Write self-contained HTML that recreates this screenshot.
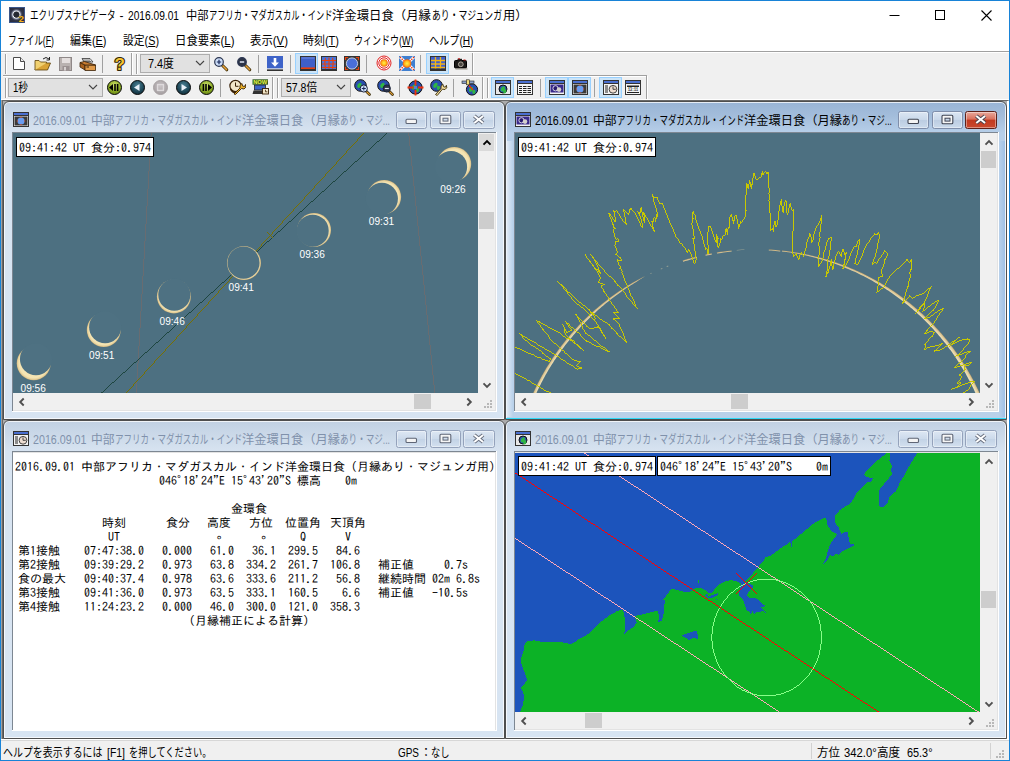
<!DOCTYPE html>
<html lang="ja"><head><meta charset="utf-8"><title>エクリプスナビゲータ</title>
<style>
html,body{margin:0;padding:0}
body{width:1010px;height:761px;position:relative;overflow:hidden;background:#f0f0f0;font:12px/1 'Liberation Sans','Noto Sans CJK JP',sans-serif}
div,span,svg{position:absolute}
u{text-decoration:underline;text-underline-offset:1px}
.m{font:12px/12px 'IPAGothic','Liberation Mono','Noto Sans CJK JP',monospace;white-space:pre;-webkit-text-stroke:0}
.m b{display:inline-block;width:6px;font-weight:normal}
</style></head>
<body>
<div style="position:absolute;left:0px;top:0px;width:1010px;height:761px;background:#1883d7;"></div>
<div style="position:absolute;left:1px;top:1px;width:1008px;height:759px;background:#f0f0f0;"></div>
<div style="position:absolute;left:1px;top:1px;width:1008px;height:50px;background:#fff;"></div>
<svg style="position:absolute;left:9px;top:7px" width="16" height="16" viewBox="0 0 16 16">
<defs><radialGradient id="cor" cx="50%" cy="50%" r="50%"><stop offset="0" stop-color="#23262f"/><stop offset=".44" stop-color="#262933"/><stop offset=".56" stop-color="#f2f4fa"/><stop offset=".68" stop-color="#9aa0b4"/><stop offset="1" stop-color="#3a3f55" stop-opacity="0"/></radialGradient>
<radialGradient id="ibg" cx="50%" cy="50%" r="70%"><stop offset="0" stop-color="#3d4258"/><stop offset="1" stop-color="#262a3c"/></radialGradient></defs>
<rect width="16" height="16" fill="#3b5689"/><rect x="1" y="1" width="14" height="14" fill="url(#ibg)"/><circle cx="7.400" cy="7.600" r="6.200" fill="url(#cor)"/>
<text x="9.800" y="15.300" font-family="Liberation Sans,sans-serif" font-weight="bold" font-size="9.400" fill="#f5b31c" stroke="#3a2c10" stroke-width=".5" paint-order="stroke">2</text></svg>
<svg style="position:absolute;left:870px;top:1px" width="139" height="30" viewBox="0 0 139 30">
<path d="M19.500 14.500h10" stroke="#000" stroke-width="1" fill="none"/>
<rect x="65.5" y="9.5" width="9" height="9" stroke="#000" stroke-width="1" fill="none"/>
<path d="M111.5 9.5l10 10M121.5 9.5l-10 10" stroke="#000" stroke-width="1.1" fill="none"/></svg>
<div style="position:absolute;left:1px;top:51px;width:1008px;height:50px;background:#f0f0f0;"></div>
<div style="position:absolute;left:1px;top:51px;width:1008px;height:1px;background:#a0a0a0;"></div>
<div style="position:absolute;left:1px;top:52px;width:1008px;height:1px;background:#fff;"></div>
<div style="position:absolute;left:3px;top:75px;width:644px;height:1px;background:#a0a0a0;"></div>
<div style="position:absolute;left:3px;top:76px;width:644px;height:1px;background:#fff;"></div>
<div style="position:absolute;left:472px;top:53px;width:1px;height:22px;background:#a0a0a0;"></div>
<div style="position:absolute;left:473px;top:53px;width:1px;height:22px;background:#fff;"></div>
<div style="position:absolute;left:646px;top:76px;width:1px;height:23px;background:#a0a0a0;"></div>
<div style="position:absolute;left:647px;top:76px;width:1px;height:23px;background:#fff;"></div>
<div style="position:absolute;left:1px;top:99px;width:1008px;height:1px;background:#fff;"></div>
<div style="position:absolute;left:5px;top:54px;width:1px;height:20px;background:#a0a0a0;"></div>
<div style="position:absolute;left:6px;top:54px;width:1px;height:20px;background:#fff;"></div>
<div style="position:absolute;left:136px;top:54px;width:1px;height:20px;background:#a0a0a0;"></div>
<div style="position:absolute;left:137px;top:54px;width:1px;height:20px;background:#fff;"></div>
<div style="position:absolute;left:5px;top:78px;width:1px;height:20px;background:#a0a0a0;"></div>
<div style="position:absolute;left:6px;top:78px;width:1px;height:20px;background:#fff;"></div>
<div style="position:absolute;left:277px;top:78px;width:1px;height:20px;background:#a0a0a0;"></div>
<div style="position:absolute;left:278px;top:78px;width:1px;height:20px;background:#fff;"></div>
<div style="position:absolute;left:487px;top:78px;width:1px;height:20px;background:#a0a0a0;"></div>
<div style="position:absolute;left:488px;top:78px;width:1px;height:20px;background:#fff;"></div>
<svg style="position:absolute;left:12px;top:56px" width="16" height="16" viewBox="0 0 16 16"><path d="M1.500 1.500h7l4 4v8h-11z" fill="#fff" stroke="#4a4a4a"/><path d="M8.500 1.500v4h4" fill="#ececec" stroke="#4a4a4a"/></svg>
<svg style="position:absolute;left:34px;top:56px" width="17" height="16" viewBox="0 0 17 16"><path d="M1 14l2.5-7h13l-3 7z" fill="#d9a336" stroke="#5a3f08" stroke-width=".8"/><path d="M1 14V4.5h4l1.5 1.5h6v1" fill="#f0d070" stroke="#5a3f08" stroke-width=".8"/><path d="M9 3q3-3 6 0" stroke="#222" fill="none"/><path d="M15.5 1v3h-3" stroke="#222" fill="none"/></svg>
<svg style="position:absolute;left:59px;top:56.5px" width="13" height="14" viewBox="0 0 13 14"><rect x=".5" y=".5" width="12" height="13" fill="#b9b2b0" stroke="#8f8888"/><rect x="3" y="1" width="8" height="5" fill="#e4dfde"/><rect x="3.5" y="9" width="7" height="5.5" fill="#9b9292"/><rect x="5" y="10" width="2" height="3.5" fill="#d6d0cf"/></svg>
<svg style="position:absolute;left:79px;top:56px" width="17" height="15" viewBox="0 0 17 15"><path d="M3 2.5h8l3 3.5h-9z" fill="#fff" stroke="#333" stroke-width=".8"/><path d="M4 4h7M5 5.3h7" stroke="#333" stroke-width=".7"/><path d="M1 6.5l5 2.5v5l-5-3z" fill="#a8601c" stroke="#3a2208" stroke-width=".8"/><path d="M6 9h10.5v5.5H6z" fill="#e09a48" stroke="#3a2208" stroke-width=".8"/><path d="M1 6.5l4.5-1l11 3.5H6z" fill="#c97c30" stroke="#3a2208" stroke-width=".8"/><rect x="7.5" y="10.5" width="2.5" height="1" fill="#3a2208"/></svg>
<div style="position:absolute;left:102px;top:55px;width:1px;height:18px;background:#a0a0a0;"></div>
<svg style="position:absolute;left:111px;top:54px" width="18" height="19" viewBox="0 0 18 19"><text x="8.800" y="16" text-anchor="middle" font-family="Liberation Sans,sans-serif" font-weight="bold" font-size="17" fill="#f5c431" stroke="#2e2408" stroke-width="2.200" paint-order="stroke" stroke-linejoin="round">?</text></svg>
<div style="position:absolute;left:131px;top:53px;width:1px;height:22px;background:#a0a0a0;"></div>
<div style="position:absolute;left:132px;top:53px;width:1px;height:22px;background:#fff;"></div>
<div style="position:absolute;left:140px;top:54px;width:70px;height:19px;background:#e1e1e1;border:1px solid #adadad;box-sizing:border-box;"></div>
<svg style="position:absolute;left:195px;top:60px" width="10" height="7" viewBox="0 0 10 7"><path d="M1 1l4 4l4-4" stroke="#444" stroke-width="1.1" fill="none"/></svg>
<svg style="position:absolute;left:213px;top:56px" width="16" height="16" viewBox="0 0 16 16"><path d="M9.500 9.500l4.300 4.300" stroke="#3a2c08" stroke-width="3" stroke-linecap="round"/><path d="M9.800 9.800l3.800 3.800" stroke="#e9a33a" stroke-width="1.500" stroke-linecap="round"/><circle cx="6" cy="6" r="4.300" fill="#cfe0fb" stroke="#2a3550" stroke-width="1.200"/><path d="M3.800 6h4.400M6 3.800v4.400" stroke="#1a2a5a" stroke-width="1.200"/></svg>
<svg style="position:absolute;left:236px;top:56px" width="16" height="16" viewBox="0 0 16 16"><path d="M9.500 9.500l4.300 4.300" stroke="#3a2c08" stroke-width="3" stroke-linecap="round"/><path d="M9.800 9.800l3.800 3.800" stroke="#e9a33a" stroke-width="1.500" stroke-linecap="round"/><circle cx="6" cy="6" r="4.300" fill="#2c3448" stroke="#2a3550" stroke-width="1.200"/><path d="M3.800 6h4.400" stroke="#dfe6f5" stroke-width="1.500"/></svg>
<div style="position:absolute;left:258px;top:55px;width:1px;height:18px;background:#a0a0a0;"></div>
<svg style="position:absolute;left:267px;top:56px" width="16" height="15" viewBox="0 0 16 15"><rect width="16" height="12.5" fill="#3e63c8"/><rect y="12.6" width="16" height="1" fill="#dfe4ee"/><rect y="13.4" width="16" height="1.6" fill="#333"/><path d="M6.7 2h2.6v4.5h2.6l-3.9 4.2l-3.9-4.2h2.6z" fill="#fff"/></svg>
<div style="position:absolute;left:290px;top:55px;width:1px;height:18px;background:#a0a0a0;"></div>
<div style="position:absolute;left:295px;top:53px;width:23px;height:21px;background:#cce4f7;border:1px solid #99d1ff;box-sizing:border-box;"></div>
<svg style="position:absolute;left:300px;top:56px" width="16" height="15" viewBox="0 0 16 15"><rect x=".5" y=".5" width="15" height="14" fill="#3e5fc8" stroke="#333"/><rect x="1" y="11.4" width="14" height="1.6" fill="#e8400c"/><rect x="1" y="13" width="14" height="1.5" fill="#333"/><rect x="1.5" y="1.5" width="13" height="1" fill="#6f8be0"/></svg>
<svg style="position:absolute;left:321px;top:56px" width="16" height="15" viewBox="0 0 16 15"><rect x=".5" y=".5" width="15" height="14" fill="#4a72d8" stroke="#333"/><path d="M1 4.5h14M1 8h14M1 11.5h14M4.5 2q-1.5 5 0 11M8 1.5v12M11.5 2q1.5 5 0 11" stroke="#e8400c" stroke-width="1.1" fill="none"/><rect x="1" y="13" width="14" height="1.5" fill="#333"/></svg>
<svg style="position:absolute;left:344px;top:56px" width="16" height="15" viewBox="0 0 16 15"><rect x=".5" y=".5" width="15" height="14" fill="#3b3b3b" stroke="#333"/><circle cx="8" cy="7.5" r="5.6" fill="#4a6fd8" stroke="#dfe6f5" stroke-width=".8"/><path d="M1.5 4V1.5H4M12 1.5h2.5V4M14.5 11v2.5H12M4 13.5H1.5V11" stroke="#e8400c" stroke-width="1.2" fill="none"/></svg>
<div style="position:absolute;left:366px;top:55px;width:1px;height:18px;background:#a0a0a0;"></div>
<svg style="position:absolute;left:376px;top:55px" width="16" height="16" viewBox="0 0 16 16"><defs><radialGradient id="sun"><stop offset="0" stop-color="#fff24a"/><stop offset=".6" stop-color="#ffb41a"/><stop offset="1" stop-color="#f0560c"/></radialGradient></defs><circle cx="8" cy="8" r="7" fill="#fff" stroke="#e02020" stroke-width="1"/><circle cx="8" cy="8" r="5.2" fill="none" stroke="#e02020" stroke-width="1"/><circle cx="8" cy="8" r="3.8" fill="url(#sun)"/></svg>
<svg style="position:absolute;left:399px;top:56px" width="16" height="15" viewBox="0 0 16 15"><rect width="16" height="15" fill="#3f7fd0"/><path d="M1 1l4.5 4.5M15 1l-4.5 4.5M1 14l4.5-4.5M15 14l-4.5-4.5" stroke="#fff" stroke-width="2.8"/><path d="M1 1l4 4M15 1l-4 4M1 14l4-4M15 14l-4-4" stroke="#e8300c" stroke-width="1.4" stroke-dasharray="1.4 1"/><circle cx="8" cy="7.5" r="4.3" fill="url(#sun)"/></svg>
<div style="position:absolute;left:420px;top:55px;width:1px;height:18px;background:#a0a0a0;"></div>
<div style="position:absolute;left:426px;top:53px;width:23px;height:21px;background:#cce4f7;border:1px solid #99d1ff;box-sizing:border-box;"></div>
<svg style="position:absolute;left:430px;top:56px" width="16" height="15" viewBox="0 0 16 15"><rect x=".5" y=".5" width="15" height="14" fill="#3e5fd0" stroke="#333"/><path d="M1 4.5h14M1 8h14M1 11.5h14M5.5 1v12M10.5 1v12" stroke="#f0b41a" stroke-width="1.3" fill="none"/><rect x="1" y="12.6" width="14" height="1.9" fill="#333"/></svg>
<svg style="position:absolute;left:454px;top:58px" width="14" height="12" viewBox="0 0 14 12"><rect x=".5" y="2.5" width="12" height="7.5" rx="1" fill="#1c1a18" stroke="#000"/><rect x="3.5" y=".8" width="4.5" height="2" fill="#1c1a18"/><rect x="4" y=".3" width="2" height="1" fill="#d02020"/><rect x="9.5" y="1.5" width="2" height="1" fill="#d02020"/><circle cx="6.8" cy="6.3" r="2.4" fill="#4a4640" stroke="#b9b2a6" stroke-width=".9"/><rect x="1.5" y="10.3" width="12" height="1.2" fill="#9a958a"/></svg>
<div style="position:absolute;left:8px;top:78px;width:95px;height:19px;background:#e1e1e1;border:1px solid #adadad;box-sizing:border-box;"></div>
<svg style="position:absolute;left:88px;top:84px" width="10" height="7" viewBox="0 0 10 7"><path d="M1 1l4 4l4-4" stroke="#444" stroke-width="1.1" fill="none"/></svg>
<svg style="position:absolute;left:105.9px;top:78.7px" width="17" height="17" viewBox="0 0 17 17"><defs><radialGradient id="gg" cx="50%" cy="35%" r="75%"><stop offset="0" stop-color="#d4e474"/><stop offset=".55" stop-color="#8cac24"/><stop offset="1" stop-color="#56700f"/></radialGradient><radialGradient id="tg" cx="50%" cy="35%" r="75%"><stop offset="0" stop-color="#4a8094"/><stop offset=".6" stop-color="#1e4656"/><stop offset="1" stop-color="#0c2630"/></radialGradient><radialGradient id="dg" cx="50%" cy="40%" r="75%"><stop offset="0" stop-color="#c9c4c6"/><stop offset="1" stop-color="#9a9496"/></radialGradient></defs><circle cx="8.5" cy="8.5" r="7" fill="url(#gg)" stroke="#0a0a0a" stroke-width="1"/><path d="M3 8.5l4-3.5v7zM8.2 5h1.6v7H8.2zM10.8 5h1.6v7h-1.6z" fill="#000"/></svg>
<svg style="position:absolute;left:129px;top:78.7px" width="17" height="17" viewBox="0 0 17 17"><defs><radialGradient id="gg" cx="50%" cy="35%" r="75%"><stop offset="0" stop-color="#d4e474"/><stop offset=".55" stop-color="#8cac24"/><stop offset="1" stop-color="#56700f"/></radialGradient><radialGradient id="tg" cx="50%" cy="35%" r="75%"><stop offset="0" stop-color="#4a8094"/><stop offset=".6" stop-color="#1e4656"/><stop offset="1" stop-color="#0c2630"/></radialGradient><radialGradient id="dg" cx="50%" cy="40%" r="75%"><stop offset="0" stop-color="#c9c4c6"/><stop offset="1" stop-color="#9a9496"/></radialGradient></defs><circle cx="8.5" cy="8.5" r="7" fill="url(#tg)" stroke="#0a0a0a" stroke-width="1"/><path d="M5 8.5l5.5-3.6v7.2z" fill="#e8f0f8"/></svg>
<svg style="position:absolute;left:152.1px;top:78.7px" width="17" height="17" viewBox="0 0 17 17"><defs><radialGradient id="gg" cx="50%" cy="35%" r="75%"><stop offset="0" stop-color="#d4e474"/><stop offset=".55" stop-color="#8cac24"/><stop offset="1" stop-color="#56700f"/></radialGradient><radialGradient id="tg" cx="50%" cy="35%" r="75%"><stop offset="0" stop-color="#4a8094"/><stop offset=".6" stop-color="#1e4656"/><stop offset="1" stop-color="#0c2630"/></radialGradient><radialGradient id="dg" cx="50%" cy="40%" r="75%"><stop offset="0" stop-color="#c9c4c6"/><stop offset="1" stop-color="#9a9496"/></radialGradient></defs><circle cx="8.5" cy="8.5" r="7" fill="url(#dg)" stroke="#a8a2a4" stroke-width="1"/><rect x="5.6" y="5.6" width="5.8" height="5.8" fill="none" stroke="#dedadc" stroke-width="1.4"/></svg>
<svg style="position:absolute;left:175.2px;top:78.7px" width="17" height="17" viewBox="0 0 17 17"><defs><radialGradient id="gg" cx="50%" cy="35%" r="75%"><stop offset="0" stop-color="#d4e474"/><stop offset=".55" stop-color="#8cac24"/><stop offset="1" stop-color="#56700f"/></radialGradient><radialGradient id="tg" cx="50%" cy="35%" r="75%"><stop offset="0" stop-color="#4a8094"/><stop offset=".6" stop-color="#1e4656"/><stop offset="1" stop-color="#0c2630"/></radialGradient><radialGradient id="dg" cx="50%" cy="40%" r="75%"><stop offset="0" stop-color="#c9c4c6"/><stop offset="1" stop-color="#9a9496"/></radialGradient></defs><circle cx="8.5" cy="8.5" r="7" fill="url(#tg)" stroke="#0a0a0a" stroke-width="1"/><path d="M12 8.5l-5.5-3.6v7.2z" fill="#e8f0f8"/></svg>
<svg style="position:absolute;left:198px;top:78.7px" width="17" height="17" viewBox="0 0 17 17"><defs><radialGradient id="gg" cx="50%" cy="35%" r="75%"><stop offset="0" stop-color="#d4e474"/><stop offset=".55" stop-color="#8cac24"/><stop offset="1" stop-color="#56700f"/></radialGradient><radialGradient id="tg" cx="50%" cy="35%" r="75%"><stop offset="0" stop-color="#4a8094"/><stop offset=".6" stop-color="#1e4656"/><stop offset="1" stop-color="#0c2630"/></radialGradient><radialGradient id="dg" cx="50%" cy="40%" r="75%"><stop offset="0" stop-color="#c9c4c6"/><stop offset="1" stop-color="#9a9496"/></radialGradient></defs><circle cx="8.5" cy="8.5" r="7" fill="url(#gg)" stroke="#0a0a0a" stroke-width="1"/><path d="M14 8.5l-4-3.5v7zM4.6 5h1.6v7H4.6zM7.2 5h1.6v7H7.2z" fill="#000"/></svg>
<div style="position:absolute;left:220px;top:79px;width:1px;height:18px;background:#a0a0a0;"></div>
<svg style="position:absolute;left:229px;top:79px" width="17" height="17" viewBox="0 0 17 17"><circle cx="6.5" cy="7" r="5.6" fill="#f2e6c8" stroke="#3a2208" stroke-width="1.2"/><path d="M6.5 3.5v3.8h3" stroke="#3a2208" stroke-width="1" fill="none"/><path d="M1.5 10q3 5 7 3" stroke="#3a2208" stroke-width="1.5" fill="none"/><path d="M5 15l6-6q-1-3 2-4.5l.5 2.5l2 .5l1-2q1.500 3-1.500 4.500l-2.500-.5l-6 6z" fill="#f0b428" stroke="#3a2208" stroke-width=".9"/></svg>
<svg style="position:absolute;left:252px;top:79px" width="17" height="16" viewBox="0 0 17 16"><rect x=".5" y=".3" width="15.5" height="5.4" fill="#2e5a1c"/><text x="8.2" y="5" text-anchor="middle" font-family="Liberation Sans,sans-serif" font-weight="bold" font-size="5.8" fill="#e6f04a" textLength="14" lengthAdjust="spacingAndGlyphs">NOW</text><rect x="2.5" y="6" width="11" height="5" fill="#3e63c8" stroke="#222" stroke-width=".8"/><path d="M1.500 11.500h11l2 3.500h-14z" fill="#333"/><rect x="10.500" y="9.500" width="6" height="5.500" fill="#f2e6c8" stroke="#3a2208" stroke-width=".9"/><path d="M13.500 10.800v2h1.800" stroke="#3a2208" stroke-width=".8" fill="none"/></svg>
<div style="position:absolute;left:272px;top:77px;width:1px;height:22px;background:#a0a0a0;"></div>
<div style="position:absolute;left:273px;top:77px;width:1px;height:22px;background:#fff;"></div>
<div style="position:absolute;left:281px;top:78px;width:70px;height:19px;background:#e1e1e1;border:1px solid #adadad;box-sizing:border-box;"></div>
<svg style="position:absolute;left:336px;top:84px" width="10" height="7" viewBox="0 0 10 7"><path d="M1 1l4 4l4-4" stroke="#444" stroke-width="1.1" fill="none"/></svg>
<svg style="position:absolute;left:354px;top:79px" width="17" height="17" viewBox="0 0 17 17"><circle cx="6.5" cy="6.5" r="5.8" fill="#2a4fb0" stroke="#111" stroke-width="1"/><path d="M3.31 5.92q2-3 4-2q1 2-1 4q-2 2-3 0zM7.08 7.08q2-1 3 1q0 3-2 3q-2-1-1-4z" fill="#2fb544"/><path d="M12.5 12.500l3 3" stroke="#3a2c08" stroke-width="2.6" stroke-linecap="round"/><path d="M12.800 12.800l2.600 2.600" stroke="#e9a33a" stroke-width="1.200" stroke-linecap="round"/><circle cx="9.800" cy="9.500" r="3.600" fill="#cfe0fb" stroke="#1a2238" stroke-width="1"/><path d="M7.800 9.500h4M9.800 7.500v4" stroke="#1a2a5a" stroke-width="1"/></svg>
<svg style="position:absolute;left:377px;top:79px" width="17" height="17" viewBox="0 0 17 17"><circle cx="6.5" cy="6.5" r="5.8" fill="#2a4fb0" stroke="#111" stroke-width="1"/><path d="M3.31 5.92q2-3 4-2q1 2-1 4q-2 2-3 0zM7.08 7.08q2-1 3 1q0 3-2 3q-2-1-1-4z" fill="#2fb544"/><path d="M12.5 12.500l3 3" stroke="#3a2c08" stroke-width="2.6" stroke-linecap="round"/><path d="M12.800 12.800l2.600 2.600" stroke="#e9a33a" stroke-width="1.200" stroke-linecap="round"/><circle cx="9.800" cy="9.500" r="3.600" fill="#2c3448" stroke="#1a2238" stroke-width="1"/><path d="M7.800 9.500h4" stroke="#dfe6f5" stroke-width="1.200"/></svg>
<div style="position:absolute;left:399px;top:79px;width:1px;height:18px;background:#a0a0a0;"></div>
<svg style="position:absolute;left:407px;top:79px" width="17" height="17" viewBox="0 0 17 17"><circle cx="8.5" cy="8.5" r="6.6" fill="#2a4fb0" stroke="#111" stroke-width="1"/><path d="M4.87 7.84q2-3 4-2q1 2-1 4q-2 2-3 0zM9.16 9.16q2-1 3 1q0 3-2 3q-2-1-1-4z" fill="#2fb544"/><path d="M8.500 .5v6M8.500 11v5.500M.5 8.500h6M11 8.500h5.500" stroke="#f0300c" stroke-width="1.800"/><rect x="7" y="7" width="3" height="3" fill="#5a7fd0"/></svg>
<svg style="position:absolute;left:430px;top:79px" width="18" height="17" viewBox="0 0 18 17"><circle cx="6.5" cy="6.5" r="5.8" fill="#2a4fb0" stroke="#111" stroke-width="1"/><path d="M3.31 5.92q2-3 4-2q1 2-1 4q-2 2-3 0zM7.08 7.08q2-1 3 1q0 3-2 3q-2-1-1-4z" fill="#2fb544"/><path d="M5.500 15.500l5.500-6q-.8-2.800 2-4.200l.5 2.400l1.900.5l1-1.900q1.400 2.800-1.500 4.300l-2.400-.5l-5.300 6.400z" fill="#f2dc9c" stroke="#3a2c08" stroke-width=".9"/></svg>
<div style="position:absolute;left:453px;top:79px;width:1px;height:18px;background:#a0a0a0;"></div>
<svg style="position:absolute;left:461px;top:79px" width="18" height="17" viewBox="0 0 18 17"><circle cx="11" cy="10.5" r="5.6" fill="#2a4fb0" stroke="#111" stroke-width="1"/><path d="M7.92 9.94q2-3 4-2q1 2-1 4q-2 2-3 0zM11.56 11.06q2-1 3 1q0 3-2 3q-2-1-1-4z" fill="#2fb544"/><rect x="1" y="2" width="4.500" height="2.600" fill="#8aa0c8" stroke="#222" stroke-width=".6"/><rect x="8.500" y="2" width="4.500" height="2.600" fill="#8aa0c8" stroke="#222" stroke-width=".6"/><rect x="5.500" y=".8" width="3" height="5" fill="#f2dc7c" stroke="#222" stroke-width=".6"/><path d="M8 6.500l4 4.500" stroke="#f0300c" stroke-width="1.300"/></svg>
<div style="position:absolute;left:482px;top:77px;width:1px;height:22px;background:#a0a0a0;"></div>
<div style="position:absolute;left:483px;top:77px;width:1px;height:22px;background:#fff;"></div>
<div style="position:absolute;left:491px;top:77px;width:23px;height:21px;background:#cce4f7;border:1px solid #99d1ff;box-sizing:border-box;"></div>
<svg style="position:absolute;left:495px;top:80px" width="16" height="15" viewBox="0 0 16 15"><rect x=".5" y=".5" width="15" height="14" fill="#f4f4f4" stroke="#333"/><rect x="1" y="1" width="14" height="2" fill="#4a6fd0"/><rect x="1" y="3" width="14" height="1" fill="#333"/><rect x="1" y="4" width="14" height="10" fill="#e8e8e8"/><circle cx="8" cy="9" r="4" fill="#2a4fb0" stroke="#111" stroke-width="1"/><path d="M5.8 8.6q2-3 4-2q1 2-1 4q-2 2-3 0zM8.4 9.4q2-1 3 1q0 3-2 3q-2-1-1-4z" fill="#2fb544"/></svg>
<svg style="position:absolute;left:517px;top:80px" width="16" height="15" viewBox="0 0 16 15"><rect x=".5" y=".5" width="15" height="14" fill="#f4f4f4" stroke="#333"/><rect x="1" y="1" width="14" height="2" fill="#4a6fd0"/><rect x="1" y="3" width="14" height="1" fill="#333"/><path d="M2 6.500h12M2 8.500h12M2 10.500h12M2 12.500h12" stroke="#222" stroke-width="1"/><path d="M5.500 5v8.500M10 5v8.500" stroke="#f4f4f4" stroke-width="1"/></svg>
<div style="position:absolute;left:540px;top:79px;width:1px;height:18px;background:#a0a0a0;"></div>
<div style="position:absolute;left:545px;top:77px;width:23px;height:21px;background:#cce4f7;border:1px solid #99d1ff;box-sizing:border-box;"></div>
<div style="position:absolute;left:568px;top:77px;width:23px;height:21px;background:#cce4f7;border:1px solid #99d1ff;box-sizing:border-box;"></div>
<svg style="position:absolute;left:549px;top:80px" width="16" height="15" viewBox="0 0 16 15"><rect x=".5" y=".5" width="15" height="14" fill="#f4f4f4" stroke="#333"/><rect x="1" y="1" width="14" height="2" fill="#4a6fd0"/><rect x="1" y="3" width="14" height="1" fill="#333"/><rect x="1.500" y="4.500" width="13" height="8" fill="#3a2a8c"/><circle cx="6.500" cy="8.300" r="2.600" fill="#2a1c70" stroke="#e4e4ec" stroke-width=".9"/><circle cx="10" cy="9.600" r="2.300" fill="#d4d0cc"/></svg>
<svg style="position:absolute;left:572px;top:80px" width="16" height="15" viewBox="0 0 16 15"><rect x=".5" y=".5" width="15" height="14" fill="#f4f4f4" stroke="#333"/><rect x="1" y="1" width="14" height="2" fill="#4a6fd0"/><rect x="1" y="3" width="14" height="1" fill="#333"/><rect x="1.500" y="4.500" width="13" height="9" fill="#3b3b3b"/><circle cx="8" cy="9" r="3.600" fill="#6a9cf0"/><path d="M8 4.800v1M8 12.200v1M3.800 9h1M11.200 9h1" stroke="#f0400c" stroke-width="1.200"/></svg>
<div style="position:absolute;left:594px;top:79px;width:1px;height:18px;background:#a0a0a0;"></div>
<div style="position:absolute;left:599px;top:77px;width:23px;height:21px;background:#cce4f7;border:1px solid #99d1ff;box-sizing:border-box;"></div>
<svg style="position:absolute;left:603px;top:80px" width="16" height="15" viewBox="0 0 16 15"><rect x=".5" y=".5" width="15" height="14" fill="#f4f4f4" stroke="#333"/><rect x="1" y="1" width="14" height="2" fill="#4a6fd0"/><rect x="1" y="3" width="14" height="1" fill="#333"/><path d="M2 6h3M2 8h3M2 10h3M2 12h3" stroke="#222" stroke-width="1"/><circle cx="10" cy="9.300" r="3.900" fill="#ecdcd0" stroke="#333" stroke-width=".9"/><path d="M10 6.500v2.800h2.800" stroke="#333" stroke-width=".9" fill="none"/></svg>
<svg style="position:absolute;left:625px;top:80px" width="16" height="15" viewBox="0 0 16 15"><rect x=".5" y=".5" width="15" height="14" fill="#f4f4f4" stroke="#333"/><rect x="1" y="1" width="14" height="2" fill="#4a6fd0"/><rect x="1" y="3" width="14" height="1" fill="#333"/><rect x="2" y="5.500" width="12" height="1.500" fill="#222"/><rect x="2" y="12" width="12" height="1" fill="#222"/><text x="8" y="11.300" text-anchor="middle" font-family="Liberation Mono,monospace" font-weight="bold" font-size="5" fill="#222" textLength="10" lengthAdjust="spacingAndGlyphs">13:11</text></svg>
<div style="position:absolute;left:1px;top:100px;width:1008px;height:639px;background:#a0a0a0;"></div>
<div style="position:absolute;left:2px;top:100px;width:1006px;height:1px;background:#696969;"></div>
<div style="position:absolute;left:2px;top:101px;width:1px;height:638px;background:#696969;"></div>
<div style="position:absolute;left:3px;top:101px;width:1004px;height:638px;background:#ababab;"></div>
<div style="position:absolute;left:1007px;top:101px;width:2px;height:638px;background:#fff;"></div>
<div style="position:absolute;left:3px;top:101px;width:502px;height:319px;box-sizing:border-box;border:1px solid #4e4e4e;border-radius:6px 6px 0 0;background:linear-gradient(#c1d1e3 0px,#cbd9e9 14px,#d8e4f1 31px,#d7e4f2 100%);box-shadow:inset 0 0 0 1px rgba(255,255,255,.75)"></div>
<div style="position:absolute;left:12px;top:132px;width:485px;height:280px;background:#fff;"></div>
<div style="position:absolute;left:12px;top:132px;width:484px;height:1px;background:#7d8792;"></div>
<div style="position:absolute;left:12px;top:132px;width:1px;height:279px;background:#7d8792;"></div>
<div style="position:absolute;left:13px;top:133px;width:483px;height:278px;background:#e3e3e3;"></div>
<svg style="position:absolute;left:13px;top:112px" width="16" height="15" viewBox="0 0 16 15"><rect x=".5" y=".5" width="15" height="14" fill="#f4f4f4" stroke="#333"/><rect x="1" y="1" width="14" height="2" fill="#4a6fd0"/><rect x="1" y="3" width="14" height="1" fill="#333"/><rect x="1.500" y="4.500" width="13" height="9" fill="#3b3b3b"/><circle cx="8" cy="9" r="3.600" fill="#6a9cf0"/><path d="M8 4.800v1M8 12.200v1M3.800 9h1M11.200 9h1" stroke="#f0400c" stroke-width="1.200"/></svg>
<div style="position:absolute;left:395.5px;top:111px;width:31px;height:18px;box-sizing:border-box;border:1px solid #94a2bb;border-radius:2.500px;background:linear-gradient(#dde7f3 0%,#ccdaeb 48%,#c3d3e6 52%,#d3e0ef 100%);box-shadow:inset 0 0 0 1px rgba(255,255,255,.4)"></div>
<svg style="position:absolute;left:395.5px;top:111px" width="31" height="18" viewBox="0 0 31 18"><rect x="10" y="8.300" width="10.500" height="4.200" rx="1" fill="#f4f4f4" stroke="#5f6676" stroke-width="1.100"/></svg>
<div style="position:absolute;left:429.5px;top:111px;width:31px;height:18px;box-sizing:border-box;border:1px solid #94a2bb;border-radius:2.500px;background:linear-gradient(#dde7f3 0%,#ccdaeb 48%,#c3d3e6 52%,#d3e0ef 100%);box-shadow:inset 0 0 0 1px rgba(255,255,255,.4)"></div>
<svg style="position:absolute;left:429.5px;top:111px" width="31" height="18" viewBox="0 0 31 18"><rect x="10" y="4.200" width="10.800" height="8.500" rx="1" fill="#f6f6f6" stroke="#5f6676" stroke-width="1.100"/><rect x="13" y="7.200" width="5" height="2.900" fill="#cfdcec" stroke="#5f6676" stroke-width="1"/></svg>
<div style="position:absolute;left:463.4px;top:111px;width:31.6px;height:18px;box-sizing:border-box;border:1px solid #94a2bb;border-radius:2.500px;background:linear-gradient(#dde7f3 0%,#ccdaeb 48%,#c3d3e6 52%,#d3e0ef 100%);box-shadow:inset 0 0 0 1px rgba(255,255,255,.4)"></div>
<svg style="position:absolute;left:463.4px;top:111px" width="31" height="18" viewBox="0 0 31 18"><path d="M11.300 5L20.100 12M20.100 5L11.300 12" stroke="#5f6676" stroke-width="3.900" stroke-linecap="butt" stroke-opacity=".9"/><path d="M11.300 5L20.100 12M20.100 5L11.300 12" stroke="#fff" stroke-width="1.900" stroke-linecap="butt"/></svg>
<div style="position:absolute;left:505px;top:101px;width:502px;height:319px;box-sizing:border-box;border:1px solid #4e4e4e;border-radius:6px 6px 0 0;background:linear-gradient(#98b4d5 0px,#a3bddb 14px,#b7cfe9 31px,#b9d1ea 100%);box-shadow:inset 0 0 0 1px rgba(255,255,255,.75)"></div>
<div style="position:absolute;left:507px;top:141px;width:6px;height:276px;background:linear-gradient(90deg,#dfe9f5,#b9d1ea);"></div>
<div style="position:absolute;left:999px;top:141px;width:6px;height:276px;background:linear-gradient(90deg,#b9d1ea,#9fc0e6);"></div>
<div style="position:absolute;left:506px;top:418px;width:500px;height:1px;background:#2fd9f7;"></div>
<div style="position:absolute;left:514px;top:132px;width:485px;height:280px;background:#fff;"></div>
<div style="position:absolute;left:514px;top:132px;width:484px;height:1px;background:#7d8792;"></div>
<div style="position:absolute;left:514px;top:132px;width:1px;height:279px;background:#7d8792;"></div>
<div style="position:absolute;left:515px;top:133px;width:483px;height:278px;background:#e3e3e3;"></div>
<svg style="position:absolute;left:515px;top:112px" width="16" height="15" viewBox="0 0 16 15"><rect x=".5" y=".5" width="15" height="14" fill="#f4f4f4" stroke="#333"/><rect x="1" y="1" width="14" height="2" fill="#4a6fd0"/><rect x="1" y="3" width="14" height="1" fill="#333"/><rect x="1.500" y="4.500" width="13" height="8" fill="#3a2a8c"/><circle cx="6.500" cy="8.300" r="2.600" fill="#2a1c70" stroke="#e4e4ec" stroke-width=".9"/><circle cx="10" cy="9.600" r="2.300" fill="#d4d0cc"/></svg>
<div style="position:absolute;left:897.5px;top:111px;width:31px;height:18px;box-sizing:border-box;border:1px solid #7f8eaa;border-radius:2.500px;background:linear-gradient(#dbe6f3 0%,#c9d8ea 48%,#bccde2 52%,#cbdaeb 100%);box-shadow:inset 0 0 0 1px rgba(255,255,255,.4)"></div>
<svg style="position:absolute;left:897.5px;top:111px" width="31" height="18" viewBox="0 0 31 18"><rect x="10" y="8.300" width="10.500" height="4.200" rx="1" fill="#f4f4f4" stroke="#3f4452" stroke-width="1.100"/></svg>
<div style="position:absolute;left:931.5px;top:111px;width:31px;height:18px;box-sizing:border-box;border:1px solid #7f8eaa;border-radius:2.500px;background:linear-gradient(#dbe6f3 0%,#c9d8ea 48%,#bccde2 52%,#cbdaeb 100%);box-shadow:inset 0 0 0 1px rgba(255,255,255,.4)"></div>
<svg style="position:absolute;left:931.5px;top:111px" width="31" height="18" viewBox="0 0 31 18"><rect x="10" y="4.200" width="10.800" height="8.500" rx="1" fill="#f6f6f6" stroke="#3f4452" stroke-width="1.100"/><rect x="13" y="7.200" width="5" height="2.900" fill="#c9d8ea" stroke="#3f4452" stroke-width="1"/></svg>
<div style="position:absolute;left:965.4px;top:111px;width:31.6px;height:18px;box-sizing:border-box;border:1px solid #5e2018;border-radius:2.500px;background:linear-gradient(#e8a99c 0%,#d9705c 45%,#c2391f 50%,#c9492f 100%);box-shadow:inset 0 0 0 1px rgba(255,255,255,.4)"></div>
<svg style="position:absolute;left:965.4px;top:111px" width="31" height="18" viewBox="0 0 31 18"><path d="M11.300 5L20.100 12M20.100 5L11.300 12" stroke="#3f4452" stroke-width="3.900" stroke-linecap="butt" stroke-opacity=".9"/><path d="M11.300 5L20.100 12M20.100 5L11.300 12" stroke="#fff" stroke-width="1.900" stroke-linecap="butt"/></svg>
<div style="position:absolute;left:3px;top:420px;width:502px;height:319px;box-sizing:border-box;border:1px solid #4e4e4e;border-radius:6px 6px 0 0;background:linear-gradient(#c1d1e3 0px,#cbd9e9 14px,#d8e4f1 31px,#d7e4f2 100%);box-shadow:inset 0 0 0 1px rgba(255,255,255,.75)"></div>
<div style="position:absolute;left:12px;top:451px;width:485px;height:280px;background:#fff;"></div>
<div style="position:absolute;left:12px;top:451px;width:484px;height:1px;background:#7d8792;"></div>
<div style="position:absolute;left:12px;top:451px;width:1px;height:279px;background:#7d8792;"></div>
<div style="position:absolute;left:13px;top:452px;width:483px;height:278px;background:#e3e3e3;"></div>
<svg style="position:absolute;left:13px;top:431px" width="16" height="15" viewBox="0 0 16 15"><rect x=".5" y=".5" width="15" height="14" fill="#f4f4f4" stroke="#333"/><rect x="1" y="1" width="14" height="2" fill="#4a6fd0"/><rect x="1" y="3" width="14" height="1" fill="#333"/><path d="M2 6h3M2 8h3M2 10h3M2 12h3" stroke="#222" stroke-width="1"/><circle cx="10" cy="9.300" r="3.900" fill="#ecdcd0" stroke="#333" stroke-width=".9"/><path d="M10 6.500v2.800h2.800" stroke="#333" stroke-width=".9" fill="none"/></svg>
<div style="position:absolute;left:395.5px;top:430px;width:31px;height:18px;box-sizing:border-box;border:1px solid #94a2bb;border-radius:2.500px;background:linear-gradient(#dde7f3 0%,#ccdaeb 48%,#c3d3e6 52%,#d3e0ef 100%);box-shadow:inset 0 0 0 1px rgba(255,255,255,.4)"></div>
<svg style="position:absolute;left:395.5px;top:430px" width="31" height="18" viewBox="0 0 31 18"><rect x="10" y="8.300" width="10.500" height="4.200" rx="1" fill="#f4f4f4" stroke="#5f6676" stroke-width="1.100"/></svg>
<div style="position:absolute;left:429.5px;top:430px;width:31px;height:18px;box-sizing:border-box;border:1px solid #94a2bb;border-radius:2.500px;background:linear-gradient(#dde7f3 0%,#ccdaeb 48%,#c3d3e6 52%,#d3e0ef 100%);box-shadow:inset 0 0 0 1px rgba(255,255,255,.4)"></div>
<svg style="position:absolute;left:429.5px;top:430px" width="31" height="18" viewBox="0 0 31 18"><rect x="10" y="4.200" width="10.800" height="8.500" rx="1" fill="#f6f6f6" stroke="#5f6676" stroke-width="1.100"/><rect x="13" y="7.200" width="5" height="2.900" fill="#cfdcec" stroke="#5f6676" stroke-width="1"/></svg>
<div style="position:absolute;left:463.4px;top:430px;width:31.6px;height:18px;box-sizing:border-box;border:1px solid #94a2bb;border-radius:2.500px;background:linear-gradient(#dde7f3 0%,#ccdaeb 48%,#c3d3e6 52%,#d3e0ef 100%);box-shadow:inset 0 0 0 1px rgba(255,255,255,.4)"></div>
<svg style="position:absolute;left:463.4px;top:430px" width="31" height="18" viewBox="0 0 31 18"><path d="M11.300 5L20.100 12M20.100 5L11.300 12" stroke="#5f6676" stroke-width="3.900" stroke-linecap="butt" stroke-opacity=".9"/><path d="M11.300 5L20.100 12M20.100 5L11.300 12" stroke="#fff" stroke-width="1.900" stroke-linecap="butt"/></svg>
<div style="position:absolute;left:505px;top:420px;width:502px;height:319px;box-sizing:border-box;border:1px solid #4e4e4e;border-radius:6px 6px 0 0;background:linear-gradient(#c1d1e3 0px,#cbd9e9 14px,#d8e4f1 31px,#d7e4f2 100%);box-shadow:inset 0 0 0 1px rgba(255,255,255,.75)"></div>
<div style="position:absolute;left:514px;top:451px;width:485px;height:280px;background:#fff;"></div>
<div style="position:absolute;left:514px;top:451px;width:484px;height:1px;background:#7d8792;"></div>
<div style="position:absolute;left:514px;top:451px;width:1px;height:279px;background:#7d8792;"></div>
<div style="position:absolute;left:515px;top:452px;width:483px;height:278px;background:#e3e3e3;"></div>
<svg style="position:absolute;left:515px;top:431px" width="16" height="15" viewBox="0 0 16 15"><rect x=".5" y=".5" width="15" height="14" fill="#f4f4f4" stroke="#333"/><rect x="1" y="1" width="14" height="2" fill="#4a6fd0"/><rect x="1" y="3" width="14" height="1" fill="#333"/><rect x="1" y="4" width="14" height="10" fill="#e8e8e8"/><circle cx="8" cy="9" r="4" fill="#2a4fb0" stroke="#111" stroke-width="1"/><path d="M5.8 8.6q2-3 4-2q1 2-1 4q-2 2-3 0zM8.4 9.4q2-1 3 1q0 3-2 3q-2-1-1-4z" fill="#2fb544"/></svg>
<div style="position:absolute;left:897.5px;top:430px;width:31px;height:18px;box-sizing:border-box;border:1px solid #94a2bb;border-radius:2.500px;background:linear-gradient(#dde7f3 0%,#ccdaeb 48%,#c3d3e6 52%,#d3e0ef 100%);box-shadow:inset 0 0 0 1px rgba(255,255,255,.4)"></div>
<svg style="position:absolute;left:897.5px;top:430px" width="31" height="18" viewBox="0 0 31 18"><rect x="10" y="8.300" width="10.500" height="4.200" rx="1" fill="#f4f4f4" stroke="#5f6676" stroke-width="1.100"/></svg>
<div style="position:absolute;left:931.5px;top:430px;width:31px;height:18px;box-sizing:border-box;border:1px solid #94a2bb;border-radius:2.500px;background:linear-gradient(#dde7f3 0%,#ccdaeb 48%,#c3d3e6 52%,#d3e0ef 100%);box-shadow:inset 0 0 0 1px rgba(255,255,255,.4)"></div>
<svg style="position:absolute;left:931.5px;top:430px" width="31" height="18" viewBox="0 0 31 18"><rect x="10" y="4.200" width="10.800" height="8.500" rx="1" fill="#f6f6f6" stroke="#5f6676" stroke-width="1.100"/><rect x="13" y="7.200" width="5" height="2.900" fill="#cfdcec" stroke="#5f6676" stroke-width="1"/></svg>
<div style="position:absolute;left:965.4px;top:430px;width:31.6px;height:18px;box-sizing:border-box;border:1px solid #94a2bb;border-radius:2.500px;background:linear-gradient(#dde7f3 0%,#ccdaeb 48%,#c3d3e6 52%,#d3e0ef 100%);box-shadow:inset 0 0 0 1px rgba(255,255,255,.4)"></div>
<svg style="position:absolute;left:965.4px;top:430px" width="31" height="18" viewBox="0 0 31 18"><path d="M11.300 5L20.100 12M20.100 5L11.300 12" stroke="#5f6676" stroke-width="3.900" stroke-linecap="butt" stroke-opacity=".9"/><path d="M11.300 5L20.100 12M20.100 5L11.300 12" stroke="#fff" stroke-width="1.900" stroke-linecap="butt"/></svg>
<svg style="position:absolute;left:13px;top:133px;background:#4d7081" width="465" height="260" viewBox="13 133 465 260"><defs><radialGradient id="sd" cx="50%" cy="50%" r="50%"><stop offset="0" stop-color="#f8ecc0"/><stop offset=".86" stop-color="#f4e4b2"/><stop offset=".95" stop-color="#e6d09a"/><stop offset="1" stop-color="#cbb27c"/></radialGradient></defs><path d="M151 133h1v1h-1zM151 134h1v1h-1zM151 135h1v1h-1zM150 136h1v1h-1zM150 137h1v1h-1zM150 138h1v1h-1zM150 139h1v1h-1zM150 140h1v1h-1zM150 141h1v1h-1zM150 142h1v1h-1zM150 143h1v1h-1zM150 144h1v1h-1zM150 145h1v1h-1zM150 146h1v1h-1zM150 147h1v1h-1zM150 148h1v1h-1zM150 149h1v1h-1zM150 150h1v1h-1zM150 151h1v1h-1zM150 152h1v1h-1zM150 153h1v1h-1zM149 154h1v1h-1zM149 155h1v1h-1zM149 156h1v1h-1zM149 157h1v1h-1zM149 158h1v1h-1zM149 159h1v1h-1zM149 160h1v1h-1zM149 161h1v1h-1zM149 162h1v1h-1zM149 163h1v1h-1zM149 164h1v1h-1zM149 165h1v1h-1zM149 166h1v1h-1zM149 167h1v1h-1zM149 168h1v1h-1zM149 169h1v1h-1zM149 170h1v1h-1zM148 171h1v1h-1zM148 172h1v1h-1zM148 173h1v1h-1zM148 174h1v1h-1zM148 175h1v1h-1zM148 176h1v1h-1zM148 177h1v1h-1zM148 178h1v1h-1zM148 179h1v1h-1zM148 180h1v1h-1zM148 181h1v1h-1zM148 182h1v1h-1zM148 183h1v1h-1zM148 184h1v1h-1zM148 185h1v1h-1zM148 186h1v1h-1zM148 187h1v1h-1zM148 188h1v1h-1zM147 189h1v1h-1zM147 190h1v1h-1zM147 191h1v1h-1zM147 192h1v1h-1zM147 193h1v1h-1zM147 194h1v1h-1zM147 195h1v1h-1zM147 196h1v1h-1zM147 197h1v1h-1zM147 198h1v1h-1zM147 199h1v1h-1zM147 200h1v1h-1zM147 201h1v1h-1zM147 202h1v1h-1zM147 203h1v1h-1zM147 204h1v1h-1zM147 205h1v1h-1zM146 206h1v1h-1zM146 207h1v1h-1zM146 208h1v1h-1zM146 209h1v1h-1zM146 210h1v1h-1zM146 211h1v1h-1zM146 212h1v1h-1zM146 213h1v1h-1zM146 214h1v1h-1zM146 215h1v1h-1zM146 216h1v1h-1zM146 217h1v1h-1zM146 218h1v1h-1zM146 219h1v1h-1zM146 220h1v1h-1zM146 221h1v1h-1zM146 222h1v1h-1zM146 223h1v1h-1zM145 224h1v1h-1zM145 225h1v1h-1zM145 226h1v1h-1zM145 227h1v1h-1zM145 228h1v1h-1zM145 229h1v1h-1zM145 230h1v1h-1zM145 231h1v1h-1zM145 232h1v1h-1zM145 233h1v1h-1zM145 234h1v1h-1zM145 235h1v1h-1zM145 236h1v1h-1zM145 237h1v1h-1zM145 238h1v1h-1zM145 239h1v1h-1zM145 240h1v1h-1zM144 241h1v1h-1zM144 242h1v1h-1zM144 243h1v1h-1zM144 244h1v1h-1zM144 245h1v1h-1zM144 246h1v1h-1zM144 247h1v1h-1zM144 248h1v1h-1zM144 249h1v1h-1zM144 250h1v1h-1zM144 251h1v1h-1zM144 252h1v1h-1zM144 253h1v1h-1zM144 254h1v1h-1zM144 255h1v1h-1zM144 256h1v1h-1zM144 257h1v1h-1zM144 258h1v1h-1zM143 259h1v1h-1zM143 260h1v1h-1zM143 261h1v1h-1zM143 262h1v1h-1zM143 263h1v1h-1zM143 264h1v1h-1zM143 265h1v1h-1zM143 266h1v1h-1zM143 267h1v1h-1zM143 268h1v1h-1zM143 269h1v1h-1zM143 270h1v1h-1zM143 271h1v1h-1zM143 272h1v1h-1zM143 273h1v1h-1zM143 274h1v1h-1zM143 275h1v1h-1zM142 276h1v1h-1zM142 277h1v1h-1zM142 278h1v1h-1zM142 279h1v1h-1zM142 280h1v1h-1zM142 281h1v1h-1zM142 282h1v1h-1zM142 283h1v1h-1zM142 284h1v1h-1zM142 285h1v1h-1zM142 286h1v1h-1zM142 287h1v1h-1zM142 288h1v1h-1zM142 289h1v1h-1zM142 290h1v1h-1zM142 291h1v1h-1zM142 292h1v1h-1zM142 293h1v1h-1zM141 294h1v1h-1zM141 295h1v1h-1zM141 296h1v1h-1zM141 297h1v1h-1zM141 298h1v1h-1zM141 299h1v1h-1zM141 300h1v1h-1zM141 301h1v1h-1zM141 302h1v1h-1zM141 303h1v1h-1zM141 304h1v1h-1zM141 305h1v1h-1zM141 306h1v1h-1zM141 307h1v1h-1zM141 308h1v1h-1zM141 309h1v1h-1zM141 310h1v1h-1zM140 311h1v1h-1zM140 312h1v1h-1zM140 313h1v1h-1zM140 314h1v1h-1zM140 315h1v1h-1zM140 316h1v1h-1zM140 317h1v1h-1zM140 318h1v1h-1zM140 319h1v1h-1zM140 320h1v1h-1zM140 321h1v1h-1zM140 322h1v1h-1zM140 323h1v1h-1zM140 324h1v1h-1zM140 325h1v1h-1zM140 326h1v1h-1zM140 327h1v1h-1zM139 328h1v1h-1zM139 329h1v1h-1zM139 330h1v1h-1zM139 331h1v1h-1zM139 332h1v1h-1zM139 333h1v1h-1zM139 334h1v1h-1zM139 335h1v1h-1zM139 336h1v1h-1zM139 337h1v1h-1zM139 338h1v1h-1zM139 339h1v1h-1zM139 340h1v1h-1zM139 341h1v1h-1zM139 342h1v1h-1zM139 343h1v1h-1zM139 344h1v1h-1zM139 345h1v1h-1zM138 346h1v1h-1zM138 347h1v1h-1zM138 348h1v1h-1zM138 349h1v1h-1zM138 350h1v1h-1zM138 351h1v1h-1zM138 352h1v1h-1zM138 353h1v1h-1zM138 354h1v1h-1zM138 355h1v1h-1zM138 356h1v1h-1zM138 357h1v1h-1zM138 358h1v1h-1zM138 359h1v1h-1zM138 360h1v1h-1zM138 361h1v1h-1zM138 362h1v1h-1zM137 363h1v1h-1zM137 364h1v1h-1zM137 365h1v1h-1zM137 366h1v1h-1zM137 367h1v1h-1zM137 368h1v1h-1zM137 369h1v1h-1zM137 370h1v1h-1zM137 371h1v1h-1zM137 372h1v1h-1zM137 373h1v1h-1zM137 374h1v1h-1zM137 375h1v1h-1zM137 376h1v1h-1zM137 377h1v1h-1zM137 378h1v1h-1zM137 379h1v1h-1zM137 380h1v1h-1zM136 381h1v1h-1zM136 382h1v1h-1zM136 383h1v1h-1zM136 384h1v1h-1zM136 385h1v1h-1zM136 386h1v1h-1zM136 387h1v1h-1zM136 388h1v1h-1zM136 389h1v1h-1zM136 390h1v1h-1zM136 391h1v1h-1zM136 392h1v1h-1z" fill="#686c71" shape-rendering="crispEdges"/><path d="M408 133h1v1h-1zM408 134h1v1h-1zM408 135h1v1h-1zM409 136h1v1h-1zM409 137h1v1h-1zM409 138h1v1h-1zM409 139h1v1h-1zM409 140h1v1h-1zM409 141h1v1h-1zM409 142h1v1h-1zM409 143h1v1h-1zM409 144h1v1h-1zM409 145h1v1h-1zM410 146h1v1h-1zM410 147h1v1h-1zM410 148h1v1h-1zM410 149h1v1h-1zM410 150h1v1h-1zM410 151h1v1h-1zM410 152h1v1h-1zM410 153h1v1h-1zM410 154h1v1h-1zM410 155h1v1h-1zM411 156h1v1h-1zM411 157h1v1h-1zM411 158h1v1h-1zM411 159h1v1h-1zM411 160h1v1h-1zM411 161h1v1h-1zM411 162h1v1h-1zM411 163h1v1h-1zM411 164h1v1h-1zM411 165h1v1h-1zM412 166h1v1h-1zM412 167h1v1h-1zM412 168h1v1h-1zM412 169h1v1h-1zM412 170h1v1h-1zM412 171h1v1h-1zM412 172h1v1h-1zM412 173h1v1h-1zM412 174h1v1h-1zM412 175h1v1h-1zM413 176h1v1h-1zM413 177h1v1h-1zM413 178h1v1h-1zM413 179h1v1h-1zM413 180h1v1h-1zM413 181h1v1h-1zM413 182h1v1h-1zM413 183h1v1h-1zM413 184h1v1h-1zM413 185h1v1h-1zM414 186h1v1h-1zM414 187h1v1h-1zM414 188h1v1h-1zM414 189h1v1h-1zM414 190h1v1h-1zM414 191h1v1h-1zM414 192h1v1h-1zM414 193h1v1h-1zM414 194h1v1h-1zM414 195h1v1h-1zM415 196h1v1h-1zM415 197h1v1h-1zM415 198h1v1h-1zM415 199h1v1h-1zM415 200h1v1h-1zM415 201h1v1h-1zM415 202h1v1h-1zM415 203h1v1h-1zM415 204h1v1h-1zM415 205h1v1h-1zM416 206h1v1h-1zM416 207h1v1h-1zM416 208h1v1h-1zM416 209h1v1h-1zM416 210h1v1h-1zM416 211h1v1h-1zM416 212h1v1h-1zM416 213h1v1h-1zM416 214h1v1h-1zM416 215h1v1h-1zM417 216h1v1h-1zM417 217h1v1h-1zM417 218h1v1h-1zM417 219h1v1h-1zM417 220h1v1h-1zM417 221h1v1h-1zM417 222h1v1h-1zM417 223h1v1h-1zM417 224h1v1h-1zM417 225h1v1h-1zM418 226h1v1h-1zM418 227h1v1h-1zM418 228h1v1h-1zM418 229h1v1h-1zM418 230h1v1h-1zM418 231h1v1h-1zM418 232h1v1h-1zM418 233h1v1h-1zM418 234h1v1h-1zM418 235h1v1h-1zM419 236h1v1h-1zM419 237h1v1h-1zM419 238h1v1h-1zM419 239h1v1h-1zM419 240h1v1h-1zM419 241h1v1h-1zM419 242h1v1h-1zM419 243h1v1h-1zM419 244h1v1h-1zM419 245h1v1h-1zM420 246h1v1h-1zM420 247h1v1h-1zM420 248h1v1h-1zM420 249h1v1h-1zM420 250h1v1h-1zM420 251h1v1h-1zM420 252h1v1h-1zM420 253h1v1h-1zM420 254h1v1h-1zM420 255h1v1h-1zM421 256h1v1h-1zM421 257h1v1h-1zM421 258h1v1h-1zM421 259h1v1h-1zM421 260h1v1h-1zM421 261h1v1h-1zM421 262h1v1h-1zM421 263h1v1h-1zM421 264h1v1h-1zM422 265h1v1h-1zM422 266h1v1h-1zM422 267h1v1h-1zM422 268h1v1h-1zM422 269h1v1h-1zM422 270h1v1h-1zM422 271h1v1h-1zM422 272h1v1h-1zM422 273h1v1h-1zM422 274h1v1h-1zM423 275h1v1h-1zM423 276h1v1h-1zM423 277h1v1h-1zM423 278h1v1h-1zM423 279h1v1h-1zM423 280h1v1h-1zM423 281h1v1h-1zM423 282h1v1h-1zM423 283h1v1h-1zM423 284h1v1h-1zM424 285h1v1h-1zM424 286h1v1h-1zM424 287h1v1h-1zM424 288h1v1h-1zM424 289h1v1h-1zM424 290h1v1h-1zM424 291h1v1h-1zM424 292h1v1h-1zM424 293h1v1h-1zM424 294h1v1h-1zM425 295h1v1h-1zM425 296h1v1h-1zM425 297h1v1h-1zM425 298h1v1h-1zM425 299h1v1h-1zM425 300h1v1h-1zM425 301h1v1h-1zM425 302h1v1h-1zM425 303h1v1h-1zM425 304h1v1h-1zM426 305h1v1h-1zM426 306h1v1h-1zM426 307h1v1h-1zM426 308h1v1h-1zM426 309h1v1h-1zM426 310h1v1h-1zM426 311h1v1h-1zM426 312h1v1h-1zM426 313h1v1h-1zM426 314h1v1h-1zM427 315h1v1h-1zM427 316h1v1h-1zM427 317h1v1h-1zM427 318h1v1h-1zM427 319h1v1h-1zM427 320h1v1h-1zM427 321h1v1h-1zM427 322h1v1h-1zM427 323h1v1h-1zM427 324h1v1h-1zM428 325h1v1h-1zM428 326h1v1h-1zM428 327h1v1h-1zM428 328h1v1h-1zM428 329h1v1h-1zM428 330h1v1h-1zM428 331h1v1h-1zM428 332h1v1h-1zM428 333h1v1h-1zM428 334h1v1h-1zM429 335h1v1h-1zM429 336h1v1h-1zM429 337h1v1h-1zM429 338h1v1h-1zM429 339h1v1h-1zM429 340h1v1h-1zM429 341h1v1h-1zM429 342h1v1h-1zM429 343h1v1h-1zM429 344h1v1h-1zM430 345h1v1h-1zM430 346h1v1h-1zM430 347h1v1h-1zM430 348h1v1h-1zM430 349h1v1h-1zM430 350h1v1h-1zM430 351h1v1h-1zM430 352h1v1h-1zM430 353h1v1h-1zM430 354h1v1h-1zM431 355h1v1h-1zM431 356h1v1h-1zM431 357h1v1h-1zM431 358h1v1h-1zM431 359h1v1h-1zM431 360h1v1h-1zM431 361h1v1h-1zM431 362h1v1h-1zM431 363h1v1h-1zM431 364h1v1h-1zM432 365h1v1h-1zM432 366h1v1h-1zM432 367h1v1h-1zM432 368h1v1h-1zM432 369h1v1h-1zM432 370h1v1h-1zM432 371h1v1h-1zM432 372h1v1h-1zM432 373h1v1h-1zM432 374h1v1h-1zM433 375h1v1h-1zM433 376h1v1h-1zM433 377h1v1h-1zM433 378h1v1h-1zM433 379h1v1h-1zM433 380h1v1h-1zM433 381h1v1h-1zM433 382h1v1h-1zM433 383h1v1h-1zM433 384h1v1h-1zM434 385h1v1h-1zM434 386h1v1h-1zM434 387h1v1h-1zM434 388h1v1h-1zM434 389h1v1h-1zM434 390h1v1h-1zM434 391h1v1h-1zM434 392h1v1h-1z" fill="#686c71" shape-rendering="crispEdges"/><path d="M363 133h1v1h-1zM362 134h1v1h-1zM361 135h1v1h-1zM360 136h1v1h-1zM359 137h1v1h-1zM358 138h1v1h-1zM357 139h1v1h-1zM357 140h1v1h-1zM356 141h1v1h-1zM355 142h1v1h-1zM354 143h1v1h-1zM353 144h1v1h-1zM352 145h1v1h-1zM351 146h1v1h-1zM350 147h1v1h-1zM349 148h1v1h-1zM348 149h1v1h-1zM347 150h1v1h-1zM346 151h1v1h-1zM346 152h1v1h-1zM345 153h1v1h-1zM344 154h1v1h-1zM343 155h1v1h-1zM342 156h1v1h-1zM341 157h1v1h-1zM340 158h1v1h-1zM339 159h1v1h-1zM338 160h1v1h-1zM337 161h1v1h-1zM336 162h1v1h-1zM336 163h1v1h-1zM335 164h1v1h-1zM334 165h1v1h-1zM333 166h1v1h-1zM332 167h1v1h-1zM331 168h1v1h-1zM330 169h1v1h-1zM329 170h1v1h-1zM328 171h1v1h-1zM327 172h1v1h-1zM326 173h1v1h-1zM325 174h1v1h-1zM325 175h1v1h-1zM324 176h1v1h-1zM323 177h1v1h-1zM322 178h1v1h-1zM321 179h1v1h-1zM320 180h1v1h-1zM319 181h1v1h-1zM318 182h1v1h-1zM317 183h1v1h-1zM316 184h1v1h-1zM315 185h1v1h-1zM314 186h1v1h-1zM314 187h1v1h-1zM313 188h1v1h-1zM312 189h1v1h-1zM311 190h1v1h-1zM310 191h1v1h-1zM309 192h1v1h-1zM308 193h1v1h-1zM307 194h1v1h-1zM306 195h1v1h-1zM305 196h1v1h-1zM304 197h1v1h-1zM304 198h1v1h-1zM303 199h1v1h-1zM302 200h1v1h-1zM301 201h1v1h-1zM300 202h1v1h-1zM299 203h1v1h-1zM298 204h1v1h-1zM297 205h1v1h-1zM296 206h1v1h-1zM295 207h1v1h-1zM294 208h1v1h-1zM293 209h1v1h-1zM293 210h1v1h-1zM292 211h1v1h-1zM291 212h1v1h-1zM290 213h1v1h-1zM289 214h1v1h-1zM288 215h1v1h-1zM287 216h1v1h-1zM286 217h1v1h-1zM285 218h1v1h-1zM284 219h1v1h-1zM283 220h1v1h-1zM282 221h1v1h-1zM282 222h1v1h-1zM281 223h1v1h-1zM280 224h1v1h-1zM279 225h1v1h-1zM278 226h1v1h-1zM277 227h1v1h-1zM276 228h1v1h-1zM275 229h1v1h-1zM274 230h1v1h-1zM273 231h1v1h-1zM272 232h1v1h-1zM272 233h1v1h-1zM271 234h1v1h-1zM270 235h1v1h-1zM269 236h1v1h-1zM268 237h1v1h-1zM267 238h1v1h-1zM266 239h1v1h-1zM265 240h1v1h-1zM264 241h1v1h-1zM263 242h1v1h-1zM262 243h1v1h-1zM261 244h1v1h-1zM261 245h1v1h-1zM260 246h1v1h-1zM259 247h1v1h-1zM258 248h1v1h-1zM257 249h1v1h-1zM256 250h1v1h-1zM255 251h1v1h-1zM254 252h1v1h-1zM253 253h1v1h-1zM252 254h1v1h-1zM251 255h1v1h-1zM250 256h1v1h-1zM250 257h1v1h-1zM249 258h1v1h-1zM248 259h1v1h-1zM247 260h1v1h-1zM246 261h1v1h-1zM245 262h1v1h-1zM244 263h1v1h-1zM243 264h1v1h-1zM242 265h1v1h-1zM241 266h1v1h-1zM240 267h1v1h-1zM240 268h1v1h-1zM239 269h1v1h-1zM238 270h1v1h-1zM237 271h1v1h-1zM236 272h1v1h-1zM235 273h1v1h-1zM234 274h1v1h-1zM233 275h1v1h-1zM232 276h1v1h-1zM231 277h1v1h-1zM230 278h1v1h-1zM229 279h1v1h-1zM229 280h1v1h-1zM228 281h1v1h-1zM227 282h1v1h-1zM226 283h1v1h-1zM225 284h1v1h-1zM224 285h1v1h-1zM223 286h1v1h-1zM222 287h1v1h-1zM221 288h1v1h-1zM220 289h1v1h-1zM219 290h1v1h-1zM218 291h1v1h-1zM218 292h1v1h-1zM217 293h1v1h-1zM216 294h1v1h-1zM215 295h1v1h-1zM214 296h1v1h-1zM213 297h1v1h-1zM212 298h1v1h-1zM211 299h1v1h-1zM210 300h1v1h-1zM209 301h1v1h-1zM208 302h1v1h-1zM208 303h1v1h-1zM207 304h1v1h-1zM206 305h1v1h-1zM205 306h1v1h-1zM204 307h1v1h-1zM203 308h1v1h-1zM202 309h1v1h-1zM201 310h1v1h-1zM200 311h1v1h-1zM199 312h1v1h-1zM198 313h1v1h-1zM197 314h1v1h-1zM197 315h1v1h-1zM196 316h1v1h-1zM195 317h1v1h-1zM194 318h1v1h-1zM193 319h1v1h-1zM192 320h1v1h-1zM191 321h1v1h-1zM190 322h1v1h-1zM189 323h1v1h-1zM188 324h1v1h-1zM187 325h1v1h-1zM186 326h1v1h-1zM186 327h1v1h-1zM185 328h1v1h-1zM184 329h1v1h-1zM183 330h1v1h-1zM182 331h1v1h-1zM181 332h1v1h-1zM180 333h1v1h-1zM179 334h1v1h-1zM178 335h1v1h-1zM177 336h1v1h-1zM176 337h1v1h-1zM176 338h1v1h-1zM175 339h1v1h-1zM174 340h1v1h-1zM173 341h1v1h-1zM172 342h1v1h-1zM171 343h1v1h-1zM170 344h1v1h-1zM169 345h1v1h-1zM168 346h1v1h-1zM167 347h1v1h-1zM166 348h1v1h-1zM165 349h1v1h-1zM165 350h1v1h-1zM164 351h1v1h-1zM163 352h1v1h-1zM162 353h1v1h-1zM161 354h1v1h-1zM160 355h1v1h-1zM159 356h1v1h-1zM158 357h1v1h-1zM157 358h1v1h-1zM156 359h1v1h-1zM155 360h1v1h-1zM154 361h1v1h-1zM154 362h1v1h-1zM153 363h1v1h-1zM152 364h1v1h-1zM151 365h1v1h-1zM150 366h1v1h-1zM149 367h1v1h-1zM148 368h1v1h-1zM147 369h1v1h-1zM146 370h1v1h-1zM145 371h1v1h-1zM144 372h1v1h-1zM144 373h1v1h-1zM143 374h1v1h-1zM142 375h1v1h-1zM141 376h1v1h-1zM140 377h1v1h-1zM139 378h1v1h-1zM138 379h1v1h-1zM137 380h1v1h-1zM136 381h1v1h-1zM135 382h1v1h-1zM134 383h1v1h-1zM133 384h1v1h-1zM133 385h1v1h-1zM132 386h1v1h-1zM131 387h1v1h-1zM130 388h1v1h-1zM129 389h1v1h-1zM128 390h1v1h-1zM127 391h1v1h-1zM126 392h1v1h-1z" fill="#787000" shape-rendering="crispEdges"/><path d="M386 133h1v1h-1zM385 134h1v1h-1zM384 135h1v1h-1zM383 136h1v1h-1zM382 137h1v1h-1zM381 138h1v1h-1zM380 139h1v1h-1zM379 140h1v1h-1zM377 141h2v1h-2zM376 142h1v1h-1zM375 143h1v1h-1zM374 144h1v1h-1zM373 145h1v1h-1zM372 146h1v1h-1zM371 147h1v1h-1zM370 148h1v1h-1zM369 149h1v1h-1zM368 150h1v1h-1zM366 151h2v1h-2zM365 152h1v1h-1zM364 153h1v1h-1zM363 154h1v1h-1zM362 155h1v1h-1zM361 156h1v1h-1zM360 157h1v1h-1zM359 158h1v1h-1zM358 159h1v1h-1zM357 160h1v1h-1zM355 161h2v1h-2zM354 162h1v1h-1zM353 163h1v1h-1zM352 164h1v1h-1zM351 165h1v1h-1zM350 166h1v1h-1zM349 167h1v1h-1zM348 168h1v1h-1zM347 169h1v1h-1zM346 170h1v1h-1zM344 171h2v1h-2zM343 172h1v1h-1zM342 173h1v1h-1zM341 174h1v1h-1zM340 175h1v1h-1zM339 176h1v1h-1zM338 177h1v1h-1zM337 178h1v1h-1zM336 179h1v1h-1zM335 180h1v1h-1zM333 181h2v1h-2zM332 182h1v1h-1zM331 183h1v1h-1zM330 184h1v1h-1zM329 185h1v1h-1zM328 186h1v1h-1zM327 187h1v1h-1zM326 188h1v1h-1zM325 189h1v1h-1zM324 190h1v1h-1zM322 191h2v1h-2zM321 192h1v1h-1zM320 193h1v1h-1zM319 194h1v1h-1zM318 195h1v1h-1zM317 196h1v1h-1zM316 197h1v1h-1zM315 198h1v1h-1zM314 199h1v1h-1zM313 200h1v1h-1zM311 201h2v1h-2zM310 202h1v1h-1zM309 203h1v1h-1zM308 204h1v1h-1zM307 205h1v1h-1zM306 206h1v1h-1zM305 207h1v1h-1zM304 208h1v1h-1zM303 209h1v1h-1zM302 210h1v1h-1zM300 211h2v1h-2zM299 212h1v1h-1zM298 213h1v1h-1zM297 214h1v1h-1zM296 215h1v1h-1zM295 216h1v1h-1zM294 217h1v1h-1zM293 218h1v1h-1zM292 219h1v1h-1zM291 220h1v1h-1zM289 221h2v1h-2zM288 222h1v1h-1zM287 223h1v1h-1zM286 224h1v1h-1zM285 225h1v1h-1zM284 226h1v1h-1zM283 227h1v1h-1zM282 228h1v1h-1zM281 229h1v1h-1zM280 230h1v1h-1zM278 231h2v1h-2zM277 232h1v1h-1zM276 233h1v1h-1zM275 234h1v1h-1zM274 235h1v1h-1zM273 236h1v1h-1zM272 237h1v1h-1zM271 238h1v1h-1zM270 239h1v1h-1zM269 240h1v1h-1zM267 241h2v1h-2zM266 242h1v1h-1zM265 243h1v1h-1zM264 244h1v1h-1zM263 245h1v1h-1zM262 246h1v1h-1zM261 247h1v1h-1zM260 248h1v1h-1zM259 249h1v1h-1zM258 250h1v1h-1zM256 251h2v1h-2zM255 252h1v1h-1zM254 253h1v1h-1zM253 254h1v1h-1zM252 255h1v1h-1zM251 256h1v1h-1zM250 257h1v1h-1zM249 258h1v1h-1zM248 259h1v1h-1zM247 260h1v1h-1zM246 261h1v1h-1zM244 262h2v1h-2zM243 263h1v1h-1zM242 264h1v1h-1zM241 265h1v1h-1zM240 266h1v1h-1zM239 267h1v1h-1zM238 268h1v1h-1zM237 269h1v1h-1zM236 270h1v1h-1zM235 271h1v1h-1zM233 272h2v1h-2zM232 273h1v1h-1zM231 274h1v1h-1zM230 275h1v1h-1zM229 276h1v1h-1zM228 277h1v1h-1zM227 278h1v1h-1zM226 279h1v1h-1zM225 280h1v1h-1zM224 281h1v1h-1zM222 282h2v1h-2zM221 283h1v1h-1zM220 284h1v1h-1zM219 285h1v1h-1zM218 286h1v1h-1zM217 287h1v1h-1zM216 288h1v1h-1zM215 289h1v1h-1zM214 290h1v1h-1zM213 291h1v1h-1zM211 292h2v1h-2zM210 293h1v1h-1zM209 294h1v1h-1zM208 295h1v1h-1zM207 296h1v1h-1zM206 297h1v1h-1zM205 298h1v1h-1zM204 299h1v1h-1zM203 300h1v1h-1zM202 301h1v1h-1zM200 302h2v1h-2zM199 303h1v1h-1zM198 304h1v1h-1zM197 305h1v1h-1zM196 306h1v1h-1zM195 307h1v1h-1zM194 308h1v1h-1zM193 309h1v1h-1zM192 310h1v1h-1zM191 311h1v1h-1zM189 312h2v1h-2zM188 313h1v1h-1zM187 314h1v1h-1zM186 315h1v1h-1zM185 316h1v1h-1zM184 317h1v1h-1zM183 318h1v1h-1zM182 319h1v1h-1zM181 320h1v1h-1zM180 321h1v1h-1zM178 322h2v1h-2zM177 323h1v1h-1zM176 324h1v1h-1zM175 325h1v1h-1zM174 326h1v1h-1zM173 327h1v1h-1zM172 328h1v1h-1zM171 329h1v1h-1zM170 330h1v1h-1zM169 331h1v1h-1zM167 332h2v1h-2zM166 333h1v1h-1zM165 334h1v1h-1zM164 335h1v1h-1zM163 336h1v1h-1zM162 337h1v1h-1zM161 338h1v1h-1zM160 339h1v1h-1zM159 340h1v1h-1zM158 341h1v1h-1zM156 342h2v1h-2zM155 343h1v1h-1zM154 344h1v1h-1zM153 345h1v1h-1zM152 346h1v1h-1zM151 347h1v1h-1zM150 348h1v1h-1zM149 349h1v1h-1zM148 350h1v1h-1zM147 351h1v1h-1zM145 352h2v1h-2zM144 353h1v1h-1zM143 354h1v1h-1zM142 355h1v1h-1zM141 356h1v1h-1zM140 357h1v1h-1zM139 358h1v1h-1zM138 359h1v1h-1zM137 360h1v1h-1zM136 361h1v1h-1zM134 362h2v1h-2zM133 363h1v1h-1zM132 364h1v1h-1zM131 365h1v1h-1zM130 366h1v1h-1zM129 367h1v1h-1zM128 368h1v1h-1zM127 369h1v1h-1zM126 370h1v1h-1zM125 371h1v1h-1zM123 372h2v1h-2zM122 373h1v1h-1zM121 374h1v1h-1zM120 375h1v1h-1zM119 376h1v1h-1zM118 377h1v1h-1zM117 378h1v1h-1zM116 379h1v1h-1zM115 380h1v1h-1zM114 381h1v1h-1zM112 382h2v1h-2zM111 383h1v1h-1zM110 384h1v1h-1zM109 385h1v1h-1zM108 386h1v1h-1zM107 387h1v1h-1zM106 388h1v1h-1zM105 389h1v1h-1zM104 390h1v1h-1zM103 391h1v1h-1zM101 392h2v1h-2z" fill="#1e4640" shape-rendering="crispEdges"/><path d="M267 232h1v1h-1zM268 233h1v1h-1zM269 234h1v1h-1zM270 235h1v1h-1zM271 236h1v1h-1zM272 237h1v1h-1z" fill="#787000" shape-rendering="crispEdges"/><circle cx="454.20" cy="163.90" r="17.00" fill="url(#sd)"/><circle cx="451.05" cy="166.97" r="16.05" fill="#4e7182"/><text x="453.0" y="193.0" text-anchor="middle" font-family="Liberation Sans,sans-serif" font-size="10.100" fill="#fff">09:26</text><circle cx="384.12" cy="196.95" r="17.00" fill="url(#sd)"/><circle cx="381.87" cy="198.85" r="16.05" fill="#4e7182"/><text x="381.5" y="225.2" text-anchor="middle" font-family="Liberation Sans,sans-serif" font-size="10.100" fill="#fff">09:31</text><circle cx="314.04" cy="230.00" r="17.00" fill="url(#sd)"/><circle cx="312.69" cy="230.72" r="16.05" fill="#4e7182"/><text x="312.2" y="258.0" text-anchor="middle" font-family="Liberation Sans,sans-serif" font-size="10.100" fill="#fff">09:36</text><circle cx="243.96" cy="263.10" r="17.00" fill="url(#sd)"/><circle cx="243.51" cy="262.65" r="16.05" fill="#4e7182"/><text x="241.2" y="291.3" text-anchor="middle" font-family="Liberation Sans,sans-serif" font-size="10.100" fill="#fff">09:41</text><circle cx="173.88" cy="296.40" r="17.00" fill="url(#sd)"/><circle cx="174.33" cy="294.77" r="16.05" fill="#4e7182"/><text x="172.2" y="325.0" text-anchor="middle" font-family="Liberation Sans,sans-serif" font-size="10.100" fill="#fff">09:46</text><circle cx="103.80" cy="330.00" r="17.00" fill="url(#sd)"/><circle cx="105.15" cy="327.20" r="16.05" fill="#4e7182"/><text x="101.7" y="358.7" text-anchor="middle" font-family="Liberation Sans,sans-serif" font-size="10.100" fill="#fff">09:51</text><circle cx="33.72" cy="363.20" r="17.00" fill="url(#sd)"/><circle cx="35.97" cy="359.22" r="16.05" fill="#4e7182"/><text x="33.2" y="391.7" text-anchor="middle" font-family="Liberation Sans,sans-serif" font-size="10.100" fill="#fff">09:56</text></svg>
<div style="position:absolute;left:478px;top:133px;width:17px;height:277px;background:#f0f0f0;"></div>
<div style="position:absolute;left:13px;top:393px;width:482px;height:17px;background:#f0f0f0;"></div>
<div style="position:absolute;left:479px;top:212px;width:15px;height:17px;background:#cdcdcd;"></div>
<div style="position:absolute;left:414px;top:394px;width:17px;height:15px;background:#cdcdcd;"></div>
<div style="position:absolute;left:479px;top:134px;width:15px;height:17px;background:#dadada;"></div>
<svg style="position:absolute;left:481.5px;top:139px" width="10" height="8" viewBox="0 0 10 8"><path d="M1.500 5.700l3.500-3.500l3.500 3.500" stroke="#000" stroke-width="1.900" fill="none"/></svg>
<svg style="position:absolute;left:481.5px;top:380.5px" width="10" height="8" viewBox="0 0 10 8"><path d="M1.500 2.300l3.500 3.500l3.500-3.500" stroke="#505050" stroke-width="1.900" fill="none"/></svg>
<svg style="position:absolute;left:17.5px;top:396.5px" width="8" height="10" viewBox="0 0 8 10"><path d="M5.700 1.500l-3.500 3.500l3.500 3.500" stroke="#505050" stroke-width="1.900" fill="none"/></svg>
<svg style="position:absolute;left:465px;top:396.5px" width="8" height="10" viewBox="0 0 8 10"><path d="M2.300 1.500l3.500 3.500l-3.500 3.500" stroke="#505050" stroke-width="1.900" fill="none"/></svg>
<div style="position:absolute;left:490px;top:400px;width:2px;height:2px;background:#b8b8b8;"></div>
<div style="position:absolute;left:487px;top:403px;width:2px;height:2px;background:#b8b8b8;"></div>
<div style="position:absolute;left:490px;top:403px;width:2px;height:2px;background:#b8b8b8;"></div>
<div style="position:absolute;left:484px;top:406px;width:2px;height:2px;background:#b8b8b8;"></div>
<div style="position:absolute;left:487px;top:406px;width:2px;height:2px;background:#b8b8b8;"></div>
<div style="position:absolute;left:490px;top:406px;width:2px;height:2px;background:#b8b8b8;"></div>
<div style="position:absolute;left:16px;top:137px;width:138px;height:20px;background:#fff;border:1px solid #000;box-sizing:border-box;"></div>
<span class="m" style="left:19px;top:141px;color:#000">09:41:42 UT 食分:0.974</span>
<svg style="position:absolute;left:515px;top:133px;background:#4d7081" width="465" height="260" viewBox="515 133 465 260"><defs><radialGradient id="lg" gradientUnits="userSpaceOnUse" cx="756.4" cy="494.4" r="245.2"><stop offset=".984" stop-color="#f0e4be"/><stop offset=".992" stop-color="#e8d6a8"/><stop offset=".997" stop-color="#d6c08e"/><stop offset="1" stop-color="#b89e6e"/></radialGradient></defs><path d="M529.1 402.5L529.9 400.6L530.7 398.6L531.5 396.6L532.4 394.7L533.3 392.7L534.2 390.8L535.1 388.8L536.0 386.9L537.0 385.0L537.9 383.1L538.9 381.2L539.9 379.3L540.9 377.4L541.9 375.5L543.0 373.7L544.1 371.8L545.1 370.0L546.2 368.1L547.3 366.3L548.5 364.5L549.6 362.7L550.8 360.9L551.9 359.1L553.1 357.3L554.3 355.5L555.5 353.8L556.8 352.0L558.0 350.3L559.3 348.5L560.6 346.8L561.9 345.1L563.2 343.4L564.5 341.8L565.8 340.1L567.2 338.4L568.6 336.8L569.9 335.2L571.3 333.5L572.8 331.9L574.2 330.3L575.6 328.7L577.1 327.2L578.5 325.6L580.0 324.1L581.5 322.5L583.0 321.0L584.5 319.5L586.1 318.0L587.6 316.5L589.2 315.1L590.7 313.6L592.3 312.2L593.9 310.8L595.5 309.3L597.2 307.9L598.8 306.6L600.4 305.2L602.1 303.8L603.8 302.5L605.4 301.2L607.1 299.9L608.8 298.6L610.5 297.3L612.3 296.0L614.0 294.8L615.8 293.5L617.5 292.3L619.3 291.1L621.1 289.9L622.9 288.8L624.7 287.6L626.5 286.5L628.3 285.3L630.1 284.2L632.0 283.1L633.8 282.1L635.7 281.0L637.5 279.9L639.4 278.9L641.3 277.9L643.2 276.9L645.1 275.9L645.1 275.9L643.4 277.3L641.6 278.4L639.8 279.6L638.0 280.7L636.2 281.9L634.4 283.1L632.6 284.2L630.8 285.3L629.0 286.5L627.2 287.6L625.4 288.8L623.7 290.0L621.9 291.2L620.2 292.4L618.5 293.7L616.7 294.9L615.0 296.2L613.3 297.5L611.6 298.8L610.0 300.1L608.3 301.4L606.6 302.7L605.0 304.1L603.4 305.4L601.7 306.8L600.1 308.2L598.5 309.6L596.9 311.0L595.4 312.4L593.8 313.8L592.3 315.3L590.7 316.7L589.2 318.2L587.7 319.7L586.2 321.2L584.7 322.7L583.2 324.2L581.8 325.8L580.3 327.3L578.9 328.9L577.5 330.5L576.1 332.1L574.7 333.7L573.3 335.3L572.0 336.9L570.6 338.5L569.3 340.2L568.0 341.8L566.6 343.5L565.3 345.1L564.1 346.8L562.8 348.5L561.5 350.2L560.3 351.9L559.1 353.6L557.8 355.4L556.7 357.1L555.5 358.9L554.3 360.6L553.2 362.4L552.0 364.2L550.9 366.0L549.8 367.8L548.7 369.6L547.6 371.4L546.6 373.3L545.5 375.1L544.5 377.0L543.5 378.8L542.5 380.7L541.5 382.6L540.6 384.4L539.6 386.3L538.7 388.2L537.8 390.1L536.9 392.1L536.0 394.0L535.2 395.9L534.3 397.8L533.5 399.8L532.7 401.7L531.9 403.7zM782.0 250.5L784.2 250.8L786.3 251.0L788.4 251.3L790.5 251.6L792.6 251.9L794.8 252.2L796.9 252.6L799.0 252.9L801.1 253.3L803.2 253.7L805.3 254.1L807.4 254.6L809.5 255.0L811.6 255.5L813.6 256.0L815.7 256.5L817.8 257.0L819.9 257.6L821.9 258.1L824.0 258.7L826.0 259.3L828.1 259.9L830.1 260.5L832.2 261.2L834.2 261.9L836.2 262.6L838.2 263.3L840.3 264.0L842.3 264.7L844.3 265.5L846.3 266.3L848.3 267.1L850.2 267.9L852.2 268.7L854.2 269.5L856.1 270.4L858.1 271.3L860.0 272.2L862.0 273.1L863.9 274.0L865.8 275.0L867.7 275.9L869.6 276.9L871.5 277.9L873.4 278.9L875.3 279.9L877.1 281.0L879.0 282.1L880.8 283.1L882.7 284.2L884.5 285.3L886.3 286.5L888.1 287.6L889.9 288.8L891.7 289.9L893.5 291.1L895.3 292.3L897.0 293.5L898.8 294.8L900.5 296.0L902.3 297.3L904.0 298.6L905.7 299.9L907.4 301.2L909.0 302.5L910.7 303.8L912.4 305.2L914.0 306.6L915.6 307.9L917.3 309.3L918.9 310.8L920.5 312.2L922.1 313.6L923.6 315.1L925.2 316.5L926.7 318.0L928.3 319.5L929.8 321.0L931.3 322.5L932.8 324.1L934.3 325.6L935.7 327.2L937.2 328.7L938.6 330.3L940.0 331.9L941.5 333.5L942.9 335.2L944.2 336.8L945.6 338.4L947.0 340.1L948.3 341.8L949.6 343.4L950.9 345.1L952.2 346.8L953.5 348.5L954.8 350.3L956.0 352.0L957.3 353.8L958.5 355.5L959.7 357.3L960.9 359.1L962.0 360.9L963.2 362.7L964.3 364.5L965.5 366.3L966.6 368.1L967.7 370.0L968.7 371.8L969.8 373.7L970.9 375.5L971.9 377.4L972.9 379.3L973.9 381.2L974.9 383.1L975.8 385.0L976.8 386.9L977.7 388.8L978.6 390.8L979.5 392.7L980.4 394.7L981.3 396.6L982.1 398.6L982.9 400.6L983.7 402.5L980.1 404.0L979.3 402.1L978.5 400.1L977.7 398.2L976.9 396.2L976.0 394.3L975.2 392.4L974.3 390.5L973.4 388.6L972.5 386.7L971.5 384.8L970.6 382.9L969.6 381.0L968.6 379.2L967.6 377.3L966.6 375.5L965.6 373.6L964.6 371.8L963.5 370.0L962.4 368.2L961.3 366.4L960.2 364.6L959.1 362.8L957.9 361.0L956.8 359.2L955.6 357.5L954.4 355.7L953.2 354.0L952.0 352.3L950.8 350.6L949.5 348.9L948.2 347.2L947.0 345.5L945.7 343.8L944.4 342.2L943.0 340.5L941.7 338.9L940.4 337.3L939.0 335.7L937.6 334.1L936.2 332.5L934.8 330.9L933.4 329.3L932.0 327.8L930.5 326.2L929.1 324.7L927.6 323.2L926.1 321.7L924.6 320.2L923.1 318.7L921.6 317.3L920.0 315.8L918.5 314.4L916.9 313.0L915.3 311.6L913.8 310.2L912.2 308.8L910.5 307.4L908.9 306.0L907.3 304.7L905.6 303.4L904.0 302.1L902.3 300.8L900.6 299.5L898.9 298.2L897.2 296.9L895.5 295.7L893.8 294.5L892.1 293.2L890.3 292.0L888.6 290.8L886.8 289.7L885.1 288.5L883.3 287.4L881.5 286.2L879.7 285.1L877.9 284.0L876.0 282.9L874.2 281.9L872.4 280.8L870.5 279.8L868.6 278.8L866.8 277.8L864.9 276.8L863.0 275.8L861.1 274.9L859.2 274.0L857.3 273.0L855.4 272.1L853.4 271.3L851.5 270.4L849.5 269.5L847.6 268.7L845.6 267.9L843.6 267.1L841.7 266.3L839.7 265.6L837.7 264.8L835.7 264.1L833.7 263.4L831.7 262.7L829.7 262.0L827.6 261.4L825.6 260.7L823.6 260.1L821.5 259.5L819.5 258.9L817.4 258.3L815.4 257.8L813.3 257.3L811.3 256.7L809.2 256.3L807.1 255.8L805.0 255.3L803.0 254.9L800.9 254.4L798.8 254.0L796.7 253.6L794.6 253.3L792.5 252.9L790.4 252.6L788.3 252.3L786.2 252.0L784.1 251.7L781.9 251.4zM682.7 260.5L685.0 259.8L687.3 259.1L689.6 258.5L692.0 257.8L694.3 257.2L696.7 256.6L697.0 257.8L694.6 258.4L692.3 259.1L690.0 259.7L687.7 260.4L685.4 261.1L683.1 261.8zM705.4 254.6L707.5 254.1L709.6 253.7L711.7 253.3L711.9 254.5L709.8 254.9L707.8 255.3L705.7 255.7zM716.8 252.4L718.9 252.1L721.0 251.8L723.1 251.5L725.2 251.2L727.4 250.9L729.5 250.7L731.6 250.5L731.7 251.5L729.6 251.8L727.5 252.0L725.4 252.3L723.3 252.6L721.2 252.9L719.1 253.2L717.0 253.5zM768.8 249.5L771.1 249.6L773.4 249.8L775.7 250.0L778.0 250.2L780.3 250.4L780.2 251.4L777.9 251.2L775.6 251.0L773.3 250.8L771.1 250.6L768.8 250.5z" fill="url(#lg)"/><path d="M736.7 250.0L739.3 249.8L741.9 249.6L744.4 249.5L744.4 250.0L741.9 250.1L739.3 250.3L736.8 250.5zM660.6 268.7L662.2 268.0L662.5 268.8L660.9 269.4zM666.5 266.3L668.1 265.6L668.4 266.4L666.8 267.0zM650.1 273.5L651.6 272.7L651.9 273.3L650.3 274.0z" fill="#d9cca6" opacity=".55"/><path d="M762 171h1v1h-1zM765 171h1v1h-1zM762 172h1v1h-1zM764 172h1v1h-1zM766 172h3v1h-3zM753 173h2v1h-2zM761 173h3v1h-3zM766 173h3v1h-3zM753 174h2v1h-2zM761 174h3v1h-3zM768 174h1v1h-1zM753 175h2v1h-2zM761 175h1v1h-1zM768 175h1v1h-1zM753 176h1v1h-1zM755 176h1v1h-1zM761 176h1v1h-1zM768 176h1v1h-1zM753 177h1v1h-1zM755 177h1v1h-1zM759 177h2v1h-2zM768 177h1v1h-1zM752 178h1v1h-1zM755 178h1v1h-1zM758 178h1v1h-1zM768 178h1v1h-1zM752 179h1v1h-1zM756 179h2v1h-2zM768 179h1v1h-1zM749 180h1v1h-1zM752 180h1v1h-1zM768 180h1v1h-1zM749 181h1v1h-1zM752 181h1v1h-1zM768 181h1v1h-1zM749 182h2v1h-2zM752 182h1v1h-1zM768 182h1v1h-1zM746 183h1v1h-1zM749 183h2v1h-2zM752 183h1v1h-1zM768 183h1v1h-1zM746 184h3v1h-3zM750 184h3v1h-3zM768 184h1v1h-1zM746 185h3v1h-3zM750 185h2v1h-2zM768 185h1v1h-1zM746 186h3v1h-3zM750 186h2v1h-2zM768 186h1v1h-1zM746 187h3v1h-3zM751 187h1v1h-1zM768 187h1v1h-1zM746 188h1v1h-1zM748 188h1v1h-1zM751 188h1v1h-1zM769 188h1v1h-1zM746 189h1v1h-1zM769 189h1v1h-1zM746 190h1v1h-1zM769 190h1v1h-1zM746 191h1v1h-1zM769 191h1v1h-1zM746 192h1v1h-1zM769 192h1v1h-1zM746 193h1v1h-1zM768 193h1v1h-1zM652 194h1v1h-1zM746 194h1v1h-1zM769 194h1v1h-1zM652 195h1v1h-1zM745 195h1v1h-1zM769 195h1v1h-1zM652 196h2v1h-2zM745 196h1v1h-1zM769 196h1v1h-1zM653 197h5v1h-5zM745 197h1v1h-1zM769 197h1v1h-1zM653 198h1v1h-1zM657 198h1v1h-1zM745 198h1v1h-1zM769 198h1v1h-1zM653 199h1v1h-1zM657 199h1v1h-1zM745 199h1v1h-1zM769 199h1v1h-1zM781 199h1v1h-1zM653 200h1v1h-1zM658 200h1v1h-1zM745 200h1v1h-1zM768 200h1v1h-1zM781 200h1v1h-1zM785 200h1v1h-1zM653 201h1v1h-1zM658 201h1v1h-1zM745 201h1v1h-1zM769 201h1v1h-1zM780 201h2v1h-2zM785 201h2v1h-2zM654 202h1v1h-1zM659 202h1v1h-1zM745 202h1v1h-1zM769 202h1v1h-1zM780 202h2v1h-2zM784 202h1v1h-1zM786 202h1v1h-1zM654 203h1v1h-1zM659 203h4v1h-4zM745 203h1v1h-1zM769 203h1v1h-1zM780 203h2v1h-2zM784 203h1v1h-1zM786 203h1v1h-1zM790 203h1v1h-1zM654 204h1v1h-1zM662 204h1v1h-1zM745 204h1v1h-1zM769 204h1v1h-1zM780 204h2v1h-2zM784 204h1v1h-1zM786 204h1v1h-1zM789 204h2v1h-2zM655 205h1v1h-1zM663 205h1v1h-1zM745 205h1v1h-1zM769 205h1v1h-1zM779 205h1v1h-1zM781 205h1v1h-1zM784 205h1v1h-1zM786 205h1v1h-1zM789 205h2v1h-2zM655 206h1v1h-1zM663 206h1v1h-1zM745 206h1v1h-1zM769 206h1v1h-1zM779 206h1v1h-1zM782 206h2v1h-2zM786 206h1v1h-1zM789 206h2v1h-2zM641 207h1v1h-1zM655 207h1v1h-1zM663 207h1v1h-1zM745 207h1v1h-1zM769 207h1v1h-1zM779 207h1v1h-1zM782 207h2v1h-2zM786 207h1v1h-1zM789 207h1v1h-1zM791 207h1v1h-1zM630 208h2v1h-2zM640 208h2v1h-2zM656 208h1v1h-1zM664 208h1v1h-1zM745 208h1v1h-1zM769 208h1v1h-1zM779 208h1v1h-1zM782 208h2v1h-2zM786 208h1v1h-1zM788 208h1v1h-1zM791 208h1v1h-1zM623 209h1v1h-1zM629 209h3v1h-3zM640 209h2v1h-2zM656 209h1v1h-1zM664 209h1v1h-1zM745 209h1v1h-1zM769 209h1v1h-1zM779 209h1v1h-1zM782 209h2v1h-2zM786 209h1v1h-1zM788 209h1v1h-1zM791 209h1v1h-1zM793 209h1v1h-1zM613 210h1v1h-1zM616 210h1v1h-1zM623 210h2v1h-2zM629 210h1v1h-1zM632 210h1v1h-1zM640 210h2v1h-2zM656 210h1v1h-1zM665 210h1v1h-1zM745 210h2v1h-2zM769 210h1v1h-1zM779 210h1v1h-1zM782 210h2v1h-2zM786 210h1v1h-1zM788 210h1v1h-1zM792 210h2v1h-2zM613 211h3v1h-3zM617 211h1v1h-1zM623 211h1v1h-1zM625 211h1v1h-1zM629 211h1v1h-1zM633 211h1v1h-1zM637 211h1v1h-1zM640 211h2v1h-2zM656 211h1v1h-1zM665 211h1v1h-1zM693 211h1v1h-1zM745 211h1v1h-1zM769 211h1v1h-1zM778 211h1v1h-1zM782 211h2v1h-2zM786 211h1v1h-1zM788 211h1v1h-1zM793 211h1v1h-1zM614 212h1v1h-1zM617 212h1v1h-1zM624 212h1v1h-1zM626 212h1v1h-1zM629 212h1v1h-1zM634 212h1v1h-1zM638 212h3v1h-3zM642 212h2v1h-2zM657 212h1v1h-1zM665 212h1v1h-1zM692 212h2v1h-2zM745 212h1v1h-1zM769 212h1v1h-1zM778 212h1v1h-1zM783 212h1v1h-1zM786 212h1v1h-1zM788 212h1v1h-1zM793 212h1v1h-1zM608 213h2v1h-2zM614 213h1v1h-1zM618 213h1v1h-1zM624 213h1v1h-1zM627 213h2v1h-2zM635 213h1v1h-1zM638 213h2v1h-2zM642 213h3v1h-3zM657 213h1v1h-1zM666 213h1v1h-1zM692 213h2v1h-2zM745 213h1v1h-1zM770 213h1v1h-1zM778 213h1v1h-1zM787 213h1v1h-1zM793 213h1v1h-1zM609 214h2v1h-2zM614 214h1v1h-1zM619 214h1v1h-1zM624 214h1v1h-1zM628 214h1v1h-1zM635 214h1v1h-1zM639 214h1v1h-1zM642 214h3v1h-3zM656 214h2v1h-2zM666 214h1v1h-1zM692 214h1v1h-1zM694 214h1v1h-1zM731 214h1v1h-1zM745 214h1v1h-1zM770 214h1v1h-1zM778 214h1v1h-1zM787 214h1v1h-1zM793 214h1v1h-1zM609 215h2v1h-2zM614 215h1v1h-1zM619 215h1v1h-1zM624 215h1v1h-1zM636 215h1v1h-1zM639 215h1v1h-1zM642 215h1v1h-1zM644 215h2v1h-2zM656 215h2v1h-2zM667 215h1v1h-1zM692 215h1v1h-1zM695 215h1v1h-1zM730 215h2v1h-2zM735 215h2v1h-2zM745 215h1v1h-1zM770 215h1v1h-1zM778 215h1v1h-1zM793 215h1v1h-1zM821 215h1v1h-1zM609 216h1v1h-1zM611 216h1v1h-1zM614 216h1v1h-1zM620 216h1v1h-1zM624 216h1v1h-1zM636 216h1v1h-1zM640 216h1v1h-1zM642 216h1v1h-1zM644 216h2v1h-2zM656 216h2v1h-2zM667 216h1v1h-1zM692 216h1v1h-1zM695 216h1v1h-1zM730 216h2v1h-2zM734 216h1v1h-1zM736 216h1v1h-1zM745 216h1v1h-1zM770 216h1v1h-1zM778 216h1v1h-1zM793 216h1v1h-1zM821 216h1v1h-1zM610 217h1v1h-1zM612 217h1v1h-1zM615 217h1v1h-1zM620 217h1v1h-1zM625 217h1v1h-1zM637 217h1v1h-1zM640 217h1v1h-1zM643 217h2v1h-2zM646 217h1v1h-1zM654 217h1v1h-1zM656 217h1v1h-1zM667 217h1v1h-1zM692 217h1v1h-1zM695 217h1v1h-1zM729 217h1v1h-1zM732 217h1v1h-1zM734 217h1v1h-1zM736 217h1v1h-1zM744 217h1v1h-1zM770 217h1v1h-1zM778 217h1v1h-1zM793 217h1v1h-1zM821 217h1v1h-1zM610 218h1v1h-1zM612 218h1v1h-1zM615 218h1v1h-1zM621 218h1v1h-1zM625 218h1v1h-1zM637 218h1v1h-1zM640 218h1v1h-1zM643 218h2v1h-2zM647 218h1v1h-1zM653 218h1v1h-1zM655 218h2v1h-2zM668 218h1v1h-1zM692 218h2v1h-2zM695 218h1v1h-1zM729 218h1v1h-1zM732 218h1v1h-1zM734 218h1v1h-1zM736 218h1v1h-1zM744 218h1v1h-1zM770 218h1v1h-1zM778 218h1v1h-1zM793 218h1v1h-1zM820 218h2v1h-2zM611 219h1v1h-1zM613 219h1v1h-1zM615 219h1v1h-1zM622 219h1v1h-1zM625 219h1v1h-1zM638 219h1v1h-1zM641 219h1v1h-1zM643 219h2v1h-2zM647 219h1v1h-1zM653 219h1v1h-1zM655 219h1v1h-1zM668 219h1v1h-1zM692 219h1v1h-1zM695 219h1v1h-1zM729 219h1v1h-1zM732 219h1v1h-1zM734 219h1v1h-1zM737 219h1v1h-1zM743 219h1v1h-1zM770 219h1v1h-1zM778 219h1v1h-1zM793 219h1v1h-1zM820 219h2v1h-2zM611 220h1v1h-1zM614 220h2v1h-2zM622 220h1v1h-1zM625 220h1v1h-1zM638 220h1v1h-1zM641 220h1v1h-1zM643 220h2v1h-2zM648 220h1v1h-1zM653 220h1v1h-1zM655 220h1v1h-1zM669 220h1v1h-1zM692 220h1v1h-1zM696 220h1v1h-1zM729 220h1v1h-1zM732 220h3v1h-3zM737 220h1v1h-1zM742 220h1v1h-1zM770 220h1v1h-1zM777 220h1v1h-1zM793 220h1v1h-1zM820 220h2v1h-2zM611 221h1v1h-1zM614 221h2v1h-2zM623 221h1v1h-1zM625 221h1v1h-1zM639 221h1v1h-1zM641 221h1v1h-1zM644 221h1v1h-1zM648 221h1v1h-1zM651 221h3v1h-3zM655 221h1v1h-1zM669 221h1v1h-1zM692 221h1v1h-1zM696 221h1v1h-1zM729 221h1v1h-1zM733 221h1v1h-1zM737 221h1v1h-1zM740 221h1v1h-1zM742 221h1v1h-1zM770 221h1v1h-1zM774 221h2v1h-2zM777 221h1v1h-1zM793 221h1v1h-1zM819 221h1v1h-1zM821 221h1v1h-1zM612 222h1v1h-1zM624 222h2v1h-2zM639 222h1v1h-1zM641 222h1v1h-1zM644 222h1v1h-1zM649 222h1v1h-1zM652 222h1v1h-1zM669 222h1v1h-1zM692 222h1v1h-1zM696 222h1v1h-1zM729 222h1v1h-1zM733 222h1v1h-1zM737 222h1v1h-1zM740 222h2v1h-2zM770 222h1v1h-1zM774 222h2v1h-2zM777 222h1v1h-1zM793 222h1v1h-1zM819 222h1v1h-1zM821 222h1v1h-1zM612 223h1v1h-1zM625 223h2v1h-2zM640 223h1v1h-1zM642 223h1v1h-1zM649 223h1v1h-1zM652 223h1v1h-1zM670 223h1v1h-1zM691 223h1v1h-1zM697 223h1v1h-1zM729 223h1v1h-1zM733 223h1v1h-1zM737 223h1v1h-1zM740 223h1v1h-1zM770 223h1v1h-1zM774 223h2v1h-2zM777 223h1v1h-1zM793 223h1v1h-1zM818 223h1v1h-1zM821 223h1v1h-1zM612 224h2v1h-2zM626 224h1v1h-1zM640 224h1v1h-1zM642 224h1v1h-1zM650 224h1v1h-1zM652 224h1v1h-1zM670 224h1v1h-1zM691 224h1v1h-1zM697 224h1v1h-1zM729 224h1v1h-1zM738 224h2v1h-2zM770 224h1v1h-1zM774 224h2v1h-2zM777 224h1v1h-1zM793 224h1v1h-1zM818 224h1v1h-1zM820 224h1v1h-1zM613 225h1v1h-1zM640 225h1v1h-1zM642 225h1v1h-1zM650 225h1v1h-1zM652 225h1v1h-1zM671 225h1v1h-1zM692 225h1v1h-1zM697 225h1v1h-1zM729 225h1v1h-1zM738 225h2v1h-2zM770 225h1v1h-1zM773 225h1v1h-1zM775 225h2v1h-2zM793 225h1v1h-1zM817 225h1v1h-1zM820 225h1v1h-1zM613 226h1v1h-1zM641 226h2v1h-2zM651 226h2v1h-2zM671 226h1v1h-1zM692 226h1v1h-1zM698 226h1v1h-1zM708 226h3v1h-3zM729 226h1v1h-1zM738 226h2v1h-2zM770 226h1v1h-1zM773 226h1v1h-1zM775 226h2v1h-2zM793 226h1v1h-1zM816 226h1v1h-1zM820 226h1v1h-1zM613 227h2v1h-2zM642 227h1v1h-1zM652 227h2v1h-2zM672 227h1v1h-1zM692 227h1v1h-1zM698 227h1v1h-1zM708 227h1v1h-1zM710 227h1v1h-1zM728 227h2v1h-2zM738 227h1v1h-1zM770 227h1v1h-1zM773 227h1v1h-1zM793 227h1v1h-1zM816 227h1v1h-1zM820 227h1v1h-1zM614 228h2v1h-2zM652 228h2v1h-2zM672 228h1v1h-1zM692 228h1v1h-1zM698 228h1v1h-1zM708 228h1v1h-1zM711 228h1v1h-1zM726 228h1v1h-1zM728 228h1v1h-1zM738 228h1v1h-1zM770 228h1v1h-1zM772 228h2v1h-2zM793 228h1v1h-1zM815 228h1v1h-1zM820 228h1v1h-1zM613 229h1v1h-1zM653 229h1v1h-1zM673 229h1v1h-1zM693 229h1v1h-1zM699 229h1v1h-1zM708 229h1v1h-1zM711 229h1v1h-1zM725 229h3v1h-3zM770 229h4v1h-4zM793 229h1v1h-1zM815 229h1v1h-1zM820 229h1v1h-1zM613 230h1v1h-1zM653 230h2v1h-2zM673 230h1v1h-1zM693 230h1v1h-1zM699 230h1v1h-1zM708 230h1v1h-1zM711 230h1v1h-1zM725 230h3v1h-3zM770 230h1v1h-1zM773 230h1v1h-1zM793 230h1v1h-1zM815 230h1v1h-1zM820 230h1v1h-1zM613 231h1v1h-1zM654 231h1v1h-1zM673 231h1v1h-1zM693 231h1v1h-1zM700 231h1v1h-1zM708 231h1v1h-1zM712 231h1v1h-1zM725 231h3v1h-3zM773 231h1v1h-1zM792 231h1v1h-1zM814 231h1v1h-1zM820 231h1v1h-1zM613 232h1v1h-1zM674 232h1v1h-1zM693 232h1v1h-1zM700 232h1v1h-1zM707 232h1v1h-1zM712 232h1v1h-1zM725 232h1v1h-1zM727 232h1v1h-1zM792 232h1v1h-1zM814 232h1v1h-1zM819 232h1v1h-1zM878 232h1v1h-1zM614 233h1v1h-1zM674 233h1v1h-1zM693 233h1v1h-1zM700 233h1v1h-1zM707 233h1v1h-1zM712 233h1v1h-1zM725 233h1v1h-1zM727 233h1v1h-1zM792 233h1v1h-1zM809 233h1v1h-1zM814 233h1v1h-1zM819 233h1v1h-1zM874 233h1v1h-1zM877 233h2v1h-2zM614 234h1v1h-1zM675 234h1v1h-1zM693 234h1v1h-1zM701 234h1v1h-1zM707 234h1v1h-1zM713 234h1v1h-1zM716 234h1v1h-1zM725 234h1v1h-1zM727 234h1v1h-1zM792 234h1v1h-1zM809 234h2v1h-2zM813 234h1v1h-1zM819 234h1v1h-1zM874 234h4v1h-4zM879 234h1v1h-1zM614 235h1v1h-1zM675 235h1v1h-1zM693 235h1v1h-1zM701 235h1v1h-1zM707 235h1v1h-1zM713 235h1v1h-1zM716 235h1v1h-1zM723 235h2v1h-2zM792 235h1v1h-1zM809 235h2v1h-2zM813 235h1v1h-1zM819 235h1v1h-1zM873 235h1v1h-1zM879 235h1v1h-1zM614 236h1v1h-1zM675 236h1v1h-1zM694 236h1v1h-1zM702 236h1v1h-1zM707 236h1v1h-1zM713 236h1v1h-1zM716 236h2v1h-2zM722 236h1v1h-1zM792 236h1v1h-1zM809 236h2v1h-2zM813 236h1v1h-1zM819 236h1v1h-1zM872 236h1v1h-1zM879 236h1v1h-1zM615 237h1v1h-1zM676 237h1v1h-1zM694 237h1v1h-1zM702 237h1v1h-1zM707 237h1v1h-1zM714 237h1v1h-1zM716 237h2v1h-2zM722 237h1v1h-1zM792 237h1v1h-1zM808 237h1v1h-1zM811 237h1v1h-1zM813 237h1v1h-1zM820 237h1v1h-1zM830 237h2v1h-2zM871 237h1v1h-1zM879 237h1v1h-1zM615 238h1v1h-1zM617 238h1v1h-1zM677 238h1v1h-1zM692 238h3v1h-3zM702 238h1v1h-1zM707 238h1v1h-1zM714 238h1v1h-1zM716 238h3v1h-3zM720 238h1v1h-1zM722 238h1v1h-1zM792 238h1v1h-1zM808 238h1v1h-1zM811 238h1v1h-1zM813 238h1v1h-1zM819 238h1v1h-1zM828 238h2v1h-2zM831 238h1v1h-1zM870 238h1v1h-1zM879 238h1v1h-1zM616 239h1v1h-1zM618 239h1v1h-1zM678 239h1v1h-1zM693 239h1v1h-1zM702 239h1v1h-1zM707 239h1v1h-1zM714 239h1v1h-1zM716 239h2v1h-2zM720 239h2v1h-2zM792 239h1v1h-1zM807 239h1v1h-1zM811 239h1v1h-1zM813 239h1v1h-1zM819 239h1v1h-1zM828 239h1v1h-1zM831 239h1v1h-1zM859 239h1v1h-1zM870 239h1v1h-1zM878 239h1v1h-1zM618 240h1v1h-1zM678 240h1v1h-1zM693 240h1v1h-1zM703 240h1v1h-1zM707 240h1v1h-1zM715 240h3v1h-3zM720 240h1v1h-1zM792 240h1v1h-1zM807 240h1v1h-1zM811 240h2v1h-2zM819 240h1v1h-1zM827 240h1v1h-1zM831 240h1v1h-1zM858 240h2v1h-2zM869 240h1v1h-1zM878 240h1v1h-1zM615 241h4v1h-4zM679 241h1v1h-1zM693 241h1v1h-1zM703 241h1v1h-1zM707 241h1v1h-1zM715 241h3v1h-3zM720 241h1v1h-1zM792 241h1v1h-1zM807 241h1v1h-1zM811 241h2v1h-2zM819 241h1v1h-1zM827 241h1v1h-1zM830 241h1v1h-1zM857 241h1v1h-1zM859 241h1v1h-1zM869 241h1v1h-1zM878 241h1v1h-1zM615 242h1v1h-1zM679 242h1v1h-1zM693 242h1v1h-1zM703 242h1v1h-1zM707 242h1v1h-1zM716 242h2v1h-2zM720 242h1v1h-1zM792 242h1v1h-1zM806 242h1v1h-1zM811 242h1v1h-1zM818 242h1v1h-1zM826 242h1v1h-1zM830 242h1v1h-1zM857 242h1v1h-1zM859 242h1v1h-1zM868 242h1v1h-1zM878 242h1v1h-1zM615 243h1v1h-1zM680 243h2v1h-2zM693 243h1v1h-1zM703 243h1v1h-1zM707 243h1v1h-1zM717 243h1v1h-1zM719 243h1v1h-1zM792 243h1v1h-1zM806 243h1v1h-1zM818 243h1v1h-1zM826 243h1v1h-1zM830 243h1v1h-1zM857 243h1v1h-1zM859 243h1v1h-1zM867 243h1v1h-1zM877 243h1v1h-1zM615 244h1v1h-1zM682 244h1v1h-1zM694 244h1v1h-1zM704 244h1v1h-1zM707 244h1v1h-1zM717 244h1v1h-1zM719 244h1v1h-1zM792 244h1v1h-1zM806 244h1v1h-1zM818 244h1v1h-1zM826 244h1v1h-1zM830 244h1v1h-1zM856 244h1v1h-1zM859 244h1v1h-1zM866 244h1v1h-1zM877 244h1v1h-1zM614 245h1v1h-1zM682 245h1v1h-1zM694 245h1v1h-1zM704 245h1v1h-1zM708 245h1v1h-1zM717 245h1v1h-1zM719 245h1v1h-1zM792 245h1v1h-1zM806 245h1v1h-1zM818 245h1v1h-1zM826 245h1v1h-1zM830 245h1v1h-1zM856 245h1v1h-1zM858 245h1v1h-1zM866 245h1v1h-1zM877 245h1v1h-1zM615 246h1v1h-1zM683 246h1v1h-1zM694 246h1v1h-1zM704 246h1v1h-1zM708 246h1v1h-1zM717 246h2v1h-2zM792 246h1v1h-1zM806 246h1v1h-1zM819 246h1v1h-1zM825 246h1v1h-1zM830 246h1v1h-1zM854 246h3v1h-3zM858 246h1v1h-1zM865 246h1v1h-1zM877 246h1v1h-1zM615 247h1v1h-1zM684 247h1v1h-1zM694 247h1v1h-1zM705 247h1v1h-1zM708 247h1v1h-1zM718 247h1v1h-1zM792 247h1v1h-1zM806 247h1v1h-1zM819 247h1v1h-1zM825 247h1v1h-1zM830 247h1v1h-1zM853 247h1v1h-1zM858 247h1v1h-1zM865 247h1v1h-1zM877 247h1v1h-1zM616 248h1v1h-1zM685 248h1v1h-1zM694 248h1v1h-1zM705 248h2v1h-2zM708 248h1v1h-1zM792 248h1v1h-1zM805 248h1v1h-1zM819 248h1v1h-1zM825 248h1v1h-1zM830 248h1v1h-1zM853 248h1v1h-1zM858 248h1v1h-1zM864 248h1v1h-1zM877 248h1v1h-1zM616 249h1v1h-1zM685 249h1v1h-1zM688 249h1v1h-1zM694 249h1v1h-1zM705 249h1v1h-1zM707 249h2v1h-2zM792 249h1v1h-1zM805 249h1v1h-1zM819 249h1v1h-1zM825 249h1v1h-1zM830 249h1v1h-1zM842 249h2v1h-2zM852 249h1v1h-1zM858 249h1v1h-1zM864 249h1v1h-1zM876 249h1v1h-1zM616 250h1v1h-1zM686 250h1v1h-1zM688 250h2v1h-2zM694 250h1v1h-1zM707 250h2v1h-2zM792 250h1v1h-1zM805 250h1v1h-1zM819 250h1v1h-1zM824 250h1v1h-1zM829 250h1v1h-1zM842 250h2v1h-2zM852 250h1v1h-1zM857 250h1v1h-1zM863 250h1v1h-1zM876 250h1v1h-1zM884 250h1v1h-1zM617 251h1v1h-1zM686 251h2v1h-2zM689 251h1v1h-1zM695 251h1v1h-1zM707 251h2v1h-2zM792 251h1v1h-1zM804 251h1v1h-1zM819 251h1v1h-1zM824 251h1v1h-1zM829 251h1v1h-1zM838 251h1v1h-1zM842 251h2v1h-2zM851 251h1v1h-1zM857 251h1v1h-1zM863 251h1v1h-1zM876 251h1v1h-1zM884 251h2v1h-2zM617 252h1v1h-1zM687 252h1v1h-1zM690 252h1v1h-1zM695 252h1v1h-1zM707 252h2v1h-2zM792 252h1v1h-1zM801 252h1v1h-1zM804 252h1v1h-1zM819 252h1v1h-1zM823 252h1v1h-1zM829 252h1v1h-1zM837 252h1v1h-1zM839 252h1v1h-1zM841 252h1v1h-1zM844 252h1v1h-1zM846 252h1v1h-1zM851 252h1v1h-1zM857 252h1v1h-1zM863 252h1v1h-1zM876 252h1v1h-1zM883 252h1v1h-1zM886 252h1v1h-1zM616 253h1v1h-1zM690 253h1v1h-1zM695 253h1v1h-1zM707 253h2v1h-2zM792 253h1v1h-1zM796 253h1v1h-1zM800 253h2v1h-2zM804 253h1v1h-1zM819 253h1v1h-1zM823 253h1v1h-1zM829 253h1v1h-1zM837 253h1v1h-1zM839 253h1v1h-1zM841 253h1v1h-1zM844 253h3v1h-3zM850 253h1v1h-1zM857 253h1v1h-1zM862 253h1v1h-1zM875 253h1v1h-1zM883 253h1v1h-1zM887 253h1v1h-1zM585 254h1v1h-1zM590 254h1v1h-1zM615 254h2v1h-2zM691 254h1v1h-1zM695 254h1v1h-1zM793 254h1v1h-1zM795 254h2v1h-2zM800 254h1v1h-1zM802 254h1v1h-1zM804 254h1v1h-1zM819 254h1v1h-1zM823 254h1v1h-1zM829 254h1v1h-1zM836 254h1v1h-1zM840 254h2v1h-2zM844 254h2v1h-2zM850 254h1v1h-1zM857 254h1v1h-1zM862 254h1v1h-1zM875 254h1v1h-1zM882 254h1v1h-1zM887 254h1v1h-1zM585 255h1v1h-1zM591 255h1v1h-1zM617 255h1v1h-1zM691 255h1v1h-1zM695 255h1v1h-1zM793 255h2v1h-2zM796 255h1v1h-1zM799 255h1v1h-1zM803 255h1v1h-1zM818 255h1v1h-1zM823 255h1v1h-1zM829 255h1v1h-1zM836 255h1v1h-1zM840 255h2v1h-2zM845 255h1v1h-1zM850 255h1v1h-1zM856 255h1v1h-1zM862 255h1v1h-1zM875 255h1v1h-1zM881 255h1v1h-1zM887 255h1v1h-1zM586 256h1v1h-1zM592 256h1v1h-1zM618 256h1v1h-1zM691 256h1v1h-1zM695 256h1v1h-1zM793 256h1v1h-1zM797 256h1v1h-1zM799 256h1v1h-1zM803 256h1v1h-1zM818 256h1v1h-1zM823 256h1v1h-1zM828 256h1v1h-1zM835 256h1v1h-1zM841 256h1v1h-1zM845 256h1v1h-1zM849 256h1v1h-1zM856 256h1v1h-1zM861 256h1v1h-1zM875 256h1v1h-1zM881 256h1v1h-1zM886 256h1v1h-1zM586 257h1v1h-1zM592 257h2v1h-2zM619 257h2v1h-2zM692 257h1v1h-1zM695 257h1v1h-1zM797 257h1v1h-1zM799 257h1v1h-1zM818 257h1v1h-1zM823 257h1v1h-1zM828 257h1v1h-1zM835 257h1v1h-1zM845 257h1v1h-1zM849 257h1v1h-1zM856 257h1v1h-1zM861 257h1v1h-1zM874 257h1v1h-1zM880 257h1v1h-1zM886 257h1v1h-1zM587 258h1v1h-1zM593 258h1v1h-1zM620 258h1v1h-1zM692 258h1v1h-1zM696 258h1v1h-1zM798 258h2v1h-2zM817 258h1v1h-1zM822 258h1v1h-1zM828 258h1v1h-1zM835 258h1v1h-1zM845 258h1v1h-1zM849 258h1v1h-1zM855 258h1v1h-1zM860 258h1v1h-1zM874 258h1v1h-1zM879 258h1v1h-1zM885 258h1v1h-1zM588 259h1v1h-1zM594 259h1v1h-1zM617 259h1v1h-1zM621 259h1v1h-1zM692 259h1v1h-1zM696 259h1v1h-1zM798 259h1v1h-1zM818 259h1v1h-1zM822 259h1v1h-1zM827 259h1v1h-1zM831 259h1v1h-1zM835 259h1v1h-1zM844 259h2v1h-2zM848 259h1v1h-1zM855 259h1v1h-1zM860 259h1v1h-1zM873 259h1v1h-1zM878 259h1v1h-1zM884 259h2v1h-2zM906 259h2v1h-2zM911 259h1v1h-1zM589 260h1v1h-1zM594 260h2v1h-2zM617 260h5v1h-5zM693 260h1v1h-1zM695 260h1v1h-1zM818 260h1v1h-1zM822 260h1v1h-1zM827 260h1v1h-1zM831 260h1v1h-1zM834 260h1v1h-1zM844 260h1v1h-1zM848 260h1v1h-1zM855 260h1v1h-1zM859 260h1v1h-1zM873 260h1v1h-1zM878 260h1v1h-1zM884 260h1v1h-1zM906 260h2v1h-2zM910 260h2v1h-2zM589 261h2v1h-2zM595 261h2v1h-2zM617 261h1v1h-1zM693 261h1v1h-1zM695 261h1v1h-1zM818 261h1v1h-1zM821 261h1v1h-1zM827 261h1v1h-1zM830 261h2v1h-2zM834 261h1v1h-1zM844 261h1v1h-1zM847 261h1v1h-1zM855 261h1v1h-1zM859 261h1v1h-1zM873 261h1v1h-1zM877 261h1v1h-1zM884 261h1v1h-1zM905 261h1v1h-1zM908 261h1v1h-1zM910 261h2v1h-2zM590 262h1v1h-1zM595 262h1v1h-1zM597 262h1v1h-1zM618 262h1v1h-1zM693 262h1v1h-1zM695 262h1v1h-1zM818 262h1v1h-1zM821 262h1v1h-1zM827 262h1v1h-1zM830 262h2v1h-2zM834 262h1v1h-1zM844 262h1v1h-1zM847 262h1v1h-1zM855 262h1v1h-1zM858 262h1v1h-1zM872 262h1v1h-1zM874 262h2v1h-2zM877 262h1v1h-1zM884 262h1v1h-1zM904 262h1v1h-1zM909 262h1v1h-1zM911 262h1v1h-1zM591 263h1v1h-1zM596 263h2v1h-2zM618 263h1v1h-1zM694 263h1v1h-1zM818 263h1v1h-1zM820 263h1v1h-1zM827 263h1v1h-1zM830 263h2v1h-2zM834 263h1v1h-1zM844 263h1v1h-1zM846 263h1v1h-1zM854 263h2v1h-2zM858 263h1v1h-1zM872 263h2v1h-2zM876 263h1v1h-1zM884 263h1v1h-1zM903 263h1v1h-1zM911 263h1v1h-1zM592 264h1v1h-1zM596 264h1v1h-1zM598 264h1v1h-1zM618 264h1v1h-1zM818 264h2v1h-2zM827 264h1v1h-1zM830 264h2v1h-2zM833 264h1v1h-1zM843 264h2v1h-2zM846 264h1v1h-1zM856 264h2v1h-2zM872 264h1v1h-1zM883 264h1v1h-1zM902 264h1v1h-1zM911 264h1v1h-1zM592 265h2v1h-2zM597 265h1v1h-1zM599 265h1v1h-1zM619 265h1v1h-1zM818 265h2v1h-2zM827 265h1v1h-1zM830 265h2v1h-2zM833 265h1v1h-1zM843 265h1v1h-1zM845 265h1v1h-1zM883 265h1v1h-1zM901 265h1v1h-1zM911 265h1v1h-1zM593 266h1v1h-1zM597 266h1v1h-1zM600 266h1v1h-1zM620 266h1v1h-1zM818 266h1v1h-1zM827 266h1v1h-1zM829 266h1v1h-1zM832 266h2v1h-2zM843 266h2v1h-2zM883 266h1v1h-1zM900 266h1v1h-1zM911 266h1v1h-1zM594 267h1v1h-1zM598 267h1v1h-1zM601 267h1v1h-1zM620 267h1v1h-1zM827 267h1v1h-1zM829 267h1v1h-1zM832 267h2v1h-2zM843 267h1v1h-1zM882 267h1v1h-1zM899 267h1v1h-1zM911 267h1v1h-1zM594 268h2v1h-2zM598 268h1v1h-1zM602 268h1v1h-1zM619 268h2v1h-2zM827 268h1v1h-1zM829 268h1v1h-1zM832 268h2v1h-2zM842 268h2v1h-2zM882 268h1v1h-1zM897 268h2v1h-2zM911 268h1v1h-1zM595 269h4v1h-4zM603 269h1v1h-1zM621 269h1v1h-1zM827 269h2v1h-2zM832 269h1v1h-1zM881 269h1v1h-1zM896 269h1v1h-1zM910 269h2v1h-2zM596 270h1v1h-1zM598 270h2v1h-2zM604 270h1v1h-1zM621 270h1v1h-1zM827 270h2v1h-2zM881 270h1v1h-1zM895 270h1v1h-1zM910 270h1v1h-1zM597 271h3v1h-3zM604 271h1v1h-1zM622 271h1v1h-1zM826 271h1v1h-1zM828 271h1v1h-1zM881 271h1v1h-1zM894 271h1v1h-1zM910 271h1v1h-1zM597 272h1v1h-1zM599 272h2v1h-2zM605 272h1v1h-1zM621 272h1v1h-1zM826 272h3v1h-3zM881 272h1v1h-1zM893 272h1v1h-1zM909 272h1v1h-1zM598 273h1v1h-1zM600 273h1v1h-1zM606 273h1v1h-1zM622 273h1v1h-1zM826 273h2v1h-2zM881 273h1v1h-1zM892 273h1v1h-1zM909 273h1v1h-1zM598 274h1v1h-1zM607 274h1v1h-1zM622 274h1v1h-1zM826 274h1v1h-1zM882 274h1v1h-1zM891 274h1v1h-1zM910 274h1v1h-1zM599 275h1v1h-1zM608 275h1v1h-1zM623 275h1v1h-1zM826 275h1v1h-1zM882 275h1v1h-1zM890 275h1v1h-1zM910 275h1v1h-1zM599 276h1v1h-1zM609 276h2v1h-2zM623 276h1v1h-1zM825 276h2v1h-2zM880 276h3v1h-3zM889 276h1v1h-1zM910 276h1v1h-1zM600 277h1v1h-1zM611 277h1v1h-1zM623 277h1v1h-1zM878 277h2v1h-2zM889 277h1v1h-1zM910 277h1v1h-1zM600 278h1v1h-1zM612 278h1v1h-1zM624 278h1v1h-1zM878 278h1v1h-1zM888 278h1v1h-1zM909 278h1v1h-1zM599 279h1v1h-1zM613 279h1v1h-1zM624 279h1v1h-1zM878 279h1v1h-1zM887 279h1v1h-1zM909 279h1v1h-1zM599 280h1v1h-1zM614 280h1v1h-1zM624 280h1v1h-1zM878 280h1v1h-1zM887 280h1v1h-1zM909 280h1v1h-1zM557 281h1v1h-1zM598 281h1v1h-1zM614 281h2v1h-2zM625 281h1v1h-1zM877 281h1v1h-1zM886 281h1v1h-1zM908 281h1v1h-1zM558 282h1v1h-1zM598 282h2v1h-2zM615 282h1v1h-1zM625 282h1v1h-1zM878 282h1v1h-1zM886 282h1v1h-1zM908 282h1v1h-1zM559 283h1v1h-1zM600 283h3v1h-3zM616 283h1v1h-1zM626 283h1v1h-1zM878 283h1v1h-1zM885 283h1v1h-1zM908 283h1v1h-1zM560 284h2v1h-2zM603 284h2v1h-2zM617 284h1v1h-1zM626 284h1v1h-1zM878 284h1v1h-1zM885 284h1v1h-1zM908 284h1v1h-1zM561 285h2v1h-2zM601 285h2v1h-2zM617 285h2v1h-2zM627 285h1v1h-1zM878 285h1v1h-1zM884 285h1v1h-1zM908 285h1v1h-1zM562 286h2v1h-2zM601 286h1v1h-1zM619 286h1v1h-1zM627 286h1v1h-1zM877 286h1v1h-1zM884 286h1v1h-1zM907 286h2v1h-2zM931 286h1v1h-1zM563 287h2v1h-2zM601 287h1v1h-1zM620 287h1v1h-1zM627 287h1v1h-1zM877 287h1v1h-1zM883 287h1v1h-1zM907 287h1v1h-1zM930 287h1v1h-1zM563 288h1v1h-1zM565 288h1v1h-1zM602 288h1v1h-1zM621 288h1v1h-1zM628 288h1v1h-1zM877 288h1v1h-1zM881 288h2v1h-2zM907 288h1v1h-1zM928 288h3v1h-3zM564 289h1v1h-1zM566 289h1v1h-1zM603 289h1v1h-1zM622 289h1v1h-1zM628 289h1v1h-1zM877 289h1v1h-1zM880 289h1v1h-1zM906 289h1v1h-1zM927 289h1v1h-1zM929 289h1v1h-1zM565 290h2v1h-2zM603 290h1v1h-1zM622 290h1v1h-1zM629 290h1v1h-1zM877 290h1v1h-1zM879 290h1v1h-1zM906 290h1v1h-1zM926 290h1v1h-1zM929 290h1v1h-1zM566 291h2v1h-2zM603 291h2v1h-2zM623 291h1v1h-1zM629 291h1v1h-1zM877 291h2v1h-2zM906 291h1v1h-1zM925 291h1v1h-1zM928 291h1v1h-1zM567 292h3v1h-3zM604 292h1v1h-1zM624 292h1v1h-1zM629 292h1v1h-1zM876 292h1v1h-1zM905 292h1v1h-1zM924 292h1v1h-1zM928 292h1v1h-1zM567 293h1v1h-1zM570 293h1v1h-1zM605 293h1v1h-1zM625 293h1v1h-1zM630 293h1v1h-1zM905 293h1v1h-1zM922 293h2v1h-2zM928 293h1v1h-1zM568 294h1v1h-1zM571 294h1v1h-1zM606 294h1v1h-1zM625 294h1v1h-1zM630 294h1v1h-1zM905 294h1v1h-1zM919 294h3v1h-3zM927 294h1v1h-1zM569 295h1v1h-1zM572 295h1v1h-1zM606 295h1v1h-1zM626 295h1v1h-1zM630 295h1v1h-1zM905 295h1v1h-1zM909 295h1v1h-1zM916 295h3v1h-3zM927 295h1v1h-1zM570 296h1v1h-1zM573 296h1v1h-1zM607 296h1v1h-1zM626 296h1v1h-1zM631 296h1v1h-1zM904 296h1v1h-1zM909 296h2v1h-2zM915 296h1v1h-1zM927 296h1v1h-1zM571 297h1v1h-1zM574 297h1v1h-1zM608 297h1v1h-1zM627 297h1v1h-1zM632 297h1v1h-1zM904 297h1v1h-1zM908 297h1v1h-1zM911 297h1v1h-1zM913 297h2v1h-2zM926 297h1v1h-1zM571 298h1v1h-1zM575 298h1v1h-1zM608 298h1v1h-1zM628 298h1v1h-1zM632 298h1v1h-1zM904 298h1v1h-1zM907 298h1v1h-1zM912 298h1v1h-1zM926 298h1v1h-1zM572 299h1v1h-1zM576 299h1v1h-1zM609 299h1v1h-1zM629 299h1v1h-1zM633 299h1v1h-1zM903 299h1v1h-1zM906 299h1v1h-1zM925 299h1v1h-1zM573 300h1v1h-1zM577 300h1v1h-1zM609 300h1v1h-1zM630 300h1v1h-1zM633 300h1v1h-1zM903 300h1v1h-1zM905 300h1v1h-1zM925 300h1v1h-1zM937 300h2v1h-2zM574 301h1v1h-1zM578 301h1v1h-1zM610 301h1v1h-1zM631 301h1v1h-1zM634 301h1v1h-1zM903 301h2v1h-2zM924 301h1v1h-1zM935 301h2v1h-2zM938 301h1v1h-1zM575 302h1v1h-1zM579 302h2v1h-2zM611 302h1v1h-1zM632 302h1v1h-1zM634 302h1v1h-1zM902 302h2v1h-2zM924 302h1v1h-1zM934 302h1v1h-1zM937 302h1v1h-1zM576 303h1v1h-1zM581 303h1v1h-1zM611 303h1v1h-1zM632 303h1v1h-1zM634 303h1v1h-1zM902 303h1v1h-1zM923 303h2v1h-2zM932 303h2v1h-2zM937 303h1v1h-1zM577 304h2v1h-2zM582 304h1v1h-1zM612 304h1v1h-1zM633 304h1v1h-1zM635 304h1v1h-1zM922 304h3v1h-3zM931 304h1v1h-1zM936 304h1v1h-1zM579 305h1v1h-1zM583 305h2v1h-2zM613 305h1v1h-1zM634 305h2v1h-2zM921 305h2v1h-2zM924 305h1v1h-1zM930 305h1v1h-1zM936 305h1v1h-1zM580 306h1v1h-1zM585 306h1v1h-1zM614 306h1v1h-1zM635 306h1v1h-1zM920 306h2v1h-2zM924 306h1v1h-1zM928 306h2v1h-2zM935 306h1v1h-1zM581 307h2v1h-2zM586 307h1v1h-1zM614 307h1v1h-1zM636 307h1v1h-1zM919 307h2v1h-2zM924 307h1v1h-1zM927 307h1v1h-1zM935 307h1v1h-1zM583 308h1v1h-1zM587 308h1v1h-1zM615 308h1v1h-1zM637 308h1v1h-1zM919 308h2v1h-2zM923 308h1v1h-1zM926 308h1v1h-1zM934 308h1v1h-1zM942 308h2v1h-2zM584 309h1v1h-1zM588 309h2v1h-2zM616 309h1v1h-1zM918 309h2v1h-2zM923 309h1v1h-1zM925 309h1v1h-1zM933 309h1v1h-1zM940 309h3v1h-3zM585 310h1v1h-1zM589 310h1v1h-1zM616 310h1v1h-1zM917 310h2v1h-2zM923 310h2v1h-2zM932 310h2v1h-2zM938 310h2v1h-2zM942 310h1v1h-1zM586 311h1v1h-1zM590 311h1v1h-1zM617 311h1v1h-1zM917 311h1v1h-1zM922 311h1v1h-1zM931 311h1v1h-1zM937 311h1v1h-1zM941 311h1v1h-1zM587 312h1v1h-1zM590 312h3v1h-3zM613 312h6v1h-6zM916 312h1v1h-1zM930 312h1v1h-1zM935 312h2v1h-2zM940 312h1v1h-1zM588 313h1v1h-1zM591 313h3v1h-3zM614 313h1v1h-1zM915 313h1v1h-1zM929 313h1v1h-1zM934 313h1v1h-1zM939 313h1v1h-1zM575 314h2v1h-2zM589 314h1v1h-1zM592 314h3v1h-3zM615 314h1v1h-1zM928 314h1v1h-1zM933 314h1v1h-1zM939 314h1v1h-1zM576 315h1v1h-1zM589 315h1v1h-1zM593 315h1v1h-1zM595 315h2v1h-2zM616 315h1v1h-1zM927 315h1v1h-1zM931 315h2v1h-2zM938 315h1v1h-1zM577 316h1v1h-1zM590 316h1v1h-1zM594 316h1v1h-1zM597 316h1v1h-1zM617 316h1v1h-1zM926 316h1v1h-1zM930 316h1v1h-1zM937 316h1v1h-1zM577 317h2v1h-2zM591 317h1v1h-1zM594 317h1v1h-1zM598 317h1v1h-1zM618 317h1v1h-1zM925 317h1v1h-1zM927 317h3v1h-3zM937 317h1v1h-1zM578 318h2v1h-2zM592 318h1v1h-1zM595 318h1v1h-1zM599 318h1v1h-1zM613 318h7v1h-7zM924 318h3v1h-3zM936 318h1v1h-1zM578 319h1v1h-1zM580 319h1v1h-1zM593 319h2v1h-2zM600 319h2v1h-2zM613 319h2v1h-2zM936 319h1v1h-1zM536 320h1v1h-1zM579 320h1v1h-1zM581 320h1v1h-1zM594 320h1v1h-1zM602 320h1v1h-1zM615 320h1v1h-1zM935 320h1v1h-1zM537 321h3v1h-3zM565 321h1v1h-1zM579 321h1v1h-1zM582 321h1v1h-1zM595 321h1v1h-1zM603 321h2v1h-2zM616 321h1v1h-1zM934 321h1v1h-1zM537 322h1v1h-1zM539 322h2v1h-2zM566 322h1v1h-1zM580 322h1v1h-1zM583 322h1v1h-1zM596 322h1v1h-1zM605 322h2v1h-2zM617 322h1v1h-1zM934 322h1v1h-1zM538 323h1v1h-1zM541 323h2v1h-2zM566 323h3v1h-3zM581 323h1v1h-1zM584 323h1v1h-1zM596 323h1v1h-1zM607 323h1v1h-1zM618 323h1v1h-1zM933 323h1v1h-1zM539 324h1v1h-1zM543 324h2v1h-2zM562 324h1v1h-1zM567 324h1v1h-1zM569 324h1v1h-1zM581 324h1v1h-1zM585 324h1v1h-1zM597 324h1v1h-1zM608 324h2v1h-2zM619 324h1v1h-1zM932 324h1v1h-1zM540 325h1v1h-1zM545 325h2v1h-2zM563 325h1v1h-1zM568 325h2v1h-2zM581 325h1v1h-1zM586 325h1v1h-1zM598 325h1v1h-1zM609 325h1v1h-1zM619 325h1v1h-1zM931 325h1v1h-1zM540 326h1v1h-1zM547 326h1v1h-1zM563 326h1v1h-1zM568 326h1v1h-1zM570 326h1v1h-1zM582 326h1v1h-1zM586 326h2v1h-2zM597 326h2v1h-2zM610 326h1v1h-1zM619 326h1v1h-1zM930 326h1v1h-1zM541 327h1v1h-1zM548 327h2v1h-2zM564 327h1v1h-1zM569 327h1v1h-1zM571 327h2v1h-2zM582 327h1v1h-1zM588 327h1v1h-1zM594 327h6v1h-6zM611 327h1v1h-1zM620 327h1v1h-1zM929 327h1v1h-1zM542 328h1v1h-1zM550 328h2v1h-2zM564 328h1v1h-1zM570 328h1v1h-1zM573 328h1v1h-1zM582 328h1v1h-1zM589 328h5v1h-5zM599 328h2v1h-2zM611 328h2v1h-2zM620 328h1v1h-1zM928 328h1v1h-1zM542 329h2v1h-2zM552 329h2v1h-2zM564 329h2v1h-2zM571 329h1v1h-1zM574 329h1v1h-1zM583 329h1v1h-1zM600 329h1v1h-1zM613 329h1v1h-1zM621 329h1v1h-1zM927 329h1v1h-1zM543 330h1v1h-1zM554 330h2v1h-2zM564 330h2v1h-2zM570 330h2v1h-2zM575 330h1v1h-1zM584 330h1v1h-1zM600 330h2v1h-2zM614 330h1v1h-1zM621 330h1v1h-1zM926 330h2v1h-2zM544 331h1v1h-1zM556 331h2v1h-2zM564 331h1v1h-1zM566 331h1v1h-1zM568 331h2v1h-2zM576 331h1v1h-1zM584 331h1v1h-1zM601 331h1v1h-1zM615 331h1v1h-1zM622 331h1v1h-1zM926 331h1v1h-1zM929 331h4v1h-4zM545 332h1v1h-1zM558 332h2v1h-2zM564 332h1v1h-1zM566 332h2v1h-2zM577 332h2v1h-2zM585 332h1v1h-1zM601 332h2v1h-2zM616 332h1v1h-1zM622 332h1v1h-1zM925 332h1v1h-1zM927 332h2v1h-2zM933 332h2v1h-2zM519 333h1v1h-1zM546 333h1v1h-1zM560 333h1v1h-1zM565 333h1v1h-1zM579 333h1v1h-1zM585 333h2v1h-2zM602 333h1v1h-1zM616 333h2v1h-2zM623 333h1v1h-1zM924 333h3v1h-3zM933 333h1v1h-1zM520 334h2v1h-2zM547 334h1v1h-1zM561 334h1v1h-1zM565 334h1v1h-1zM580 334h1v1h-1zM587 334h1v1h-1zM603 334h1v1h-1zM617 334h1v1h-1zM623 334h1v1h-1zM933 334h1v1h-1zM521 335h2v1h-2zM548 335h1v1h-1zM562 335h1v1h-1zM566 335h1v1h-1zM580 335h1v1h-1zM588 335h2v1h-2zM603 335h2v1h-2zM618 335h1v1h-1zM623 335h1v1h-1zM932 335h1v1h-1zM522 336h3v1h-3zM548 336h1v1h-1zM563 336h2v1h-2zM567 336h1v1h-1zM581 336h1v1h-1zM590 336h1v1h-1zM604 336h1v1h-1zM619 336h2v1h-2zM624 336h1v1h-1zM931 336h2v1h-2zM522 337h1v1h-1zM525 337h2v1h-2zM549 337h1v1h-1zM565 337h1v1h-1zM568 337h1v1h-1zM582 337h1v1h-1zM591 337h1v1h-1zM605 337h1v1h-1zM621 337h1v1h-1zM624 337h1v1h-1zM930 337h1v1h-1zM958 337h2v1h-2zM523 338h1v1h-1zM527 338h1v1h-1zM549 338h1v1h-1zM566 338h4v1h-4zM583 338h1v1h-1zM592 338h1v1h-1zM605 338h1v1h-1zM622 338h1v1h-1zM624 338h1v1h-1zM929 338h1v1h-1zM957 338h1v1h-1zM967 338h1v1h-1zM524 339h1v1h-1zM528 339h2v1h-2zM550 339h1v1h-1zM569 339h3v1h-3zM584 339h1v1h-1zM593 339h1v1h-1zM623 339h1v1h-1zM625 339h1v1h-1zM928 339h1v1h-1zM956 339h1v1h-1zM962 339h8v1h-8zM525 340h2v1h-2zM530 340h2v1h-2zM551 340h1v1h-1zM570 340h4v1h-4zM585 340h2v1h-2zM594 340h2v1h-2zM624 340h2v1h-2zM928 340h1v1h-1zM954 340h2v1h-2zM959 340h3v1h-3zM969 340h1v1h-1zM527 341h1v1h-1zM532 341h2v1h-2zM552 341h1v1h-1zM572 341h1v1h-1zM574 341h1v1h-1zM586 341h3v1h-3zM596 341h1v1h-1zM625 341h2v1h-2zM927 341h1v1h-1zM952 341h3v1h-3zM957 341h2v1h-2zM969 341h1v1h-1zM528 342h1v1h-1zM534 342h2v1h-2zM553 342h1v1h-1zM573 342h2v1h-2zM589 342h2v1h-2zM597 342h1v1h-1zM626 342h1v1h-1zM926 342h1v1h-1zM951 342h1v1h-1zM953 342h1v1h-1zM955 342h2v1h-2zM968 342h1v1h-1zM529 343h1v1h-1zM536 343h1v1h-1zM554 343h2v1h-2zM574 343h2v1h-2zM591 343h1v1h-1zM598 343h1v1h-1zM925 343h1v1h-1zM941 343h2v1h-2zM950 343h1v1h-1zM952 343h3v1h-3zM968 343h1v1h-1zM530 344h1v1h-1zM537 344h1v1h-1zM556 344h1v1h-1zM576 344h2v1h-2zM592 344h2v1h-2zM599 344h1v1h-1zM924 344h2v1h-2zM939 344h3v1h-3zM948 344h2v1h-2zM951 344h2v1h-2zM967 344h1v1h-1zM531 345h2v1h-2zM538 345h2v1h-2zM557 345h1v1h-1zM577 345h2v1h-2zM594 345h2v1h-2zM600 345h1v1h-1zM925 345h1v1h-1zM935 345h4v1h-4zM940 345h1v1h-1zM947 345h1v1h-1zM950 345h1v1h-1zM966 345h1v1h-1zM533 346h2v1h-2zM540 346h2v1h-2zM558 346h1v1h-1zM578 346h2v1h-2zM596 346h4v1h-4zM601 346h2v1h-2zM925 346h1v1h-1zM930 346h5v1h-5zM939 346h1v1h-1zM945 346h2v1h-2zM949 346h1v1h-1zM965 346h1v1h-1zM515 347h2v1h-2zM535 347h1v1h-1zM542 347h2v1h-2zM559 347h1v1h-1zM579 347h2v1h-2zM600 347h1v1h-1zM603 347h2v1h-2zM925 347h1v1h-1zM927 347h3v1h-3zM938 347h1v1h-1zM944 347h1v1h-1zM964 347h1v1h-1zM517 348h3v1h-3zM536 348h2v1h-2zM544 348h1v1h-1zM560 348h1v1h-1zM580 348h2v1h-2zM601 348h2v1h-2zM605 348h1v1h-1zM924 348h1v1h-1zM926 348h1v1h-1zM937 348h1v1h-1zM942 348h2v1h-2zM963 348h1v1h-1zM520 349h2v1h-2zM538 349h1v1h-1zM545 349h2v1h-2zM561 349h1v1h-1zM582 349h1v1h-1zM603 349h2v1h-2zM606 349h1v1h-1zM924 349h2v1h-2zM936 349h1v1h-1zM940 349h2v1h-2zM963 349h1v1h-1zM522 350h2v1h-2zM539 350h2v1h-2zM547 350h2v1h-2zM562 350h2v1h-2zM583 350h1v1h-1zM605 350h3v1h-3zM934 350h6v1h-6zM962 350h1v1h-1zM524 351h2v1h-2zM541 351h1v1h-1zM549 351h2v1h-2zM564 351h1v1h-1zM607 351h3v1h-3zM934 351h1v1h-1zM961 351h1v1h-1zM967 351h4v1h-4zM526 352h2v1h-2zM542 352h1v1h-1zM551 352h1v1h-1zM564 352h1v1h-1zM960 352h1v1h-1zM964 352h3v1h-3zM968 352h2v1h-2zM528 353h3v1h-3zM542 353h2v1h-2zM552 353h2v1h-2zM565 353h2v1h-2zM959 353h1v1h-1zM962 353h2v1h-2zM967 353h1v1h-1zM531 354h3v1h-3zM544 354h1v1h-1zM554 354h2v1h-2zM567 354h1v1h-1zM958 354h4v1h-4zM966 354h1v1h-1zM534 355h1v1h-1zM545 355h1v1h-1zM556 355h1v1h-1zM568 355h1v1h-1zM956 355h3v1h-3zM965 355h1v1h-1zM535 356h2v1h-2zM546 356h2v1h-2zM557 356h2v1h-2zM569 356h1v1h-1zM955 356h1v1h-1zM965 356h1v1h-1zM537 357h4v1h-4zM548 357h1v1h-1zM559 357h1v1h-1zM570 357h1v1h-1zM965 357h1v1h-1zM541 358h1v1h-1zM549 358h2v1h-2zM560 358h1v1h-1zM571 358h1v1h-1zM964 358h1v1h-1zM542 359h3v1h-3zM550 359h1v1h-1zM561 359h2v1h-2zM572 359h2v1h-2zM963 359h1v1h-1zM545 360h3v1h-3zM549 360h1v1h-1zM563 360h2v1h-2zM574 360h3v1h-3zM962 360h1v1h-1zM548 361h2v1h-2zM565 361h1v1h-1zM577 361h4v1h-4zM961 361h1v1h-1zM566 362h1v1h-1zM579 362h1v1h-1zM959 362h2v1h-2zM969 362h3v1h-3zM567 363h2v1h-2zM578 363h1v1h-1zM958 363h1v1h-1zM966 363h3v1h-3zM970 363h1v1h-1zM569 364h2v1h-2zM577 364h1v1h-1zM957 364h1v1h-1zM963 364h3v1h-3zM969 364h1v1h-1zM571 365h2v1h-2zM576 365h1v1h-1zM956 365h1v1h-1zM960 365h3v1h-3zM965 365h4v1h-4zM573 366h1v1h-1zM577 366h2v1h-2zM955 366h1v1h-1zM957 366h3v1h-3zM964 366h1v1h-1zM574 367h1v1h-1zM579 367h3v1h-3zM954 367h3v1h-3zM964 367h1v1h-1zM575 368h2v1h-2zM578 368h4v1h-4zM964 368h1v1h-1zM577 369h1v1h-1zM964 369h2v1h-2zM964 370h1v1h-1zM963 371h1v1h-1zM962 372h1v1h-1zM515 373h1v1h-1zM961 373h1v1h-1zM516 374h2v1h-2zM959 374h2v1h-2zM518 375h2v1h-2zM959 375h2v1h-2zM520 376h2v1h-2zM961 376h1v1h-1zM522 377h2v1h-2zM961 377h1v1h-1zM524 378h2v1h-2zM960 378h1v1h-1zM526 379h1v1h-1zM960 379h1v1h-1zM527 380h3v1h-3zM959 380h1v1h-1zM530 381h1v1h-1zM958 381h1v1h-1zM970 381h5v1h-5zM531 382h1v1h-1zM957 382h1v1h-1zM959 382h2v1h-2zM968 382h2v1h-2zM973 382h1v1h-1zM532 383h2v1h-2zM957 383h2v1h-2zM960 383h1v1h-1zM965 383h3v1h-3zM972 383h1v1h-1zM534 384h2v1h-2zM959 384h1v1h-1zM962 384h3v1h-3zM971 384h1v1h-1zM536 385h2v1h-2zM958 385h1v1h-1zM960 385h2v1h-2zM970 385h1v1h-1zM538 386h2v1h-2zM957 386h3v1h-3zM970 386h1v1h-1zM540 387h1v1h-1zM955 387h3v1h-3zM969 387h1v1h-1zM541 388h2v1h-2zM952 388h3v1h-3zM969 388h1v1h-1zM543 389h1v1h-1zM951 389h1v1h-1zM968 389h1v1h-1zM544 390h2v1h-2zM966 390h2v1h-2zM546 391h3v1h-3zM965 391h1v1h-1zM549 392h2v1h-2zM963 392h2v1h-2z" fill="#c8c800" shape-rendering="crispEdges"/></svg>
<div style="position:absolute;left:980px;top:133px;width:17px;height:277px;background:#f0f0f0;"></div>
<div style="position:absolute;left:515px;top:393px;width:482px;height:17px;background:#f0f0f0;"></div>
<div style="position:absolute;left:981px;top:151px;width:15px;height:17px;background:#cdcdcd;"></div>
<div style="position:absolute;left:731px;top:394px;width:17px;height:15px;background:#cdcdcd;"></div>
<svg style="position:absolute;left:983.5px;top:139px" width="10" height="8" viewBox="0 0 10 8"><path d="M1.500 5.700l3.500-3.500l3.500 3.500" stroke="#505050" stroke-width="1.900" fill="none"/></svg>
<svg style="position:absolute;left:983.5px;top:380.5px" width="10" height="8" viewBox="0 0 10 8"><path d="M1.500 2.300l3.500 3.500l3.500-3.500" stroke="#505050" stroke-width="1.900" fill="none"/></svg>
<svg style="position:absolute;left:519.5px;top:396.5px" width="8" height="10" viewBox="0 0 8 10"><path d="M5.700 1.500l-3.500 3.500l3.500 3.500" stroke="#505050" stroke-width="1.900" fill="none"/></svg>
<svg style="position:absolute;left:967px;top:396.5px" width="8" height="10" viewBox="0 0 8 10"><path d="M2.300 1.500l3.500 3.500l-3.500 3.500" stroke="#505050" stroke-width="1.900" fill="none"/></svg>
<div style="position:absolute;left:992px;top:400px;width:2px;height:2px;background:#b8b8b8;"></div>
<div style="position:absolute;left:989px;top:403px;width:2px;height:2px;background:#b8b8b8;"></div>
<div style="position:absolute;left:992px;top:403px;width:2px;height:2px;background:#b8b8b8;"></div>
<div style="position:absolute;left:986px;top:406px;width:2px;height:2px;background:#b8b8b8;"></div>
<div style="position:absolute;left:989px;top:406px;width:2px;height:2px;background:#b8b8b8;"></div>
<div style="position:absolute;left:992px;top:406px;width:2px;height:2px;background:#b8b8b8;"></div>
<div style="position:absolute;left:518px;top:137px;width:138px;height:20px;background:#fff;border:1px solid #000;box-sizing:border-box;"></div>
<span class="m" style="left:521px;top:141px;color:#000">09:41:42 UT 食分:0.974</span>
<div style="position:absolute;left:13px;top:453px;width:482px;height:277px;background:#fff;"></div>
<span class="m" style="left:15px;top:460px;color:#000">2016.09.01 中部アフリカ・マダガスカル・インド洋金環日食（月縁あり・マジュンガ用）</span>
<span class="m" style="left:159px;top:474px;color:#000">046<b>°</b>18'24"E 15<b>°</b>43'20"S 標高    0m</span>
<span class="m" style="left:231px;top:502px;color:#000">金環食</span>
<span class="m" style="left:102px;top:516px;color:#000">時刻</span>
<span class="m" style="left:166px;top:516px;color:#000">食分</span>
<span class="m" style="left:207px;top:516px;color:#000">高度</span>
<span class="m" style="left:249px;top:516px;color:#000">方位</span>
<span class="m" style="left:285px;top:516px;color:#000">位置角</span>
<span class="m" style="left:330px;top:516px;color:#000">天頂角</span>
<span class="m" style="left:108px;top:530px;color:#000">UT</span>
<span class="m" style="left:300px;top:530px;color:#000">Q</span>
<span class="m" style="left:345px;top:530px;color:#000">V</span>
<span class="m" style="font-size:16px;line-height:16px;left:216.6px;top:534.6px;color:#000"><b>°</b></span>
<span class="m" style="font-size:16px;line-height:16px;left:261.1px;top:534.6px;color:#000"><b>°</b></span>
<span class="m" style="left:18px;top:544px;color:#000">第1接触</span>
<span class="m" style="left:84px;top:544px;color:#000">07:47:38.0</span>
<span class="m" style="left:162px;top:544px;color:#000">0.000</span>
<span class="m" style="left:204px;top:544px;color:#000"> 61.0</span>
<span class="m" style="left:246px;top:544px;color:#000"> 36.1</span>
<span class="m" style="left:288px;top:544px;color:#000">299.5</span>
<span class="m" style="left:330px;top:544px;color:#000"> 84.6</span>
<span class="m" style="left:18px;top:558px;color:#000">第2接触</span>
<span class="m" style="left:84px;top:558px;color:#000">09:39:29.2</span>
<span class="m" style="left:162px;top:558px;color:#000">0.973</span>
<span class="m" style="left:204px;top:558px;color:#000"> 63.8</span>
<span class="m" style="left:246px;top:558px;color:#000">334.2</span>
<span class="m" style="left:288px;top:558px;color:#000">261.7</span>
<span class="m" style="left:330px;top:558px;color:#000">106.8</span>
<span class="m" style="left:378px;top:558px;color:#000">補正値</span>
<span class="m" style="left:432px;top:558px;color:#000">  0.7s</span>
<span class="m" style="left:18px;top:572px;color:#000">食の最大</span>
<span class="m" style="left:84px;top:572px;color:#000">09:40:37.4</span>
<span class="m" style="left:162px;top:572px;color:#000">0.978</span>
<span class="m" style="left:204px;top:572px;color:#000"> 63.6</span>
<span class="m" style="left:246px;top:572px;color:#000">333.6</span>
<span class="m" style="left:288px;top:572px;color:#000">211.2</span>
<span class="m" style="left:330px;top:572px;color:#000"> 56.8</span>
<span class="m" style="left:378px;top:572px;color:#000">継続時間</span>
<span class="m" style="left:432px;top:572px;color:#000">02m 6.8s</span>
<span class="m" style="left:18px;top:586px;color:#000">第3接触</span>
<span class="m" style="left:84px;top:586px;color:#000">09:41:36.0</span>
<span class="m" style="left:162px;top:586px;color:#000">0.973</span>
<span class="m" style="left:204px;top:586px;color:#000"> 63.5</span>
<span class="m" style="left:246px;top:586px;color:#000">333.1</span>
<span class="m" style="left:288px;top:586px;color:#000">160.5</span>
<span class="m" style="left:330px;top:586px;color:#000">  6.6</span>
<span class="m" style="left:378px;top:586px;color:#000">補正値</span>
<span class="m" style="left:432px;top:586px;color:#000">-10.5s</span>
<span class="m" style="left:18px;top:600px;color:#000">第4接触</span>
<span class="m" style="left:84px;top:600px;color:#000">11:24:23.2</span>
<span class="m" style="left:162px;top:600px;color:#000">0.000</span>
<span class="m" style="left:204px;top:600px;color:#000"> 46.0</span>
<span class="m" style="left:246px;top:600px;color:#000">300.0</span>
<span class="m" style="left:288px;top:600px;color:#000">121.0</span>
<span class="m" style="left:330px;top:600px;color:#000">358.3</span>
<span class="m" style="left:183px;top:614px;color:#000">（月縁補正による計算）</span>
<svg style="position:absolute;left:515px;top:453px;background:#1c54bc" width="465" height="259" viewBox="515 453 465 259"><g shape-rendering="crispEdges"><polygon points="519.5,712.8 523.2,704.8 524.0,694.8 520.7,687.3 524.5,683.6 527.0,679.8 524.5,672.4 522.0,666.1 520.7,659.9 523.2,652.4 524.5,644.9 527.0,641.2 534.5,640.4 544.4,642.4 556.9,641.9 566.9,642.9 569.4,644.4 574.4,642.4 579.4,638.7 586.9,634.9 594.3,628.7 601.8,621.2 609.3,615.5 616.8,611.2 623.0,609.5 624.3,615.0 625.5,625.0 624.3,633.7 629.3,629.9 634.3,626.2 636.8,622.5 634.3,616.2 641.7,614.5 651.7,612.0 658.0,610.5 659.2,618.7 657.5,622.0 661.7,621.2 664.2,611.2 664.7,600.0 663.1,599.9 666.8,594.9 671.8,588.6 676.8,589.9 686.8,592.4 690.0,591.8 692.5,590.0 696.2,588.1 701.2,588.1 706.2,590.6 708.7,593.1 711.9,592.5 715.0,588.7 718.7,585.0 723.7,581.8 730.0,580.3 735.0,580.6 738.7,582.5 741.2,583.1 740.0,586.2 739.3,591.2 738.7,595.0 740.6,597.4 743.1,599.9 744.9,604.9 746.2,609.9 749.9,612.4 750.6,614.3 752.4,611.2 754.9,614.9 756.2,611.8 759.9,612.4 762.4,610.6 766.2,613.1 763.7,609.9 761.2,607.4 764.9,606.2 767.4,607.4 763.7,604.9 761.2,602.4 758.1,599.3 754.9,598.1 749.9,598.1 746.8,595.0 748.7,591.8 751.8,588.7 753.7,586.2 751.2,584.3 748.1,583.7 744.9,581.2 748.7,578.1 752.4,573.7 756.2,569.4 759.9,565.0 763.7,561.2 764.9,557.5 769.9,556.0 773.7,553.7 777.4,550.6 782.4,546.9 786.2,545.0 790.0,541.2 791.2,546.2 792.4,541.2 799.9,534.9 807.4,528.7 814.9,522.4 822.4,518.7 826.2,517.9 827.4,524.9 831.2,531.2 837.4,534.4 833.7,538.7 829.9,544.9 827.4,552.4 826.2,557.4 822.4,564.9 827.4,559.9 829.9,554.9 832.9,556.1 836.2,553.6 838.7,554.9 842.4,551.1 847.4,548.7 852.4,546.2 856.1,544.9 849.9,543.7 848.6,537.4 847.4,531.2 841.1,533.7 838.7,527.4 834.9,522.4 834.9,516.2 839.9,509.9 844.9,506.9 849.9,503.7 853.6,498.7 856.1,493.7 862.4,487.5 867.4,482.5 871.1,482.0 873.6,477.5 869.9,478.0 867.4,477.0 863.6,475.0 867.4,470.0 872.4,465.0 878.6,459.5 886.1,453.5 887.4,452.0 889.9,452.0 889.9,455.0 889.4,461.2 891.8,465.0 891.1,471.2 892.3,473.7 887.4,480.0 881.1,487.5 878.6,491.2 879.4,498.7 878.6,506.2 882.4,507.4 887.4,503.7 889.9,496.2 896.1,491.2 897.3,488.7 899.8,482.5 904.8,475.0 906.8,470.0 912.3,461.2 917.8,452.0 985.0,450.0 985.0,715.0 510.0,715.0" fill="#0cb226"/><polygon points="681.2,635.7 686.7,633.7 691.6,631.9 696.1,630.4 697.9,634.9 697.4,639.9 694.1,637.4 689.1,639.9 685.4,637.9" fill="#1c54bc"/><polygon points="705.0,595.0 708.7,593.1 706.9,596.2 708.7,596.8 712.5,595.0 718.7,593.1 716.8,595.6 713.7,597.4 710.0,598.1 706.2,597.4" fill="#1c54bc"/><polygon points="715.6,598.1 716.8,598.7 717.2,600.9 716.0,599.9" fill="#1c54bc"/><polygon points="624.4,633.6 625.6,624.8 628.1,631.1" fill="#1c54bc"/><rect x="698" y="580" width="1" height="3" fill="#0cb226"/><rect x="791" y="545" width="1" height="2" fill="#1c54bc"/></g><g shape-rendering="crispEdges"><path d="M584 453h2v1h-2zM586 454h1v1h-1zM587 455h2v1h-2zM589 456h1v1h-1zM590 457h2v1h-2zM592 458h1v1h-1zM593 459h2v1h-2zM595 460h1v1h-1zM596 461h2v1h-2zM598 462h1v1h-1zM599 463h2v1h-2zM601 464h2v1h-2zM603 465h1v1h-1zM604 466h2v1h-2zM606 467h1v1h-1zM607 468h2v1h-2zM609 469h1v1h-1zM610 470h2v1h-2zM612 471h1v1h-1zM613 472h2v1h-2zM615 473h1v1h-1zM616 474h2v1h-2zM618 475h1v1h-1zM619 476h2v1h-2zM621 477h1v1h-1zM622 478h2v1h-2zM624 479h1v1h-1zM625 480h2v1h-2zM627 481h1v1h-1zM628 482h2v1h-2zM630 483h1v1h-1zM631 484h2v1h-2zM633 485h1v1h-1zM634 486h2v1h-2zM636 487h2v1h-2zM638 488h1v1h-1zM639 489h2v1h-2zM641 490h1v1h-1zM642 491h2v1h-2zM644 492h1v1h-1zM645 493h2v1h-2zM647 494h1v1h-1zM648 495h2v1h-2zM650 496h1v1h-1zM651 497h2v1h-2zM653 498h1v1h-1zM654 499h2v1h-2zM656 500h1v1h-1zM657 501h2v1h-2zM659 502h1v1h-1zM660 503h2v1h-2zM662 504h1v1h-1zM663 505h2v1h-2zM665 506h1v1h-1zM666 507h2v1h-2zM668 508h1v1h-1zM669 509h2v1h-2zM671 510h2v1h-2zM673 511h1v1h-1zM674 512h2v1h-2zM676 513h1v1h-1zM677 514h2v1h-2zM679 515h1v1h-1zM680 516h2v1h-2zM682 517h1v1h-1zM683 518h2v1h-2zM685 519h1v1h-1zM686 520h2v1h-2zM688 521h1v1h-1zM689 522h2v1h-2zM691 523h1v1h-1zM692 524h2v1h-2zM694 525h1v1h-1zM695 526h2v1h-2zM697 527h1v1h-1zM698 528h2v1h-2zM700 529h1v1h-1zM701 530h2v1h-2zM703 531h2v1h-2zM705 532h1v1h-1zM706 533h2v1h-2zM708 534h1v1h-1zM709 535h2v1h-2zM711 536h1v1h-1zM712 537h2v1h-2zM515 538h1v1h-1zM714 538h1v1h-1zM516 539h2v1h-2zM715 539h2v1h-2zM518 540h1v1h-1zM717 540h1v1h-1zM519 541h2v1h-2zM718 541h2v1h-2zM521 542h1v1h-1zM720 542h1v1h-1zM522 543h2v1h-2zM721 543h2v1h-2zM524 544h1v1h-1zM723 544h1v1h-1zM525 545h2v1h-2zM724 545h2v1h-2zM527 546h1v1h-1zM726 546h1v1h-1zM528 547h2v1h-2zM727 547h2v1h-2zM530 548h1v1h-1zM729 548h1v1h-1zM531 549h2v1h-2zM730 549h2v1h-2zM533 550h2v1h-2zM732 550h1v1h-1zM535 551h1v1h-1zM733 551h2v1h-2zM536 552h2v1h-2zM735 552h1v1h-1zM538 553h1v1h-1zM736 553h2v1h-2zM539 554h2v1h-2zM738 554h2v1h-2zM541 555h1v1h-1zM740 555h1v1h-1zM542 556h2v1h-2zM741 556h2v1h-2zM544 557h1v1h-1zM743 557h1v1h-1zM545 558h2v1h-2zM744 558h2v1h-2zM547 559h1v1h-1zM746 559h1v1h-1zM548 560h2v1h-2zM747 560h2v1h-2zM550 561h1v1h-1zM749 561h1v1h-1zM551 562h2v1h-2zM750 562h2v1h-2zM553 563h1v1h-1zM752 563h1v1h-1zM554 564h2v1h-2zM753 564h2v1h-2zM556 565h1v1h-1zM755 565h1v1h-1zM557 566h2v1h-2zM756 566h2v1h-2zM559 567h1v1h-1zM758 567h1v1h-1zM560 568h2v1h-2zM759 568h2v1h-2zM562 569h1v1h-1zM761 569h1v1h-1zM563 570h2v1h-2zM762 570h2v1h-2zM565 571h1v1h-1zM764 571h1v1h-1zM566 572h2v1h-2zM765 572h2v1h-2zM568 573h2v1h-2zM767 573h1v1h-1zM570 574h1v1h-1zM768 574h2v1h-2zM571 575h2v1h-2zM770 575h1v1h-1zM573 576h1v1h-1zM771 576h2v1h-2zM574 577h2v1h-2zM773 577h2v1h-2zM576 578h1v1h-1zM775 578h1v1h-1zM577 579h2v1h-2zM776 579h2v1h-2zM579 580h1v1h-1zM778 580h1v1h-1zM580 581h2v1h-2zM779 581h2v1h-2zM582 582h1v1h-1zM781 582h1v1h-1zM583 583h2v1h-2zM782 583h2v1h-2zM585 584h1v1h-1zM784 584h1v1h-1zM586 585h2v1h-2zM785 585h2v1h-2zM588 586h1v1h-1zM787 586h1v1h-1zM589 587h2v1h-2zM788 587h2v1h-2zM591 588h1v1h-1zM790 588h1v1h-1zM592 589h2v1h-2zM791 589h2v1h-2zM594 590h1v1h-1zM793 590h1v1h-1zM595 591h2v1h-2zM794 591h2v1h-2zM597 592h1v1h-1zM796 592h1v1h-1zM598 593h2v1h-2zM797 593h2v1h-2zM600 594h1v1h-1zM799 594h1v1h-1zM601 595h2v1h-2zM800 595h2v1h-2zM603 596h1v1h-1zM802 596h1v1h-1zM604 597h2v1h-2zM803 597h2v1h-2zM606 598h2v1h-2zM805 598h1v1h-1zM608 599h1v1h-1zM806 599h2v1h-2zM609 600h2v1h-2zM808 600h2v1h-2zM611 601h1v1h-1zM810 601h1v1h-1zM612 602h2v1h-2zM811 602h2v1h-2zM614 603h1v1h-1zM813 603h1v1h-1zM615 604h2v1h-2zM814 604h2v1h-2zM617 605h1v1h-1zM816 605h1v1h-1zM618 606h2v1h-2zM817 606h2v1h-2zM620 607h1v1h-1zM819 607h1v1h-1zM621 608h2v1h-2zM820 608h2v1h-2zM623 609h1v1h-1zM822 609h1v1h-1zM624 610h2v1h-2zM823 610h2v1h-2zM626 611h1v1h-1zM825 611h1v1h-1zM627 612h2v1h-2zM826 612h2v1h-2zM629 613h1v1h-1zM828 613h1v1h-1zM630 614h2v1h-2zM829 614h2v1h-2zM632 615h1v1h-1zM831 615h1v1h-1zM633 616h2v1h-2zM832 616h2v1h-2zM635 617h1v1h-1zM834 617h1v1h-1zM636 618h2v1h-2zM835 618h2v1h-2zM638 619h1v1h-1zM837 619h1v1h-1zM639 620h2v1h-2zM838 620h2v1h-2zM641 621h2v1h-2zM840 621h2v1h-2zM643 622h1v1h-1zM842 622h1v1h-1zM644 623h2v1h-2zM843 623h2v1h-2zM646 624h1v1h-1zM845 624h1v1h-1zM647 625h2v1h-2zM846 625h2v1h-2zM649 626h1v1h-1zM848 626h1v1h-1zM650 627h2v1h-2zM849 627h2v1h-2zM652 628h1v1h-1zM851 628h1v1h-1zM653 629h2v1h-2zM852 629h2v1h-2zM655 630h1v1h-1zM854 630h1v1h-1zM656 631h2v1h-2zM855 631h2v1h-2zM658 632h1v1h-1zM857 632h1v1h-1zM659 633h2v1h-2zM858 633h2v1h-2zM661 634h1v1h-1zM860 634h1v1h-1zM662 635h2v1h-2zM861 635h2v1h-2zM664 636h1v1h-1zM863 636h1v1h-1zM665 637h2v1h-2zM864 637h2v1h-2zM667 638h1v1h-1zM866 638h1v1h-1zM668 639h2v1h-2zM867 639h2v1h-2zM670 640h1v1h-1zM869 640h1v1h-1zM671 641h2v1h-2zM870 641h2v1h-2zM673 642h1v1h-1zM872 642h1v1h-1zM674 643h2v1h-2zM873 643h2v1h-2zM676 644h2v1h-2zM875 644h2v1h-2zM678 645h1v1h-1zM877 645h1v1h-1zM679 646h2v1h-2zM878 646h2v1h-2zM681 647h1v1h-1zM880 647h1v1h-1zM682 648h2v1h-2zM881 648h2v1h-2zM684 649h1v1h-1zM883 649h1v1h-1zM685 650h2v1h-2zM884 650h2v1h-2zM687 651h1v1h-1zM886 651h1v1h-1zM688 652h2v1h-2zM887 652h2v1h-2zM690 653h1v1h-1zM889 653h1v1h-1zM691 654h2v1h-2zM890 654h2v1h-2zM693 655h1v1h-1zM892 655h1v1h-1zM694 656h2v1h-2zM893 656h2v1h-2zM696 657h1v1h-1zM895 657h1v1h-1zM697 658h2v1h-2zM896 658h2v1h-2zM699 659h1v1h-1zM898 659h1v1h-1zM700 660h2v1h-2zM899 660h2v1h-2zM702 661h1v1h-1zM901 661h1v1h-1zM703 662h2v1h-2zM902 662h2v1h-2zM705 663h1v1h-1zM904 663h1v1h-1zM706 664h2v1h-2zM905 664h2v1h-2zM708 665h1v1h-1zM907 665h1v1h-1zM709 666h2v1h-2zM908 666h2v1h-2zM711 667h2v1h-2zM910 667h2v1h-2zM713 668h1v1h-1zM912 668h1v1h-1zM714 669h2v1h-2zM913 669h2v1h-2zM716 670h1v1h-1zM915 670h1v1h-1zM717 671h2v1h-2zM916 671h2v1h-2zM719 672h1v1h-1zM918 672h1v1h-1zM720 673h2v1h-2zM919 673h2v1h-2zM722 674h1v1h-1zM921 674h1v1h-1zM723 675h2v1h-2zM922 675h2v1h-2zM725 676h1v1h-1zM924 676h1v1h-1zM726 677h2v1h-2zM925 677h2v1h-2zM728 678h1v1h-1zM927 678h1v1h-1zM729 679h2v1h-2zM928 679h2v1h-2zM731 680h1v1h-1zM930 680h1v1h-1zM732 681h2v1h-2zM931 681h2v1h-2zM734 682h1v1h-1zM933 682h1v1h-1zM735 683h2v1h-2zM934 683h2v1h-2zM737 684h1v1h-1zM936 684h1v1h-1zM738 685h2v1h-2zM937 685h2v1h-2zM740 686h1v1h-1zM939 686h1v1h-1zM741 687h2v1h-2zM940 687h2v1h-2zM743 688h1v1h-1zM942 688h2v1h-2zM744 689h2v1h-2zM944 689h1v1h-1zM746 690h2v1h-2zM945 690h2v1h-2zM748 691h1v1h-1zM947 691h1v1h-1zM749 692h2v1h-2zM948 692h2v1h-2zM751 693h1v1h-1zM950 693h1v1h-1zM752 694h2v1h-2zM951 694h2v1h-2zM754 695h1v1h-1zM953 695h1v1h-1zM755 696h2v1h-2zM954 696h2v1h-2zM757 697h1v1h-1zM956 697h1v1h-1zM758 698h2v1h-2zM957 698h2v1h-2zM760 699h1v1h-1zM959 699h1v1h-1zM761 700h2v1h-2zM960 700h2v1h-2zM763 701h1v1h-1zM962 701h1v1h-1zM764 702h2v1h-2zM963 702h2v1h-2zM766 703h1v1h-1zM965 703h1v1h-1zM767 704h2v1h-2zM966 704h2v1h-2zM769 705h1v1h-1zM968 705h1v1h-1zM770 706h2v1h-2zM969 706h2v1h-2zM772 707h1v1h-1zM971 707h1v1h-1zM773 708h2v1h-2zM972 708h2v1h-2zM775 709h1v1h-1zM974 709h1v1h-1zM776 710h2v1h-2zM975 710h2v1h-2zM778 711h1v1h-1zM977 711h2v1h-2z" fill="#ffa8b8"/><path d="M757 579h19v1h-19zM753 580h4v1h-4zM776 580h4v1h-4zM750 581h3v1h-3zM780 581h3v1h-3zM747 582h3v1h-3zM783 582h3v1h-3zM745 583h2v1h-2zM786 583h2v1h-2zM743 584h2v1h-2zM788 584h2v1h-2zM741 585h2v1h-2zM790 585h2v1h-2zM739 586h2v1h-2zM792 586h2v1h-2zM738 587h1v1h-1zM794 587h1v1h-1zM736 588h2v1h-2zM795 588h2v1h-2zM735 589h1v1h-1zM797 589h1v1h-1zM734 590h1v1h-1zM798 590h1v1h-1zM733 591h1v1h-1zM799 591h2v1h-2zM731 592h2v1h-2zM801 592h1v1h-1zM730 593h1v1h-1zM802 593h1v1h-1zM729 594h1v1h-1zM803 594h1v1h-1zM728 595h1v1h-1zM804 595h1v1h-1zM727 596h1v1h-1zM805 596h1v1h-1zM727 597h1v1h-1zM806 597h1v1h-1zM726 598h1v1h-1zM807 598h1v1h-1zM725 599h1v1h-1zM808 599h1v1h-1zM724 600h1v1h-1zM809 600h1v1h-1zM723 601h1v1h-1zM810 601h1v1h-1zM723 602h1v1h-1zM810 602h1v1h-1zM722 603h1v1h-1zM811 603h1v1h-1zM721 604h1v1h-1zM812 604h1v1h-1zM721 605h1v1h-1zM812 605h1v1h-1zM720 606h1v1h-1zM813 606h1v1h-1zM719 607h1v1h-1zM813 607h1v1h-1zM719 608h1v1h-1zM814 608h1v1h-1zM718 609h1v1h-1zM814 609h1v1h-1zM718 610h1v1h-1zM815 610h1v1h-1zM717 611h1v1h-1zM815 611h1v1h-1zM717 612h1v1h-1zM816 612h1v1h-1zM716 613h1v1h-1zM816 613h1v1h-1zM716 614h1v1h-1zM817 614h1v1h-1zM716 615h1v1h-1zM817 615h1v1h-1zM715 616h1v1h-1zM817 616h1v1h-1zM715 617h1v1h-1zM818 617h1v1h-1zM714 618h1v1h-1zM818 618h1v1h-1zM714 619h1v1h-1zM818 619h1v1h-1zM714 620h1v1h-1zM819 620h1v1h-1zM714 621h1v1h-1zM819 621h1v1h-1zM713 622h1v1h-1zM819 622h1v1h-1zM713 623h1v1h-1zM819 623h1v1h-1zM713 624h1v1h-1zM820 624h1v1h-1zM713 625h1v1h-1zM820 625h1v1h-1zM712 626h1v1h-1zM820 626h1v1h-1zM712 627h1v1h-1zM820 627h1v1h-1zM712 628h1v1h-1zM820 628h1v1h-1zM712 629h1v1h-1zM820 629h1v1h-1zM712 630h1v1h-1zM820 630h1v1h-1zM712 631h1v1h-1zM821 631h1v1h-1zM712 632h1v1h-1zM821 632h1v1h-1zM712 633h1v1h-1zM821 633h1v1h-1zM711 634h1v1h-1zM821 634h1v1h-1zM711 635h1v1h-1zM821 635h1v1h-1zM711 636h1v1h-1zM821 636h1v1h-1zM711 637h1v1h-1zM821 637h1v1h-1zM711 638h1v1h-1zM821 638h1v1h-1zM711 639h1v1h-1zM821 639h1v1h-1zM711 640h1v1h-1zM821 640h1v1h-1zM712 641h1v1h-1zM821 641h1v1h-1zM712 642h1v1h-1zM821 642h1v1h-1zM712 643h1v1h-1zM821 643h1v1h-1zM712 644h1v1h-1zM820 644h1v1h-1zM712 645h1v1h-1zM820 645h1v1h-1zM712 646h1v1h-1zM820 646h1v1h-1zM712 647h1v1h-1zM820 647h1v1h-1zM712 648h1v1h-1zM820 648h1v1h-1zM713 649h1v1h-1zM820 649h1v1h-1zM713 650h1v1h-1zM819 650h1v1h-1zM713 651h1v1h-1zM819 651h1v1h-1zM713 652h1v1h-1zM819 652h1v1h-1zM714 653h1v1h-1zM819 653h1v1h-1zM714 654h1v1h-1zM819 654h1v1h-1zM714 655h1v1h-1zM818 655h1v1h-1zM715 656h1v1h-1zM818 656h1v1h-1zM715 657h1v1h-1zM818 657h1v1h-1zM715 658h1v1h-1zM817 658h1v1h-1zM716 659h1v1h-1zM817 659h1v1h-1zM716 660h1v1h-1zM817 660h1v1h-1zM716 661h1v1h-1zM816 661h1v1h-1zM717 662h1v1h-1zM816 662h1v1h-1zM717 663h1v1h-1zM815 663h1v1h-1zM718 664h1v1h-1zM815 664h1v1h-1zM718 665h1v1h-1zM814 665h1v1h-1zM719 666h1v1h-1zM814 666h1v1h-1zM719 667h1v1h-1zM813 667h1v1h-1zM720 668h1v1h-1zM813 668h1v1h-1zM721 669h1v1h-1zM812 669h1v1h-1zM721 670h1v1h-1zM811 670h1v1h-1zM722 671h1v1h-1zM811 671h1v1h-1zM723 672h1v1h-1zM810 672h1v1h-1zM723 673h1v1h-1zM809 673h1v1h-1zM724 674h1v1h-1zM809 674h1v1h-1zM725 675h1v1h-1zM808 675h1v1h-1zM726 676h1v1h-1zM807 676h1v1h-1zM727 677h1v1h-1zM806 677h1v1h-1zM728 678h1v1h-1zM805 678h1v1h-1zM729 679h1v1h-1zM804 679h1v1h-1zM730 680h1v1h-1zM803 680h1v1h-1zM731 681h1v1h-1zM802 681h1v1h-1zM732 682h1v1h-1zM801 682h1v1h-1zM733 683h1v1h-1zM800 683h1v1h-1zM734 684h1v1h-1zM799 684h1v1h-1zM735 685h1v1h-1zM797 685h2v1h-2zM736 686h1v1h-1zM796 686h1v1h-1zM737 687h2v1h-2zM794 687h2v1h-2zM739 688h2v1h-2zM793 688h1v1h-1zM741 689h1v1h-1zM791 689h2v1h-2zM742 690h3v1h-3zM789 690h2v1h-2zM745 691h2v1h-2zM786 691h3v1h-3zM747 692h3v1h-3zM784 692h2v1h-2zM750 693h3v1h-3zM781 693h3v1h-3zM753 694h4v1h-4zM776 694h5v1h-5zM757 695h19v1h-19z" fill="#88ff88"/><path d="M515 473h2v1h-2zM517 474h2v1h-2zM519 475h1v1h-1zM520 476h2v1h-2zM522 477h1v1h-1zM523 478h2v1h-2zM525 479h1v1h-1zM526 480h2v1h-2zM528 481h1v1h-1zM529 482h2v1h-2zM531 483h1v1h-1zM532 484h2v1h-2zM534 485h1v1h-1zM535 486h2v1h-2zM537 487h1v1h-1zM538 488h2v1h-2zM540 489h1v1h-1zM541 490h2v1h-2zM543 491h1v1h-1zM544 492h2v1h-2zM546 493h1v1h-1zM547 494h2v1h-2zM549 495h1v1h-1zM550 496h2v1h-2zM552 497h1v1h-1zM553 498h2v1h-2zM555 499h2v1h-2zM557 500h1v1h-1zM558 501h2v1h-2zM560 502h1v1h-1zM561 503h2v1h-2zM563 504h1v1h-1zM564 505h2v1h-2zM566 506h1v1h-1zM567 507h2v1h-2zM569 508h1v1h-1zM570 509h2v1h-2zM572 510h1v1h-1zM573 511h2v1h-2zM575 512h1v1h-1zM576 513h2v1h-2zM578 514h1v1h-1zM579 515h2v1h-2zM581 516h1v1h-1zM582 517h2v1h-2zM584 518h1v1h-1zM585 519h2v1h-2zM587 520h1v1h-1zM588 521h2v1h-2zM590 522h1v1h-1zM591 523h2v1h-2zM593 524h2v1h-2zM595 525h1v1h-1zM596 526h2v1h-2zM598 527h1v1h-1zM599 528h2v1h-2zM601 529h1v1h-1zM602 530h2v1h-2zM604 531h1v1h-1zM605 532h2v1h-2zM607 533h1v1h-1zM608 534h2v1h-2zM610 535h1v1h-1zM611 536h2v1h-2zM613 537h1v1h-1zM614 538h2v1h-2zM616 539h1v1h-1zM617 540h2v1h-2zM619 541h1v1h-1zM620 542h2v1h-2zM622 543h1v1h-1zM623 544h2v1h-2zM625 545h1v1h-1zM626 546h2v1h-2zM628 547h1v1h-1zM629 548h2v1h-2zM631 549h2v1h-2zM633 550h1v1h-1zM634 551h2v1h-2zM636 552h1v1h-1zM637 553h2v1h-2zM639 554h1v1h-1zM640 555h2v1h-2zM642 556h1v1h-1zM643 557h2v1h-2zM645 558h1v1h-1zM646 559h2v1h-2zM648 560h1v1h-1zM649 561h2v1h-2zM651 562h1v1h-1zM652 563h2v1h-2zM654 564h1v1h-1zM655 565h2v1h-2zM657 566h1v1h-1zM658 567h2v1h-2zM660 568h1v1h-1zM661 569h2v1h-2zM663 570h1v1h-1zM664 571h2v1h-2zM666 572h1v1h-1zM667 573h2v1h-2zM736 573h1v1h-1zM756 573h1v1h-1zM669 574h1v1h-1zM737 574h1v1h-1zM755 574h1v1h-1zM670 575h2v1h-2zM738 575h1v1h-1zM754 575h1v1h-1zM672 576h2v1h-2zM739 576h1v1h-1zM753 576h1v1h-1zM674 577h1v1h-1zM740 577h1v1h-1zM752 577h1v1h-1zM675 578h2v1h-2zM741 578h1v1h-1zM751 578h1v1h-1zM677 579h1v1h-1zM742 579h1v1h-1zM750 579h1v1h-1zM678 580h2v1h-2zM743 580h1v1h-1zM749 580h1v1h-1zM680 581h1v1h-1zM744 581h1v1h-1zM748 581h1v1h-1zM681 582h2v1h-2zM745 582h1v1h-1zM747 582h1v1h-1zM683 583h1v1h-1zM746 583h1v1h-1zM684 584h2v1h-2zM745 584h1v1h-1zM747 584h1v1h-1zM686 585h1v1h-1zM744 585h1v1h-1zM748 585h1v1h-1zM687 586h2v1h-2zM743 586h1v1h-1zM749 586h1v1h-1zM689 587h1v1h-1zM742 587h1v1h-1zM750 587h1v1h-1zM690 588h2v1h-2zM741 588h1v1h-1zM751 588h1v1h-1zM692 589h1v1h-1zM740 589h1v1h-1zM752 589h1v1h-1zM693 590h2v1h-2zM739 590h1v1h-1zM753 590h1v1h-1zM695 591h1v1h-1zM738 591h1v1h-1zM754 591h1v1h-1zM696 592h2v1h-2zM737 592h1v1h-1zM755 592h1v1h-1zM698 593h1v1h-1zM736 593h1v1h-1zM756 593h1v1h-1zM699 594h2v1h-2zM701 595h1v1h-1zM702 596h2v1h-2zM704 597h1v1h-1zM705 598h2v1h-2zM707 599h1v1h-1zM708 600h2v1h-2zM710 601h2v1h-2zM712 602h1v1h-1zM713 603h2v1h-2zM715 604h1v1h-1zM716 605h2v1h-2zM718 606h1v1h-1zM719 607h2v1h-2zM721 608h1v1h-1zM722 609h2v1h-2zM724 610h1v1h-1zM725 611h2v1h-2zM727 612h1v1h-1zM728 613h2v1h-2zM730 614h1v1h-1zM731 615h2v1h-2zM733 616h1v1h-1zM734 617h2v1h-2zM736 618h1v1h-1zM737 619h2v1h-2zM739 620h1v1h-1zM740 621h2v1h-2zM742 622h1v1h-1zM743 623h2v1h-2zM745 624h1v1h-1zM746 625h2v1h-2zM748 626h2v1h-2zM750 627h1v1h-1zM751 628h2v1h-2zM753 629h1v1h-1zM754 630h2v1h-2zM756 631h1v1h-1zM757 632h2v1h-2zM759 633h1v1h-1zM760 634h2v1h-2zM762 635h1v1h-1zM763 636h2v1h-2zM765 637h1v1h-1zM766 638h2v1h-2zM768 639h1v1h-1zM769 640h2v1h-2zM771 641h1v1h-1zM772 642h2v1h-2zM774 643h1v1h-1zM775 644h2v1h-2zM777 645h1v1h-1zM778 646h2v1h-2zM780 647h1v1h-1zM781 648h2v1h-2zM783 649h1v1h-1zM784 650h2v1h-2zM786 651h2v1h-2zM788 652h1v1h-1zM789 653h2v1h-2zM791 654h1v1h-1zM792 655h2v1h-2zM794 656h1v1h-1zM795 657h2v1h-2zM797 658h1v1h-1zM798 659h2v1h-2zM800 660h1v1h-1zM801 661h2v1h-2zM803 662h1v1h-1zM804 663h2v1h-2zM806 664h1v1h-1zM807 665h2v1h-2zM809 666h1v1h-1zM810 667h2v1h-2zM812 668h1v1h-1zM813 669h2v1h-2zM815 670h1v1h-1zM816 671h2v1h-2zM818 672h1v1h-1zM819 673h2v1h-2zM821 674h1v1h-1zM822 675h2v1h-2zM824 676h1v1h-1zM825 677h2v1h-2zM827 678h2v1h-2zM829 679h1v1h-1zM830 680h2v1h-2zM832 681h1v1h-1zM833 682h2v1h-2zM835 683h1v1h-1zM836 684h2v1h-2zM838 685h1v1h-1zM839 686h2v1h-2zM841 687h1v1h-1zM842 688h2v1h-2zM844 689h1v1h-1zM845 690h2v1h-2zM847 691h1v1h-1zM848 692h2v1h-2zM850 693h1v1h-1zM851 694h2v1h-2zM853 695h1v1h-1zM854 696h2v1h-2zM856 697h1v1h-1zM857 698h2v1h-2zM859 699h1v1h-1zM860 700h2v1h-2zM862 701h1v1h-1zM863 702h2v1h-2zM865 703h2v1h-2zM867 704h1v1h-1zM868 705h2v1h-2zM870 706h1v1h-1zM871 707h2v1h-2zM873 708h1v1h-1zM874 709h2v1h-2zM876 710h1v1h-1zM877 711h2v1h-2z" fill="#f00"/></g></svg>
<div style="position:absolute;left:980px;top:452px;width:17px;height:277px;background:#f0f0f0;"></div>
<div style="position:absolute;left:515px;top:712px;width:482px;height:17px;background:#f0f0f0;"></div>
<div style="position:absolute;left:981px;top:591px;width:15px;height:17px;background:#cdcdcd;"></div>
<div style="position:absolute;left:585px;top:713px;width:17px;height:15px;background:#cdcdcd;"></div>
<svg style="position:absolute;left:983.5px;top:458px" width="10" height="8" viewBox="0 0 10 8"><path d="M1.500 5.700l3.500-3.500l3.500 3.500" stroke="#505050" stroke-width="1.900" fill="none"/></svg>
<svg style="position:absolute;left:983.5px;top:699.5px" width="10" height="8" viewBox="0 0 10 8"><path d="M1.500 2.300l3.500 3.500l3.500-3.500" stroke="#505050" stroke-width="1.900" fill="none"/></svg>
<svg style="position:absolute;left:519.5px;top:715.5px" width="8" height="10" viewBox="0 0 8 10"><path d="M5.700 1.500l-3.500 3.500l3.500 3.500" stroke="#505050" stroke-width="1.900" fill="none"/></svg>
<svg style="position:absolute;left:967px;top:715.5px" width="8" height="10" viewBox="0 0 8 10"><path d="M2.300 1.500l3.500 3.500l-3.500 3.500" stroke="#505050" stroke-width="1.900" fill="none"/></svg>
<div style="position:absolute;left:992px;top:719px;width:2px;height:2px;background:#b8b8b8;"></div>
<div style="position:absolute;left:989px;top:722px;width:2px;height:2px;background:#b8b8b8;"></div>
<div style="position:absolute;left:992px;top:722px;width:2px;height:2px;background:#b8b8b8;"></div>
<div style="position:absolute;left:986px;top:725px;width:2px;height:2px;background:#b8b8b8;"></div>
<div style="position:absolute;left:989px;top:725px;width:2px;height:2px;background:#b8b8b8;"></div>
<div style="position:absolute;left:992px;top:725px;width:2px;height:2px;background:#b8b8b8;"></div>
<div style="position:absolute;left:518px;top:456px;width:138px;height:20px;background:#fff;border:1px solid #000;box-sizing:border-box;"></div>
<span class="m" style="left:521px;top:460px;color:#000">09:41:42 UT 食分:0.974</span>
<div style="position:absolute;left:657px;top:456px;width:174px;height:20px;background:#fff;border:1px solid #000;box-sizing:border-box;"></div>
<span class="m" style="left:660px;top:460px;color:#000">046<b>°</b>18'24"E 15<b>°</b>43'20"S    0m</span>
<div style="position:absolute;left:1px;top:739px;width:1008px;height:1px;background:#fff;"></div>
<div style="position:absolute;left:1px;top:740px;width:1008px;height:1px;background:#d7d7d7;"></div>
<div style="position:absolute;left:1px;top:741px;width:1008px;height:19px;background:#f0f0f0;"></div>
<div style="position:absolute;left:811px;top:743px;width:1px;height:16px;background:#d2d2d2;"></div>
<div style="position:absolute;left:990px;top:743px;width:1px;height:16px;background:#d2d2d2;"></div>
<div style="position:absolute;left:1002px;top:750px;width:2px;height:2px;background:#b8b8b8;"></div>
<div style="position:absolute;left:999px;top:753px;width:2px;height:2px;background:#b8b8b8;"></div>
<div style="position:absolute;left:1002px;top:753px;width:2px;height:2px;background:#b8b8b8;"></div>
<div style="position:absolute;left:996px;top:756px;width:2px;height:2px;background:#b8b8b8;"></div>
<div style="position:absolute;left:999px;top:756px;width:2px;height:2px;background:#b8b8b8;"></div>
<div style="position:absolute;left:1002px;top:756px;width:2px;height:2px;background:#b8b8b8;"></div>
<span style="position:absolute;left:29.50px;top:9.50px;white-space:pre;font:12px/1 'Liberation Sans','Noto Sans CJK JP',sans-serif;color:#000;transform-origin:0 0;transform:scaleX(0.7124);">エクリプスナビゲータ</span>
<span style="position:absolute;left:119.50px;top:9.50px;white-space:pre;font:12px/1 'Liberation Sans','Noto Sans CJK JP',sans-serif;color:#000;transform-origin:0 0;transform:scaleX(1.0000);">-</span>
<span style="position:absolute;left:128.00px;top:9.50px;white-space:pre;font:12px/1 'Liberation Sans','Noto Sans CJK JP',sans-serif;color:#000;transform-origin:0 0;transform:scaleX(0.8491);">2016.09.01</span>
<span style="position:absolute;left:185.50px;top:9.50px;white-space:pre;font:12px/1 'Liberation Sans','Noto Sans CJK JP',sans-serif;color:#000;transform-origin:0 0;transform:scaleX(0.9369);">中部</span>
<span style="position:absolute;left:208.50px;top:9.50px;white-space:pre;font:12px/1 'Liberation Sans','Noto Sans CJK JP',sans-serif;color:#000;transform-origin:0 0;transform:scaleX(0.6861);">アフリカ・マダガスカル・インド</span>
<span style="position:absolute;left:332.00px;top:9.50px;white-space:pre;font:12px/1 'Liberation Sans','Noto Sans CJK JP',sans-serif;color:#000;transform-origin:0 0;transform:scaleX(1.0311);">洋金環日食（月縁</span>
<span style="position:absolute;left:432.00px;top:9.50px;white-space:pre;font:12px/1 'Liberation Sans','Noto Sans CJK JP',sans-serif;color:#000;transform-origin:0 0;transform:scaleX(0.7355);">あり・マジュンガ</span>
<span style="position:absolute;left:502.50px;top:9.50px;white-space:pre;font:12px/1 'Liberation Sans','Noto Sans CJK JP',sans-serif;color:#000;transform-origin:0 0;transform:scaleX(1.0202);">用）</span>
<span style="position:absolute;left:8.00px;top:34.50px;white-space:pre;font:12px/1 'Liberation Sans','Noto Sans CJK JP',sans-serif;color:#000;transform-origin:0 0;transform:scaleX(0.7262);">ファイル(<u>F</u>)</span>
<span style="position:absolute;left:70.00px;top:34.50px;white-space:pre;font:12px/1 'Liberation Sans','Noto Sans CJK JP',sans-serif;color:#000;transform-origin:0 0;transform:scaleX(0.9121);">編集(<u>E</u>)</span>
<span style="position:absolute;left:122.50px;top:34.50px;white-space:pre;font:12px/1 'Liberation Sans','Noto Sans CJK JP',sans-serif;color:#000;transform-origin:0 0;transform:scaleX(0.8996);">設定(<u>S</u>)</span>
<span style="position:absolute;left:174.50px;top:34.50px;white-space:pre;font:12px/1 'Liberation Sans','Noto Sans CJK JP',sans-serif;color:#000;transform-origin:0 0;transform:scaleX(0.9492);">日食要素(<u>L</u>)</span>
<span style="position:absolute;left:249.50px;top:34.50px;white-space:pre;font:12px/1 'Liberation Sans','Noto Sans CJK JP',sans-serif;color:#000;transform-origin:0 0;transform:scaleX(0.9496);">表示(<u>V</u>)</span>
<span style="position:absolute;left:303.00px;top:34.50px;white-space:pre;font:12px/1 'Liberation Sans','Noto Sans CJK JP',sans-serif;color:#000;transform-origin:0 0;transform:scaleX(0.9150);">時刻(<u>T</u>)</span>
<span style="position:absolute;left:354.00px;top:34.50px;white-space:pre;font:12px/1 'Liberation Sans','Noto Sans CJK JP',sans-serif;color:#000;transform-origin:0 0;transform:scaleX(0.7500);">ウィンドウ(<u>W</u>)</span>
<span style="position:absolute;left:428.50px;top:34.50px;white-space:pre;font:12px/1 'Liberation Sans','Noto Sans CJK JP',sans-serif;color:#000;transform-origin:0 0;transform:scaleX(0.8449);">ヘルプ(<u>H</u>)</span>
<span style="position:absolute;left:148.00px;top:57.50px;white-space:pre;font:12px/1 'Liberation Sans','Noto Sans CJK JP',sans-serif;color:#000;transform-origin:0 0;transform:scaleX(0.9063);">7.4度</span>
<span style="position:absolute;left:13.00px;top:81.50px;white-space:pre;font:12px/1 'Liberation Sans','Noto Sans CJK JP',sans-serif;color:#000;transform-origin:0 0;transform:scaleX(0.8027);">1秒</span>
<span style="position:absolute;left:286.00px;top:81.50px;white-space:pre;font:12px/1 'Liberation Sans','Noto Sans CJK JP',sans-serif;color:#000;transform-origin:0 0;transform:scaleX(0.8767);">57.8倍</span>
<span style="position:absolute;left:33.00px;top:114.50px;white-space:pre;font:12px/1 'Liberation Sans','Noto Sans CJK JP',sans-serif;color:#8091ab;transform-origin:0 0;transform:scaleX(0.8907);">2016.09.01</span>
<span style="position:absolute;left:90.50px;top:114.50px;white-space:pre;font:12px/1 'Liberation Sans','Noto Sans CJK JP',sans-serif;color:#8091ab;transform-origin:0 0;transform:scaleX(0.9785);">中部</span>
<span style="position:absolute;left:114.50px;top:114.50px;white-space:pre;font:12px/1 'Liberation Sans','Noto Sans CJK JP',sans-serif;color:#8091ab;transform-origin:0 0;transform:scaleX(0.7069);">アフリカ・マダガスカル・インド</span>
<span style="position:absolute;left:241.75px;top:114.50px;white-space:pre;font:12px/1 'Liberation Sans','Noto Sans CJK JP',sans-serif;color:#8091ab;transform-origin:0 0;transform:scaleX(1.0207);">洋金環日食（月縁</span>
<span style="position:absolute;left:339.50px;top:114.50px;white-space:pre;font:12px/1 'Liberation Sans','Noto Sans CJK JP',sans-serif;color:#8091ab;transform-origin:0 0;transform:scaleX(0.7141);">あり・マジ...</span>
<span style="position:absolute;left:535.00px;top:114.50px;white-space:pre;font:12px/1 'Liberation Sans','Noto Sans CJK JP',sans-serif;color:#000;transform-origin:0 0;transform:scaleX(0.8907);">2016.09.01</span>
<span style="position:absolute;left:592.50px;top:114.50px;white-space:pre;font:12px/1 'Liberation Sans','Noto Sans CJK JP',sans-serif;color:#000;transform-origin:0 0;transform:scaleX(0.9785);">中部</span>
<span style="position:absolute;left:616.50px;top:114.50px;white-space:pre;font:12px/1 'Liberation Sans','Noto Sans CJK JP',sans-serif;color:#000;transform-origin:0 0;transform:scaleX(0.7069);">アフリカ・マダガスカル・インド</span>
<span style="position:absolute;left:743.75px;top:114.50px;white-space:pre;font:12px/1 'Liberation Sans','Noto Sans CJK JP',sans-serif;color:#000;transform-origin:0 0;transform:scaleX(1.0207);">洋金環日食（月縁</span>
<span style="position:absolute;left:841.50px;top:114.50px;white-space:pre;font:12px/1 'Liberation Sans','Noto Sans CJK JP',sans-serif;color:#000;transform-origin:0 0;transform:scaleX(0.7141);">あり・マジ...</span>
<span style="position:absolute;left:33.00px;top:433.50px;white-space:pre;font:12px/1 'Liberation Sans','Noto Sans CJK JP',sans-serif;color:#8091ab;transform-origin:0 0;transform:scaleX(0.8907);">2016.09.01</span>
<span style="position:absolute;left:90.50px;top:433.50px;white-space:pre;font:12px/1 'Liberation Sans','Noto Sans CJK JP',sans-serif;color:#8091ab;transform-origin:0 0;transform:scaleX(0.9785);">中部</span>
<span style="position:absolute;left:114.50px;top:433.50px;white-space:pre;font:12px/1 'Liberation Sans','Noto Sans CJK JP',sans-serif;color:#8091ab;transform-origin:0 0;transform:scaleX(0.7069);">アフリカ・マダガスカル・インド</span>
<span style="position:absolute;left:241.75px;top:433.50px;white-space:pre;font:12px/1 'Liberation Sans','Noto Sans CJK JP',sans-serif;color:#8091ab;transform-origin:0 0;transform:scaleX(1.0207);">洋金環日食（月縁</span>
<span style="position:absolute;left:339.50px;top:433.50px;white-space:pre;font:12px/1 'Liberation Sans','Noto Sans CJK JP',sans-serif;color:#8091ab;transform-origin:0 0;transform:scaleX(0.7141);">あり・マジ...</span>
<span style="position:absolute;left:535.00px;top:433.50px;white-space:pre;font:12px/1 'Liberation Sans','Noto Sans CJK JP',sans-serif;color:#8091ab;transform-origin:0 0;transform:scaleX(0.8907);">2016.09.01</span>
<span style="position:absolute;left:592.50px;top:433.50px;white-space:pre;font:12px/1 'Liberation Sans','Noto Sans CJK JP',sans-serif;color:#8091ab;transform-origin:0 0;transform:scaleX(0.9785);">中部</span>
<span style="position:absolute;left:616.50px;top:433.50px;white-space:pre;font:12px/1 'Liberation Sans','Noto Sans CJK JP',sans-serif;color:#8091ab;transform-origin:0 0;transform:scaleX(0.7069);">アフリカ・マダガスカル・インド</span>
<span style="position:absolute;left:743.75px;top:433.50px;white-space:pre;font:12px/1 'Liberation Sans','Noto Sans CJK JP',sans-serif;color:#8091ab;transform-origin:0 0;transform:scaleX(1.0207);">洋金環日食（月縁</span>
<span style="position:absolute;left:841.50px;top:433.50px;white-space:pre;font:12px/1 'Liberation Sans','Noto Sans CJK JP',sans-serif;color:#8091ab;transform-origin:0 0;transform:scaleX(0.7141);">あり・マジ...</span>
<span style="position:absolute;left:3.00px;top:746.50px;white-space:pre;font:12px/1 'Liberation Sans','Noto Sans CJK JP',sans-serif;color:#000;transform-origin:0 0;transform:scaleX(0.8291);">ヘルプを表示するには</span>
<span style="position:absolute;left:107.00px;top:746.50px;white-space:pre;font:12px/1 'Liberation Sans','Noto Sans CJK JP',sans-serif;color:#000;transform-origin:0 0;transform:scaleX(0.8707);">[F1]</span>
<span style="position:absolute;left:128.50px;top:746.50px;white-space:pre;font:12px/1 'Liberation Sans','Noto Sans CJK JP',sans-serif;color:#000;transform-origin:0 0;transform:scaleX(0.7690);">を押してください。</span>
<span style="position:absolute;left:398.00px;top:746.50px;white-space:pre;font:12px/1 'Liberation Sans','Noto Sans CJK JP',sans-serif;color:#000;transform-origin:0 0;transform:scaleX(0.8286);">GPS</span>
<span style="position:absolute;left:419.50px;top:746.50px;white-space:pre;font:12px/1 'Liberation Sans','Noto Sans CJK JP',sans-serif;color:#000;transform-origin:0 0;transform:scaleX(0.9987);">：</span>
<span style="position:absolute;left:431.00px;top:746.50px;white-space:pre;font:12px/1 'Liberation Sans','Noto Sans CJK JP',sans-serif;color:#000;transform-origin:0 0;transform:scaleX(0.7703);">なし</span>
<span style="position:absolute;left:816.50px;top:746.50px;white-space:pre;font:12px/1 'Liberation Sans','Noto Sans CJK JP',sans-serif;color:#000;transform-origin:0 0;transform:scaleX(0.9577);">方位</span>
<span style="position:absolute;left:843.50px;top:746.50px;white-space:pre;font:12px/1 'Liberation Sans','Noto Sans CJK JP',sans-serif;color:#000;transform-origin:0 0;transform:scaleX(0.9389);">342.0°</span>
<span style="position:absolute;left:876.50px;top:746.50px;white-space:pre;font:12px/1 'Liberation Sans','Noto Sans CJK JP',sans-serif;color:#000;transform-origin:0 0;transform:scaleX(0.9577);">高度</span>
<span style="position:absolute;left:906.70px;top:746.50px;white-space:pre;font:12px/1 'Liberation Sans','Noto Sans CJK JP',sans-serif;color:#000;transform-origin:0 0;transform:scaleX(0.9057);">65.3°</span>
</body></html>
